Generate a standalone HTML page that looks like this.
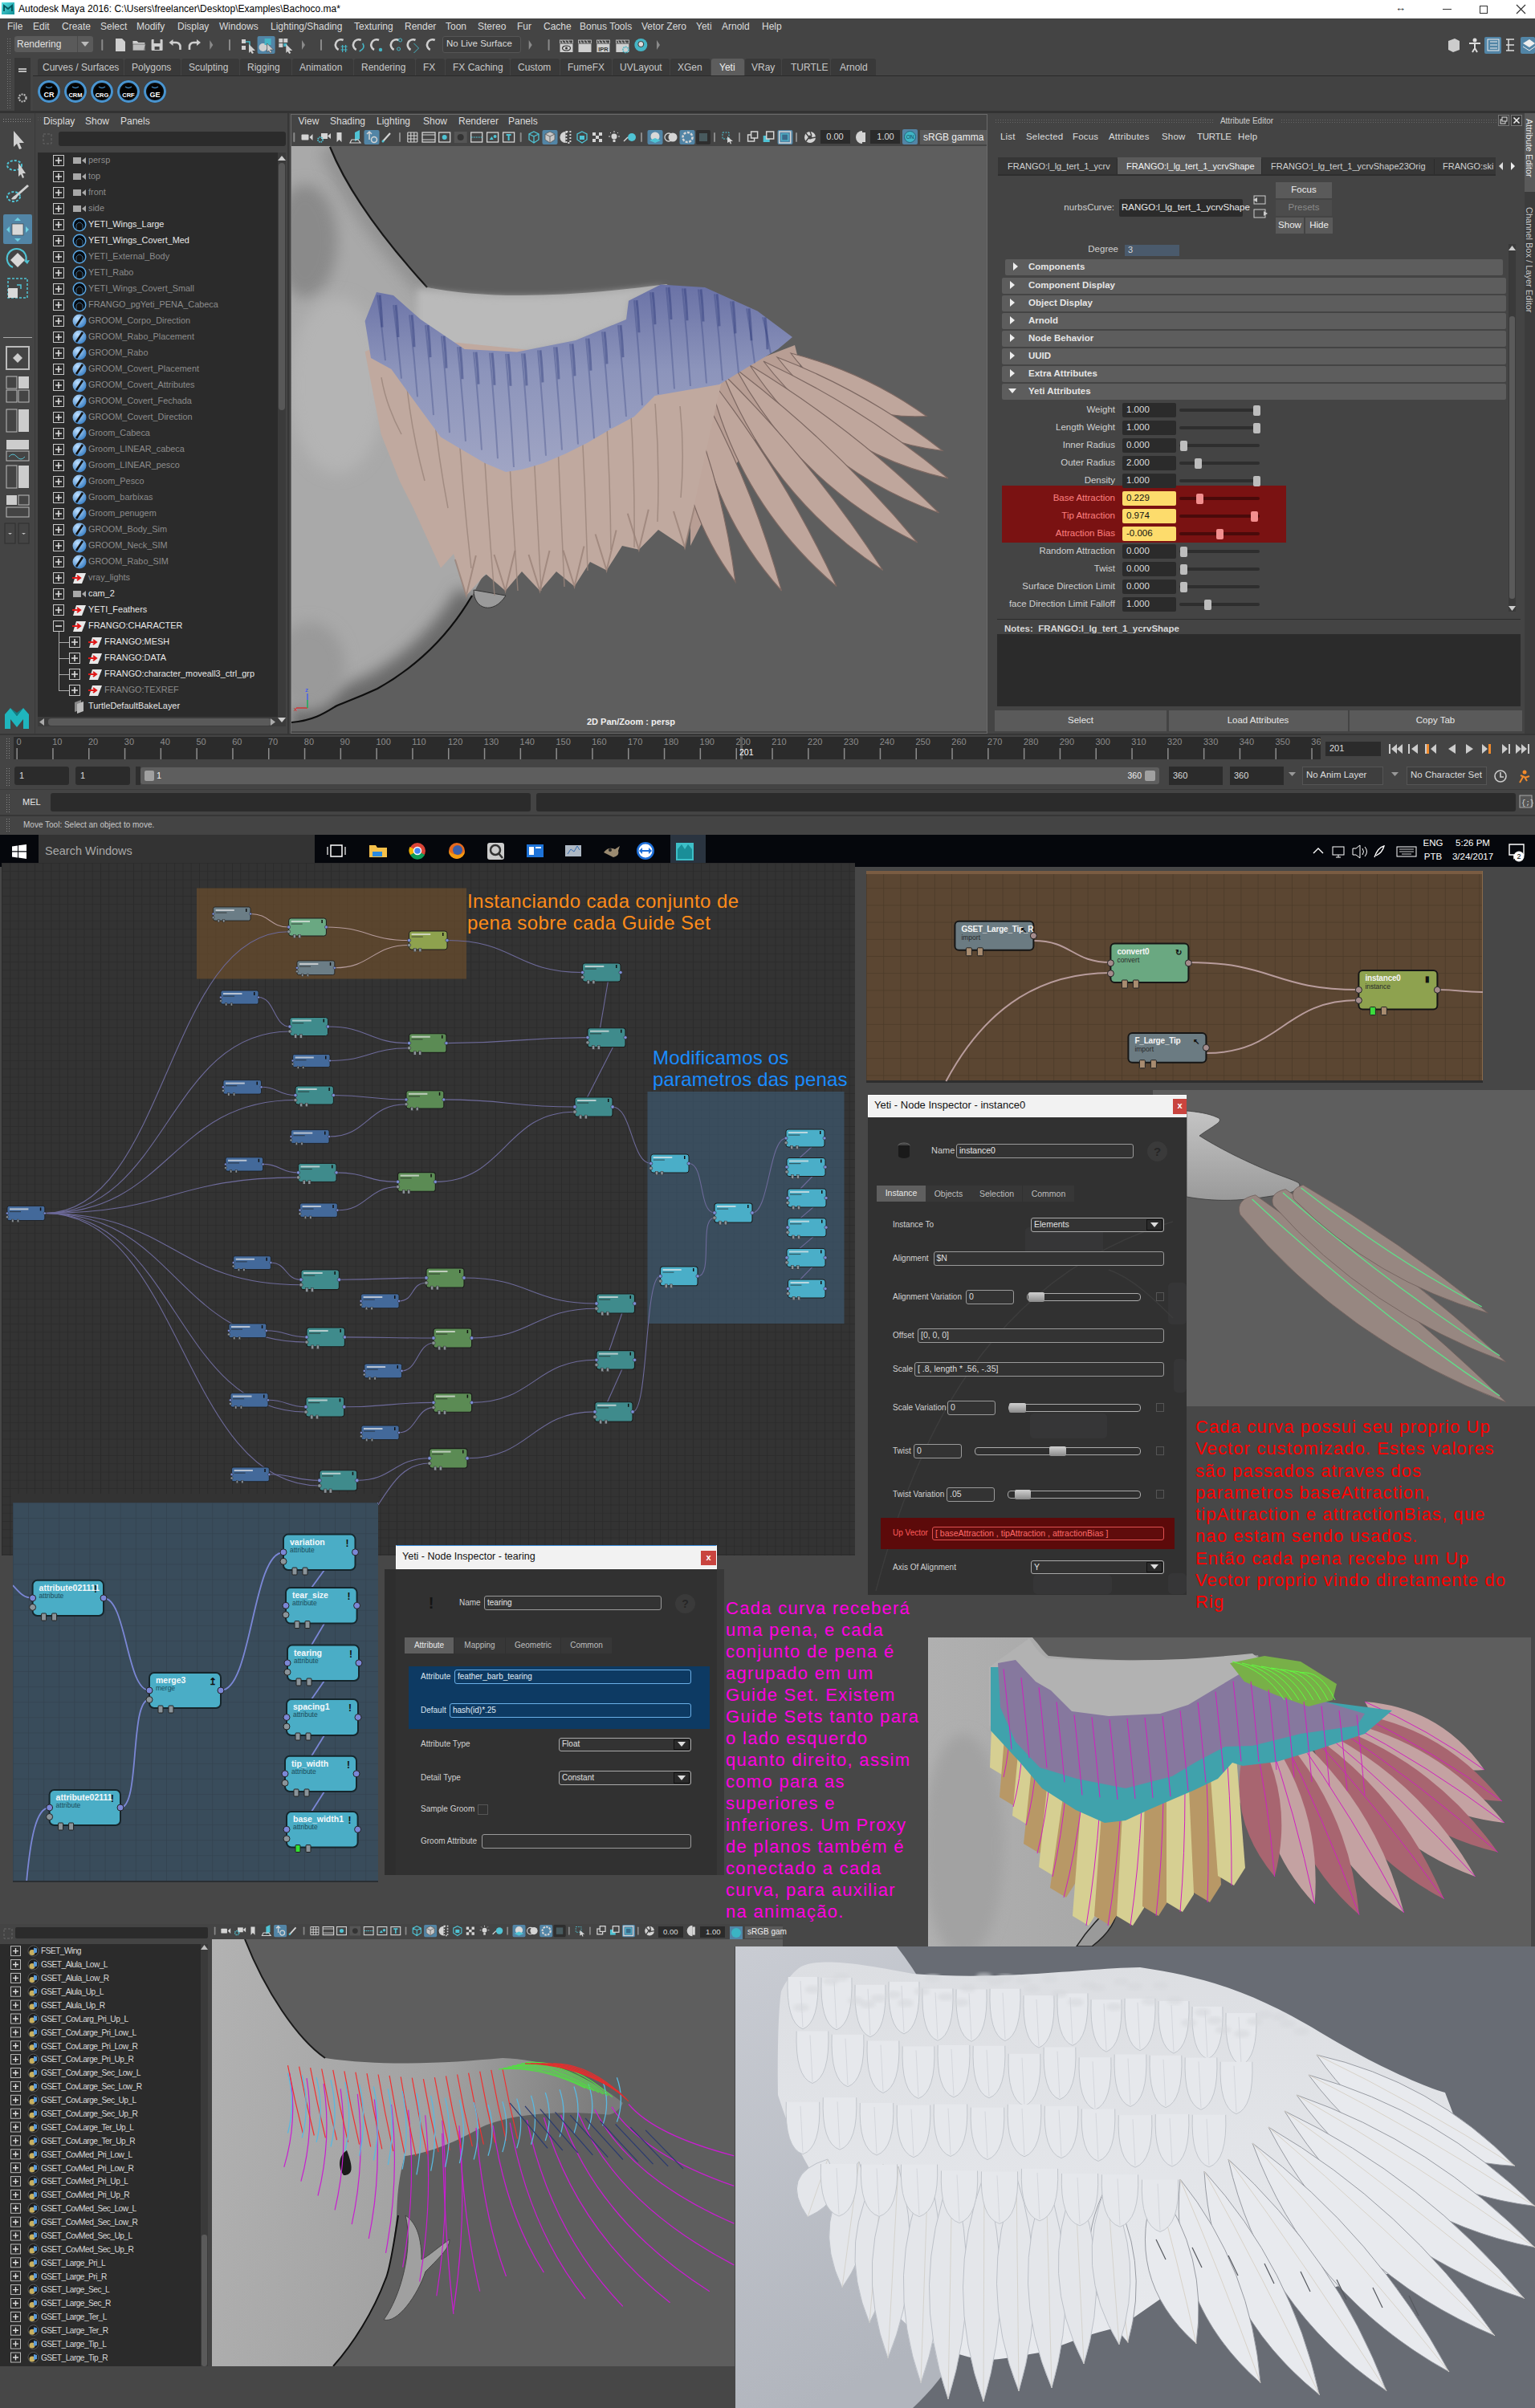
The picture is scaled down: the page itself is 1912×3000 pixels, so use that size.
<!DOCTYPE html>
<html><head><meta charset="utf-8"><title>Maya Yeti</title>
<style>
html,body{margin:0;padding:0;}
body{width:1912px;height:3000px;overflow:hidden;background:#474747;font-family:"Liberation Sans",sans-serif;}
#root{position:relative;width:1912px;height:3000px;overflow:hidden;}
.a{position:absolute;}
.t{position:absolute;white-space:pre;line-height:1;font-family:"Liberation Sans",sans-serif;}
svg{overflow:hidden;}
</style></head><body><div id="root">
<div class="a" style="left:0px;top:0px;width:1912px;height:23px;background:#ffffff;"></div>
<svg class="a" style="left:2px;top:2px;" width="18" height="18" viewBox="0 0 18 18"><defs><linearGradient id="mg" x1="0" y1="0" x2="1" y2="1"><stop offset="0" stop-color="#5fe3e6"/><stop offset="1" stop-color="#0b8c93"/></linearGradient></defs><rect x="0" y="1" width="16" height="15" fill="url(#mg)"/><path d="M3 12 L3 5 L8 9 L13 5 L13 12" stroke="#06585e" stroke-width="2" fill="none"/></svg>
<div class="t" style="left:23px;top:5.1px;font-size:12px;color:#000;">Autodesk Maya 2016: C:\Users\freelancer\Desktop\Examples\Bachoco.ma*</div>
<div class="t" style="left:1738px;top:3.1px;font-size:13px;color:#222;">&#8596;</div>
<div class="a" style="left:1797px;top:11px;width:11px;height:1px;background:#333;"></div>
<div class="a" style="left:1843px;top:7px;width:8px;height:8px;background:transparent;border:1px solid #333;"></div>
<svg class="a" style="left:1888px;top:5px;" width="13" height="13" viewBox="0 0 13 13"><path d="M1 1 L12 12 M12 1 L1 12" stroke="#333" stroke-width="1.2"/></svg>
<div class="a" style="left:0px;top:23px;width:1912px;height:1017px;background:#444444;"></div>
<div class="t" style="left:9px;top:26.6px;font-size:12px;color:#dcdcdc;">File</div>
<div class="t" style="left:41px;top:26.6px;font-size:12px;color:#dcdcdc;">Edit</div>
<div class="t" style="left:77px;top:26.6px;font-size:12px;color:#dcdcdc;">Create</div>
<div class="t" style="left:125px;top:26.6px;font-size:12px;color:#dcdcdc;">Select</div>
<div class="t" style="left:170px;top:26.6px;font-size:12px;color:#dcdcdc;">Modify</div>
<div class="t" style="left:221px;top:26.6px;font-size:12px;color:#dcdcdc;">Display</div>
<div class="t" style="left:273px;top:26.6px;font-size:12px;color:#dcdcdc;">Windows</div>
<div class="t" style="left:337px;top:26.6px;font-size:12px;color:#dcdcdc;">Lighting/Shading</div>
<div class="t" style="left:441px;top:26.6px;font-size:12px;color:#dcdcdc;">Texturing</div>
<div class="t" style="left:504px;top:26.6px;font-size:12px;color:#dcdcdc;">Render</div>
<div class="t" style="left:555px;top:26.6px;font-size:12px;color:#dcdcdc;">Toon</div>
<div class="t" style="left:595px;top:26.6px;font-size:12px;color:#dcdcdc;">Stereo</div>
<div class="t" style="left:644px;top:26.6px;font-size:12px;color:#dcdcdc;">Fur</div>
<div class="t" style="left:677px;top:26.6px;font-size:12px;color:#dcdcdc;">Cache</div>
<div class="t" style="left:722px;top:26.6px;font-size:12px;color:#dcdcdc;">Bonus Tools</div>
<div class="t" style="left:799px;top:26.6px;font-size:12px;color:#dcdcdc;">Vetor Zero</div>
<div class="t" style="left:867px;top:26.6px;font-size:12px;color:#dcdcdc;">Yeti</div>
<div class="t" style="left:899px;top:26.6px;font-size:12px;color:#dcdcdc;">Arnold</div>
<div class="t" style="left:949px;top:26.6px;font-size:12px;color:#dcdcdc;">Help</div>
<svg class="a" style="left:8px;top:48px;" width="6" height="20" viewBox="0 0 6 20"><rect x="1" y="0" width="1" height="1" fill="#777"/><rect x="1" y="3" width="1" height="1" fill="#777"/><rect x="1" y="6" width="1" height="1" fill="#777"/><rect x="1" y="9" width="1" height="1" fill="#777"/><rect x="1" y="12" width="1" height="1" fill="#777"/><rect x="1" y="15" width="1" height="1" fill="#777"/><rect x="1" y="18" width="1" height="1" fill="#777"/><rect x="4" y="0" width="1" height="1" fill="#777"/><rect x="4" y="3" width="1" height="1" fill="#777"/><rect x="4" y="6" width="1" height="1" fill="#777"/><rect x="4" y="9" width="1" height="1" fill="#777"/><rect x="4" y="12" width="1" height="1" fill="#777"/><rect x="4" y="15" width="1" height="1" fill="#777"/><rect x="4" y="18" width="1" height="1" fill="#777"/></svg>
<div class="a" style="left:18px;top:45px;width:98px;height:20px;background:#5a5a5a;border-radius:3px;"></div>
<div class="a" style="left:96px;top:45px;width:1px;height:20px;background:#4a4a4a;"></div>
<div class="t" style="left:21px;top:48.6px;font-size:12px;color:#e0e0e0;">Rendering</div>
<svg class="a" style="left:101px;top:52px;" width="12" height="7" viewBox="0 0 12 7"><path d="M0 0 L10 0 L5 6Z" fill="#bbb"/></svg>
<div class="a" style="left:551px;top:45px;width:98px;height:21px;background:#3e3e3e;border:1px solid #555;border-radius:3px;box-sizing:border-box;"></div>
<div class="t" style="left:556px;top:49.4px;font-size:11.5px;color:#dcdcdc;">No Live Surface</div>
<svg class="a" style="left:120px;top:45px;" width="720" height="22" viewBox="0 0 720 22"><g transform="translate(7.3,11)"><rect x="-1" y="-7" width="2" height="14" rx="1" fill="#8a8a8a"/></g><g transform="translate(166.0,11)"><rect x="-1" y="-7" width="2" height="14" rx="1" fill="#8a8a8a"/></g><g transform="translate(280.0,11)"><rect x="-1" y="-7" width="2" height="14" rx="1" fill="#8a8a8a"/></g><g transform="translate(563.6,11)"><rect x="-1" y="-7" width="2" height="14" rx="1" fill="#8a8a8a"/></g><g transform="translate(143.3,11)"><path d="M-2 -6 L2 0 L-2 6" fill="#8a8a8a"/></g><g transform="translate(258.0,11)"><path d="M-2 -6 L2 0 L-2 6" fill="#8a8a8a"/></g><g transform="translate(540.7,11)"><path d="M-2 -6 L2 0 L-2 6" fill="#8a8a8a"/></g><g transform="translate(700.0,11)"><path d="M-2 -6 L2 0 L-2 6" fill="#8a8a8a"/></g><g transform="translate(211.6,11)"><rect x="-11" y="-11" width="22" height="22" rx="2" fill="#5285a6"/></g><g transform="translate(30.0,11)"><path d="M-6 -8 H2 L6 -4 V8 H-6Z" fill="#cfcfcf"/></g><g transform="translate(53.4,11)"><path d="M-8 -5 H-3 L-1 -3 H7 V7 H-8Z" fill="#cfcfcf"/><path d="M-8 -1 H8 L6 7 H-8Z" fill="#bdbdbd" stroke="#444" stroke-width="0.6"/></g><g transform="translate(75.6,11)"><rect x="-7" y="-7" width="14" height="14" rx="1" fill="#cfcfcf"/><rect x="-4" y="-7" width="8" height="5" fill="#444"/><rect x="-3" y="2" width="6" height="4" fill="#444"/></g><g transform="translate(98.5,11)"><path d="M6 6 V2 A5 5 0 0 0 1 -3 H-5" stroke="#cfcfcf" stroke-width="2.6" fill="none"/><path d="M-8 -3 L-3 -7 V1Z" fill="#cfcfcf"/></g><g transform="translate(122.0,11)"><path d="M-6 6 V2 A5 5 0 0 1 -1 -3 H5" stroke="#cfcfcf" stroke-width="2.6" fill="none"/><path d="M8 -3 L3 -7 V1Z" fill="#cfcfcf"/></g><g transform="translate(189.0,11)"><rect x="-8" y="-7" width="5" height="5" fill="#cfcfcf"/><rect x="-8" y="1" width="5" height="5" fill="#cfcfcf"/><path d="M-3 -4 H2 V2" stroke="#45b5c5" fill="none" stroke-width="1.5"/><path d="M1 -1 L9 7 L5 7 L7 10 L5 11 L3 8 L1 10Z" fill="#cfcfcf"/></g><g transform="translate(211.6,11)"><circle cx="-4" cy="3" r="5" fill="#cfcfcf"/><rect x="-2" y="-8" width="8" height="8" fill="#45b5c5"/><path d="M1 -2 L9 6 L5 6 L7 9 L5 10 L3 7 L1 9Z" fill="#cfcfcf" stroke="#333" stroke-width="0.5"/></g><g transform="translate(235.3,11)"><rect x="-8" y="-8" width="5" height="5" fill="#cfcfcf"/><rect x="-2" y="-8" width="5" height="5" fill="#cfcfcf"/><rect x="-8" y="-2" width="5" height="5" fill="#cfcfcf"/><rect x="-2" y="-2" width="4" height="4" fill="#45b5c5"/><path d="M1 -1 L9 7 L5 7 L7 10 L5 11 L3 8 L1 10Z" fill="#cfcfcf"/></g><g transform="translate(303.6,11)"><path d="M4 -6 A6 6 0 1 0 -2 6" stroke="#cfcfcf" stroke-width="2.6" fill="none"/><path d="M1 2 H9 M1 6 H9 M3 0 V9 M7 0 V9" stroke="#45b5c5" stroke-width="1.2"/></g><g transform="translate(325.7,11)"><path d="M4 -6 A6 6 0 1 0 -2 6" stroke="#cfcfcf" stroke-width="2.6" fill="none"/><path d="M6 -2 Q10 4 2 8" stroke="#45b5c5" stroke-width="1.6" fill="none"/></g><g transform="translate(348.0,11)"><path d="M4 -6 A6 6 0 1 0 -2 6" stroke="#cfcfcf" stroke-width="2.6" fill="none"/><circle cx="6" cy="6" r="2.2" fill="#45b5c5"/></g><g transform="translate(372.6,11)"><path d="M4 -6 A6 6 0 1 0 -2 6" stroke="#cfcfcf" stroke-width="2.6" fill="none"/><circle cx="6" cy="-6" r="2" fill="none" stroke="#45b5c5"/><circle cx="4" cy="5" r="2" fill="none" stroke="#45b5c5"/></g><g transform="translate(393.5,11)"><path d="M4 -6 A6 6 0 1 0 -2 6" stroke="#cfcfcf" stroke-width="2.6" fill="none"/><path d="M2 -2 L8 4 L2 10" stroke="#45b5c5" fill="none"/></g><g transform="translate(417.7,11)"><path d="M4 -6 A6 6 0 1 0 -2 6" stroke="#cfcfcf" stroke-width="2.6" fill="none"/></g><g transform="translate(585.5,11)"><rect x="-8" y="-6" width="16" height="4" fill="#444" stroke="#cfcfcf" stroke-width="0.8"/><path d="M-6 -6 l2 4 M-2 -6 l2 4 M2 -6 l2 4" stroke="#cfcfcf"/><rect x="-8" y="-1" width="16" height="10" fill="#cfcfcf"/><ellipse cx="0" cy="4" rx="5" ry="3" fill="none" stroke="#333" stroke-width="1.2"/><circle cx="0" cy="4" r="1.5" fill="#333"/></g><g transform="translate(608.5,11)"><rect x="-8" y="-6" width="16" height="4" fill="#444" stroke="#cfcfcf" stroke-width="0.8"/><path d="M-6 -6 l2 4 M-2 -6 l2 4 M2 -6 l2 4" stroke="#cfcfcf"/><rect x="-8" y="-1" width="16" height="10" fill="#cfcfcf"/></g><g transform="translate(631.4,11)"><rect x="-8" y="-6" width="16" height="4" fill="#444" stroke="#cfcfcf" stroke-width="0.8"/><path d="M-6 -6 l2 4 M-2 -6 l2 4 M2 -6 l2 4" stroke="#cfcfcf"/><rect x="-8" y="-1" width="16" height="10" fill="#cfcfcf"/><text x="0" y="7.5" font-size="7.5" font-weight="bold" text-anchor="middle" fill="#333" font-family="Liberation Sans">IPR</text></g><g transform="translate(655.4,11)"><rect x="-8" y="-6" width="16" height="4" fill="#444" stroke="#cfcfcf" stroke-width="0.8"/><path d="M-6 -6 l2 4 M-2 -6 l2 4 M2 -6 l2 4" stroke="#cfcfcf"/><rect x="-8" y="-1" width="16" height="10" fill="#cfcfcf"/><circle cx="4" cy="6" r="3.5" fill="none" stroke="#45b5c5" stroke-width="1.8" stroke-dasharray="1.6 1"/></g><g transform="translate(678.3,11)"><circle cx="0" cy="0" r="8" fill="#45b5c5"/><circle cx="0" cy="-1" r="3.5" fill="#ddd" stroke="#333"/></g></svg>
<div class="a" style="left:1849px;top:46px;width:21px;height:21px;background:#5285a6;border-radius:2px;"></div>
<div class="a" style="left:1894px;top:46px;width:18px;height:21px;background:#5285a6;border-radius:2px;"></div>
<svg class="a" style="left:1800px;top:46px;" width="112" height="20" viewBox="0 0 112 20"><path d="M4 5 l8 -3 6 3 v11 l-8 3 -6 -3z" fill="#ccc"/><circle cx="37" cy="4" r="2.5" fill="#ddd"/><path d="M30 8 h14 M37 8 v6 l-3 5 M37 14 l3 5" stroke="#ddd" stroke-width="2"/><rect x="53" y="3" width="14" height="14" fill="none" stroke="#eee"/><path d="M56 6h9M56 10h9M56 14h9" stroke="#eee"/><path d="M76 3h10M76 10h10M76 17h10M79 3v14" stroke="#ddd" stroke-width="1.5"/><path d="M97 8 l8 -5 7 5 -7 5z" fill="#eee"/><path d="M97 12 l8 5 7 -5" stroke="#eee" fill="none"/></svg>
<svg class="a" style="left:8px;top:74px;" width="6" height="62" viewBox="0 0 6 62"><rect x="1" y="0" width="1" height="1" fill="#777"/><rect x="1" y="3" width="1" height="1" fill="#777"/><rect x="1" y="6" width="1" height="1" fill="#777"/><rect x="1" y="9" width="1" height="1" fill="#777"/><rect x="1" y="12" width="1" height="1" fill="#777"/><rect x="1" y="15" width="1" height="1" fill="#777"/><rect x="1" y="18" width="1" height="1" fill="#777"/><rect x="1" y="21" width="1" height="1" fill="#777"/><rect x="1" y="24" width="1" height="1" fill="#777"/><rect x="1" y="27" width="1" height="1" fill="#777"/><rect x="1" y="30" width="1" height="1" fill="#777"/><rect x="1" y="33" width="1" height="1" fill="#777"/><rect x="1" y="36" width="1" height="1" fill="#777"/><rect x="1" y="39" width="1" height="1" fill="#777"/><rect x="1" y="42" width="1" height="1" fill="#777"/><rect x="1" y="45" width="1" height="1" fill="#777"/><rect x="1" y="48" width="1" height="1" fill="#777"/><rect x="1" y="51" width="1" height="1" fill="#777"/><rect x="1" y="54" width="1" height="1" fill="#777"/><rect x="1" y="57" width="1" height="1" fill="#777"/><rect x="1" y="60" width="1" height="1" fill="#777"/><rect x="4" y="0" width="1" height="1" fill="#777"/><rect x="4" y="3" width="1" height="1" fill="#777"/><rect x="4" y="6" width="1" height="1" fill="#777"/><rect x="4" y="9" width="1" height="1" fill="#777"/><rect x="4" y="12" width="1" height="1" fill="#777"/><rect x="4" y="15" width="1" height="1" fill="#777"/><rect x="4" y="18" width="1" height="1" fill="#777"/><rect x="4" y="21" width="1" height="1" fill="#777"/><rect x="4" y="24" width="1" height="1" fill="#777"/><rect x="4" y="27" width="1" height="1" fill="#777"/><rect x="4" y="30" width="1" height="1" fill="#777"/><rect x="4" y="33" width="1" height="1" fill="#777"/><rect x="4" y="36" width="1" height="1" fill="#777"/><rect x="4" y="39" width="1" height="1" fill="#777"/><rect x="4" y="42" width="1" height="1" fill="#777"/><rect x="4" y="45" width="1" height="1" fill="#777"/><rect x="4" y="48" width="1" height="1" fill="#777"/><rect x="4" y="51" width="1" height="1" fill="#777"/><rect x="4" y="54" width="1" height="1" fill="#777"/><rect x="4" y="57" width="1" height="1" fill="#777"/><rect x="4" y="60" width="1" height="1" fill="#777"/></svg>
<div class="a" style="left:18px;top:72px;width:20px;height:66px;background:#373737;"></div>
<div class="a" style="left:23px;top:85px;width:10px;height:2px;background:#bbb;"></div>
<div class="a" style="left:23px;top:88px;width:10px;height:2px;background:#bbb;"></div>
<svg class="a" style="left:21px;top:115px;" width="14" height="14" viewBox="0 0 14 14"><circle cx="7" cy="7" r="4.5" stroke="#bbb" stroke-width="2.2" fill="none" stroke-dasharray="2 1.2"/></svg>
<div class="a" style="left:41px;top:94px;width:1871px;height:1px;background:#2a2a2a;"></div>
<div class="a" style="left:41px;top:95px;width:1871px;height:43px;background:#424242;"></div>
<div class="a" style="left:47px;top:73px;width:107px;height:21px;background:#393939;border-radius:3px 3px 0 0;"></div>
<div class="t" style="left:53px;top:77.6px;font-size:12px;color:#c8c8c8;">Curves / Surfaces</div>
<div class="a" style="left:155px;top:73px;width:70px;height:21px;background:#393939;border-radius:3px 3px 0 0;"></div>
<div class="t" style="left:164px;top:77.6px;font-size:12px;color:#c8c8c8;">Polygons</div>
<div class="a" style="left:226px;top:73px;width:72px;height:21px;background:#393939;border-radius:3px 3px 0 0;"></div>
<div class="t" style="left:235px;top:77.6px;font-size:12px;color:#c8c8c8;">Sculpting</div>
<div class="a" style="left:299px;top:73px;width:64px;height:21px;background:#393939;border-radius:3px 3px 0 0;"></div>
<div class="t" style="left:308px;top:77.6px;font-size:12px;color:#c8c8c8;">Rigging</div>
<div class="a" style="left:364px;top:73px;width:76px;height:21px;background:#393939;border-radius:3px 3px 0 0;"></div>
<div class="t" style="left:373px;top:77.6px;font-size:12px;color:#c8c8c8;">Animation</div>
<div class="a" style="left:441px;top:73px;width:76px;height:21px;background:#393939;border-radius:3px 3px 0 0;"></div>
<div class="t" style="left:450px;top:77.6px;font-size:12px;color:#c8c8c8;">Rendering</div>
<div class="a" style="left:518px;top:73px;width:36px;height:21px;background:#393939;border-radius:3px 3px 0 0;"></div>
<div class="t" style="left:527px;top:77.6px;font-size:12px;color:#c8c8c8;">FX</div>
<div class="a" style="left:555px;top:73px;width:80px;height:21px;background:#393939;border-radius:3px 3px 0 0;"></div>
<div class="t" style="left:564px;top:77.6px;font-size:12px;color:#c8c8c8;">FX Caching</div>
<div class="a" style="left:636px;top:73px;width:61px;height:21px;background:#393939;border-radius:3px 3px 0 0;"></div>
<div class="t" style="left:645px;top:77.6px;font-size:12px;color:#c8c8c8;">Custom</div>
<div class="a" style="left:698px;top:73px;width:64px;height:21px;background:#393939;border-radius:3px 3px 0 0;"></div>
<div class="t" style="left:707px;top:77.6px;font-size:12px;color:#c8c8c8;">FumeFX</div>
<div class="a" style="left:763px;top:73px;width:71px;height:21px;background:#393939;border-radius:3px 3px 0 0;"></div>
<div class="t" style="left:772px;top:77.6px;font-size:12px;color:#c8c8c8;">UVLayout</div>
<div class="a" style="left:835px;top:73px;width:50px;height:21px;background:#393939;border-radius:3px 3px 0 0;"></div>
<div class="t" style="left:844px;top:77.6px;font-size:12px;color:#c8c8c8;">XGen</div>
<div class="a" style="left:886px;top:73px;width:41px;height:21px;background:#5d5d5d;border-radius:3px 3px 0 0;"></div>
<div class="t" style="left:896px;top:77.6px;font-size:12px;color:#f0f0f0;">Yeti</div>
<div class="a" style="left:928px;top:73px;width:45px;height:21px;background:#393939;border-radius:3px 3px 0 0;"></div>
<div class="t" style="left:936px;top:77.6px;font-size:12px;color:#c8c8c8;">VRay</div>
<div class="a" style="left:974px;top:73px;width:60px;height:21px;background:#393939;border-radius:3px 3px 0 0;"></div>
<div class="t" style="left:985px;top:77.6px;font-size:12px;color:#c8c8c8;">TURTLE</div>
<div class="a" style="left:1035px;top:73px;width:56px;height:21px;background:#393939;border-radius:3px 3px 0 0;"></div>
<div class="t" style="left:1046px;top:77.6px;font-size:12px;color:#c8c8c8;">Arnold</div>
<svg class="a" style="left:46px;top:99px;" width="30" height="30" viewBox="0 0 30 30"><circle cx="15" cy="15" r="14" fill="#0a0a0a"/><circle cx="15" cy="15" r="12.5" fill="none" stroke="#4a94cf" stroke-width="3"/><circle cx="15" cy="15" r="9" fill="#020202"/><path d="M11 9 q4 3 8 0" stroke="#3d7fb5" stroke-width="1.5" fill="none"/><text x="15" y="22" text-anchor="middle" font-size="9" font-weight="bold" fill="#fff" font-family="Liberation Sans">CR</text></svg>
<svg class="a" style="left:79px;top:99px;" width="30" height="30" viewBox="0 0 30 30"><circle cx="15" cy="15" r="14" fill="#0a0a0a"/><circle cx="15" cy="15" r="12.5" fill="none" stroke="#4a94cf" stroke-width="3"/><circle cx="15" cy="15" r="9" fill="#020202"/><path d="M11 9 q4 3 8 0" stroke="#3d7fb5" stroke-width="1.5" fill="none"/><text x="15" y="22" text-anchor="middle" font-size="7.5" font-weight="bold" fill="#fff" font-family="Liberation Sans">CRM</text></svg>
<svg class="a" style="left:112px;top:99px;" width="30" height="30" viewBox="0 0 30 30"><circle cx="15" cy="15" r="14" fill="#0a0a0a"/><circle cx="15" cy="15" r="12.5" fill="none" stroke="#4a94cf" stroke-width="3"/><circle cx="15" cy="15" r="9" fill="#020202"/><path d="M11 9 q4 3 8 0" stroke="#3d7fb5" stroke-width="1.5" fill="none"/><text x="15" y="22" text-anchor="middle" font-size="7.5" font-weight="bold" fill="#fff" font-family="Liberation Sans">CRG</text></svg>
<svg class="a" style="left:145px;top:99px;" width="30" height="30" viewBox="0 0 30 30"><circle cx="15" cy="15" r="14" fill="#0a0a0a"/><circle cx="15" cy="15" r="12.5" fill="none" stroke="#4a94cf" stroke-width="3"/><circle cx="15" cy="15" r="9" fill="#020202"/><path d="M11 9 q4 3 8 0" stroke="#3d7fb5" stroke-width="1.5" fill="none"/><text x="15" y="22" text-anchor="middle" font-size="7.5" font-weight="bold" fill="#fff" font-family="Liberation Sans">CRF</text></svg>
<svg class="a" style="left:178px;top:99px;" width="30" height="30" viewBox="0 0 30 30"><circle cx="15" cy="15" r="14" fill="#0a0a0a"/><circle cx="15" cy="15" r="12.5" fill="none" stroke="#4a94cf" stroke-width="3"/><circle cx="15" cy="15" r="9" fill="#020202"/><path d="M11 9 q4 3 8 0" stroke="#3d7fb5" stroke-width="1.5" fill="none"/><text x="15" y="22" text-anchor="middle" font-size="9" font-weight="bold" fill="#fff" font-family="Liberation Sans">GE</text></svg>
<div class="a" style="left:0px;top:138px;width:1912px;height:3px;background:#333333;"></div>
<div class="a" style="left:0px;top:141px;width:43px;height:773px;background:#444444;"></div>
<div class="a" style="left:43px;top:141px;width:1px;height:773px;background:#3a3a3a;"></div>
<svg class="a" style="left:4px;top:147px;" width="34" height="6" viewBox="0 0 34 6"><rect x="0" y="1" width="1" height="1" fill="#888"/><rect x="0" y="4" width="1" height="1" fill="#888"/><rect x="3" y="1" width="1" height="1" fill="#888"/><rect x="3" y="4" width="1" height="1" fill="#888"/><rect x="6" y="1" width="1" height="1" fill="#888"/><rect x="6" y="4" width="1" height="1" fill="#888"/><rect x="9" y="1" width="1" height="1" fill="#888"/><rect x="9" y="4" width="1" height="1" fill="#888"/><rect x="12" y="1" width="1" height="1" fill="#888"/><rect x="12" y="4" width="1" height="1" fill="#888"/><rect x="15" y="1" width="1" height="1" fill="#888"/><rect x="15" y="4" width="1" height="1" fill="#888"/><rect x="18" y="1" width="1" height="1" fill="#888"/><rect x="18" y="4" width="1" height="1" fill="#888"/><rect x="21" y="1" width="1" height="1" fill="#888"/><rect x="21" y="4" width="1" height="1" fill="#888"/><rect x="24" y="1" width="1" height="1" fill="#888"/><rect x="24" y="4" width="1" height="1" fill="#888"/><rect x="27" y="1" width="1" height="1" fill="#888"/><rect x="27" y="4" width="1" height="1" fill="#888"/><rect x="30" y="1" width="1" height="1" fill="#888"/><rect x="30" y="4" width="1" height="1" fill="#888"/><rect x="33" y="1" width="1" height="1" fill="#888"/><rect x="33" y="4" width="1" height="1" fill="#888"/></svg>
<svg class="a" style="left:4px;top:158px;" width="36" height="230" viewBox="0 0 36 230"><path d="M13 5 L13 25 L17 21 L20 28 L23 27 L20 20 L26 20Z" fill="#d0d0d0"/><ellipse cx="14" cy="48" rx="9" ry="6" stroke="#4fc3d4" stroke-width="2" fill="none" stroke-dasharray="3 2"/><path d="M19 45 L19 62 L22 59 L24 64 L26 63 L24 58 L28 58Z" fill="#d0d0d0"/><ellipse cx="13" cy="87" rx="8" ry="6" stroke="#4fc3d4" stroke-width="2" fill="none" stroke-dasharray="3 2"/><path d="M14 88 L31 73" stroke="#d0d0d0" stroke-width="3"/><path d="M10 90 q4 -6 8 -4 q-2 6 -8 4z" fill="#d0d0d0"/><rect x="0" y="109" width="36" height="37" rx="2" fill="#5285a6"/><rect x="11" y="121" width="14" height="14" fill="#d8d8d8" stroke="#333" stroke-width="0.6"/><path d="M18 113 l4 4 h-8z M18 143 l4 -4 h-8z M4 128 l4 -4 v8z M32 128 l-4 -4 v8z" fill="#6fd0e0"/><path d="M28 168 A12 12 0 1 0 12 175" stroke="#4fc3d4" stroke-width="2" fill="none"/><path d="M26 167 l4 4 l3 -5z" fill="#4fc3d4"/><path d="M18 157 l9 9 -9 9 -9 -9z" fill="#d8d8d8"/><rect x="6" y="189" width="24" height="24" fill="none" stroke="#4fc3d4" stroke-width="1.5" stroke-dasharray="3 2"/><rect x="6" y="201" width="12" height="12" fill="#d8d8d8"/><path d="M17 197 h5 v5" stroke="#4fc3d4" stroke-width="1.5" fill="none"/></svg>
<div class="a" style="left:4px;top:420px;width:36px;height:1px;background:#aaa;"></div>
<svg class="a" style="left:4px;top:430px;" width="36" height="250" viewBox="0 0 36 250"><rect x="4" y="2" width="28" height="28" fill="none" stroke="#bbb" stroke-width="2"/><path d="M18 10 l6 6 -6 6 -6 -6z" fill="#ccc"/><rect x="4" y="39" width="13" height="15" fill="none" stroke="#bbb"/><rect x="19" y="39" width="13" height="15" fill="#ccc"/><rect x="4" y="56" width="13" height="15" fill="none" stroke="#bbb"/><rect x="19" y="56" width="13" height="15" fill="none" stroke="#bbb"/><rect x="4" y="80" width="13" height="28" fill="none" stroke="#bbb"/><rect x="19" y="80" width="13" height="28" fill="#ccc"/><rect x="4" y="118" width="28" height="12" fill="#ccc"/><rect x="4" y="132" width="28" height="12" fill="none" stroke="#bbb"/><path d="M7 139 q5 -6 10 0 t10 0" stroke="#5ac0d0" fill="none"/><rect x="4" y="150" width="13" height="28" fill="none" stroke="#bbb"/><rect x="19" y="150" width="13" height="28" fill="#ccc"/><rect x="4" y="187" width="13" height="12" fill="#ccc"/><rect x="19" y="187" width="13" height="12" fill="none" stroke="#bbb"/><rect x="4" y="202" width="28" height="12" fill="none" stroke="#bbb"/><rect x="2" y="222" width="13" height="25" fill="none" stroke="#2f2f2f"/><rect x="19" y="222" width="13" height="25" fill="none" stroke="#2f2f2f"/><path d="M6 234 h5 l-2.5 2z M23 234 h5 l-2.5 2z" fill="#bbb"/></svg>
<svg class="a" style="left:4px;top:880px;" width="34" height="30" viewBox="0 0 34 30"><path d="M2 28 L2 10 L9 2 L17 12 L25 2 L32 10 L32 28 L25 28 L25 16 L17 26 L9 16 L9 28Z" fill="#1fb5bd"/><path d="M9 2 L17 12 L25 2 L17 8Z" fill="#0f7f86"/></svg>
<div class="a" style="left:44px;top:141px;width:314px;height:773px;background:#444444;"></div>
<div class="a" style="left:358px;top:141px;width:2px;height:773px;background:#363636;"></div>
<svg class="a" style="left:47px;top:145px;" width="22" height="6" viewBox="0 0 22 6"><rect x="0" y="1" width="1" height="1" fill="#555"/><rect x="0" y="4" width="1" height="1" fill="#555"/><rect x="3" y="1" width="1" height="1" fill="#555"/><rect x="3" y="4" width="1" height="1" fill="#555"/><rect x="6" y="1" width="1" height="1" fill="#555"/><rect x="6" y="4" width="1" height="1" fill="#555"/><rect x="9" y="1" width="1" height="1" fill="#555"/><rect x="9" y="4" width="1" height="1" fill="#555"/><rect x="12" y="1" width="1" height="1" fill="#555"/><rect x="12" y="4" width="1" height="1" fill="#555"/><rect x="15" y="1" width="1" height="1" fill="#555"/><rect x="15" y="4" width="1" height="1" fill="#555"/><rect x="18" y="1" width="1" height="1" fill="#555"/><rect x="18" y="4" width="1" height="1" fill="#555"/></svg>
<div class="t" style="left:54px;top:145.1px;font-size:12px;color:#dcdcdc;">Display</div>
<div class="t" style="left:106px;top:145.1px;font-size:12px;color:#dcdcdc;">Show</div>
<div class="t" style="left:150px;top:145.1px;font-size:12px;color:#dcdcdc;">Panels</div>
<svg class="a" style="left:51px;top:166px;" width="16" height="14" viewBox="0 0 16 14"><path d="M3 1 h10 v12 h-10z" stroke="#666" fill="none" stroke-dasharray="3 2"/></svg>
<div class="a" style="left:73px;top:164px;width:283px;height:18px;background:#2b2b2b;border-radius:3px;"></div>
<div class="a" style="left:47px;top:190px;width:299px;height:715px;background:#2b2b2b;"></div>
<div class="a" style="left:346px;top:190px;width:10px;height:715px;background:#3b3b3b;"></div>
<svg class="a" style="left:346px;top:193px;" width="10" height="8" viewBox="0 0 10 8"><path d="M0 7 L5 1 L10 7Z" fill="#ccc"/></svg>
<div class="a" style="left:347px;top:203px;width:8px;height:308px;background:#585858;border-radius:4px;"></div>
<svg class="a" style="left:346px;top:893px;" width="10" height="8" viewBox="0 0 10 8"><path d="M0 1 L5 7 L10 1Z" fill="#ccc"/></svg>
<div class="a" style="left:47px;top:893px;width:299px;height:12px;background:#3b3b3b;"></div>
<svg class="a" style="left:48px;top:895px;" width="8" height="9" viewBox="0 0 8 9"><path d="M7 0 L1 4.5 L7 9Z" fill="#aaa"/></svg>
<div class="a" style="left:60px;top:895px;width:278px;height:9px;background:#5a5a5a;border-radius:4px;"></div>
<svg class="a" style="left:336px;top:895px;" width="8" height="9" viewBox="0 0 8 9"><path d="M1 0 L7 4.5 L1 9Z" fill="#aaa"/></svg>
<svg class="a" style="left:66px;top:193px;" width="15" height="15" viewBox="0 0 15 15"><rect x="0.5" y="0.5" width="13" height="13" fill="none" stroke="#c8c8c8"/><path d="M3 7h8M7 3v8" stroke="#ddd" stroke-width="1.6"/></svg>
<svg class="a" style="left:90px;top:195px;" width="18" height="10" viewBox="0 0 18 10"><rect x="1" y="1" width="10" height="8" fill="#a8a8a8"/><path d="M12 5 L17 1 V9Z" fill="#a8a8a8"/></svg>
<div class="t" style="left:110px;top:194.2px;font-size:10.9px;color:#8c8c8c;">persp</div>
<svg class="a" style="left:66px;top:213px;" width="15" height="15" viewBox="0 0 15 15"><rect x="0.5" y="0.5" width="13" height="13" fill="none" stroke="#c8c8c8"/><path d="M3 7h8M7 3v8" stroke="#ddd" stroke-width="1.6"/></svg>
<svg class="a" style="left:90px;top:215px;" width="18" height="10" viewBox="0 0 18 10"><rect x="1" y="1" width="10" height="8" fill="#a8a8a8"/><path d="M12 5 L17 1 V9Z" fill="#a8a8a8"/></svg>
<div class="t" style="left:110px;top:214.2px;font-size:10.9px;color:#8c8c8c;">top</div>
<svg class="a" style="left:66px;top:233px;" width="15" height="15" viewBox="0 0 15 15"><rect x="0.5" y="0.5" width="13" height="13" fill="none" stroke="#c8c8c8"/><path d="M3 7h8M7 3v8" stroke="#ddd" stroke-width="1.6"/></svg>
<svg class="a" style="left:90px;top:235px;" width="18" height="10" viewBox="0 0 18 10"><rect x="1" y="1" width="10" height="8" fill="#a8a8a8"/><path d="M12 5 L17 1 V9Z" fill="#a8a8a8"/></svg>
<div class="t" style="left:110px;top:234.2px;font-size:10.9px;color:#8c8c8c;">front</div>
<svg class="a" style="left:66px;top:253px;" width="15" height="15" viewBox="0 0 15 15"><rect x="0.5" y="0.5" width="13" height="13" fill="none" stroke="#c8c8c8"/><path d="M3 7h8M7 3v8" stroke="#ddd" stroke-width="1.6"/></svg>
<svg class="a" style="left:90px;top:255px;" width="18" height="10" viewBox="0 0 18 10"><rect x="1" y="1" width="10" height="8" fill="#a8a8a8"/><path d="M12 5 L17 1 V9Z" fill="#a8a8a8"/></svg>
<div class="t" style="left:110px;top:254.2px;font-size:10.9px;color:#8c8c8c;">side</div>
<svg class="a" style="left:66px;top:273px;" width="15" height="15" viewBox="0 0 15 15"><rect x="0.5" y="0.5" width="13" height="13" fill="none" stroke="#c8c8c8"/><path d="M3 7h8M7 3v8" stroke="#ddd" stroke-width="1.6"/></svg>
<svg class="a" style="left:90px;top:271px;" width="18" height="18" viewBox="0 0 18 18"><circle cx="9" cy="9" r="8.5" fill="#5aa8e6"/><circle cx="9" cy="9" r="7" fill="#050a10"/><path d="M5 15 v-6 q4 -6 8 0 v6" fill="#111" stroke="#5aa8e6" stroke-width="0.6"/></svg>
<div class="t" style="left:110px;top:274.2px;font-size:10.9px;color:#e8e8e8;">YETI_Wings_Large</div>
<svg class="a" style="left:66px;top:293px;" width="15" height="15" viewBox="0 0 15 15"><rect x="0.5" y="0.5" width="13" height="13" fill="none" stroke="#c8c8c8"/><path d="M3 7h8M7 3v8" stroke="#ddd" stroke-width="1.6"/></svg>
<svg class="a" style="left:90px;top:291px;" width="18" height="18" viewBox="0 0 18 18"><circle cx="9" cy="9" r="8.5" fill="#5aa8e6"/><circle cx="9" cy="9" r="7" fill="#050a10"/><path d="M5 15 v-6 q4 -6 8 0 v6" fill="#111" stroke="#5aa8e6" stroke-width="0.6"/></svg>
<div class="t" style="left:110px;top:294.2px;font-size:10.9px;color:#e8e8e8;">YETI_Wings_Covert_Med</div>
<svg class="a" style="left:66px;top:313px;" width="15" height="15" viewBox="0 0 15 15"><rect x="0.5" y="0.5" width="13" height="13" fill="none" stroke="#c8c8c8"/><path d="M3 7h8M7 3v8" stroke="#ddd" stroke-width="1.6"/></svg>
<svg class="a" style="left:90px;top:311px;" width="18" height="18" viewBox="0 0 18 18"><circle cx="9" cy="9" r="8.5" fill="#5aa8e6"/><circle cx="9" cy="9" r="7" fill="#050a10"/><path d="M5 15 v-6 q4 -6 8 0 v6" fill="#111" stroke="#5aa8e6" stroke-width="0.6"/></svg>
<div class="t" style="left:110px;top:314.2px;font-size:10.9px;color:#8c8c8c;">YETI_External_Body</div>
<svg class="a" style="left:66px;top:333px;" width="15" height="15" viewBox="0 0 15 15"><rect x="0.5" y="0.5" width="13" height="13" fill="none" stroke="#c8c8c8"/><path d="M3 7h8M7 3v8" stroke="#ddd" stroke-width="1.6"/></svg>
<svg class="a" style="left:90px;top:331px;" width="18" height="18" viewBox="0 0 18 18"><circle cx="9" cy="9" r="8.5" fill="#5aa8e6"/><circle cx="9" cy="9" r="7" fill="#050a10"/><path d="M5 15 v-6 q4 -6 8 0 v6" fill="#111" stroke="#5aa8e6" stroke-width="0.6"/></svg>
<div class="t" style="left:110px;top:334.2px;font-size:10.9px;color:#8c8c8c;">YETI_Rabo</div>
<svg class="a" style="left:66px;top:353px;" width="15" height="15" viewBox="0 0 15 15"><rect x="0.5" y="0.5" width="13" height="13" fill="none" stroke="#c8c8c8"/><path d="M3 7h8M7 3v8" stroke="#ddd" stroke-width="1.6"/></svg>
<svg class="a" style="left:90px;top:351px;" width="18" height="18" viewBox="0 0 18 18"><circle cx="9" cy="9" r="8.5" fill="#5aa8e6"/><circle cx="9" cy="9" r="7" fill="#050a10"/><path d="M5 15 v-6 q4 -6 8 0 v6" fill="#111" stroke="#5aa8e6" stroke-width="0.6"/></svg>
<div class="t" style="left:110px;top:354.2px;font-size:10.9px;color:#8c8c8c;">YETI_Wings_Covert_Small</div>
<svg class="a" style="left:66px;top:373px;" width="15" height="15" viewBox="0 0 15 15"><rect x="0.5" y="0.5" width="13" height="13" fill="none" stroke="#c8c8c8"/><path d="M3 7h8M7 3v8" stroke="#ddd" stroke-width="1.6"/></svg>
<svg class="a" style="left:90px;top:371px;" width="18" height="18" viewBox="0 0 18 18"><circle cx="9" cy="9" r="8.5" fill="#5aa8e6"/><circle cx="9" cy="9" r="7" fill="#050a10"/><path d="M5 15 v-6 q4 -6 8 0 v6" fill="#111" stroke="#5aa8e6" stroke-width="0.6"/></svg>
<div class="t" style="left:110px;top:374.2px;font-size:10.9px;color:#8c8c8c;">FRANGO_pgYeti_PENA_Cabeca</div>
<svg class="a" style="left:66px;top:393px;" width="15" height="15" viewBox="0 0 15 15"><rect x="0.5" y="0.5" width="13" height="13" fill="none" stroke="#c8c8c8"/><path d="M3 7h8M7 3v8" stroke="#ddd" stroke-width="1.6"/></svg>
<svg class="a" style="left:90px;top:391px;" width="18" height="18" viewBox="0 0 18 18"><defs><radialGradient id="gg" cx="0.35" cy="0.3" r="0.8"><stop offset="0" stop-color="#bfe0ff"/><stop offset="1" stop-color="#2f78c0"/></radialGradient></defs><circle cx="9" cy="9" r="8.5" fill="url(#gg)"/><path d="M5 15 L13 3" stroke="#111" stroke-width="2.6"/></svg>
<div class="t" style="left:110px;top:394.2px;font-size:10.9px;color:#8c8c8c;">GROOM_Corpo_Direction</div>
<svg class="a" style="left:66px;top:413px;" width="15" height="15" viewBox="0 0 15 15"><rect x="0.5" y="0.5" width="13" height="13" fill="none" stroke="#c8c8c8"/><path d="M3 7h8M7 3v8" stroke="#ddd" stroke-width="1.6"/></svg>
<svg class="a" style="left:90px;top:411px;" width="18" height="18" viewBox="0 0 18 18"><defs><radialGradient id="gg" cx="0.35" cy="0.3" r="0.8"><stop offset="0" stop-color="#bfe0ff"/><stop offset="1" stop-color="#2f78c0"/></radialGradient></defs><circle cx="9" cy="9" r="8.5" fill="url(#gg)"/><path d="M5 15 L13 3" stroke="#111" stroke-width="2.6"/></svg>
<div class="t" style="left:110px;top:414.2px;font-size:10.9px;color:#8c8c8c;">GROOM_Rabo_Placement</div>
<svg class="a" style="left:66px;top:433px;" width="15" height="15" viewBox="0 0 15 15"><rect x="0.5" y="0.5" width="13" height="13" fill="none" stroke="#c8c8c8"/><path d="M3 7h8M7 3v8" stroke="#ddd" stroke-width="1.6"/></svg>
<svg class="a" style="left:90px;top:431px;" width="18" height="18" viewBox="0 0 18 18"><defs><radialGradient id="gg" cx="0.35" cy="0.3" r="0.8"><stop offset="0" stop-color="#bfe0ff"/><stop offset="1" stop-color="#2f78c0"/></radialGradient></defs><circle cx="9" cy="9" r="8.5" fill="url(#gg)"/><path d="M5 15 L13 3" stroke="#111" stroke-width="2.6"/></svg>
<div class="t" style="left:110px;top:434.2px;font-size:10.9px;color:#8c8c8c;">GROOM_Rabo</div>
<svg class="a" style="left:66px;top:453px;" width="15" height="15" viewBox="0 0 15 15"><rect x="0.5" y="0.5" width="13" height="13" fill="none" stroke="#c8c8c8"/><path d="M3 7h8M7 3v8" stroke="#ddd" stroke-width="1.6"/></svg>
<svg class="a" style="left:90px;top:451px;" width="18" height="18" viewBox="0 0 18 18"><defs><radialGradient id="gg" cx="0.35" cy="0.3" r="0.8"><stop offset="0" stop-color="#bfe0ff"/><stop offset="1" stop-color="#2f78c0"/></radialGradient></defs><circle cx="9" cy="9" r="8.5" fill="url(#gg)"/><path d="M5 15 L13 3" stroke="#111" stroke-width="2.6"/></svg>
<div class="t" style="left:110px;top:454.2px;font-size:10.9px;color:#8c8c8c;">GROOM_Covert_Placement</div>
<svg class="a" style="left:66px;top:473px;" width="15" height="15" viewBox="0 0 15 15"><rect x="0.5" y="0.5" width="13" height="13" fill="none" stroke="#c8c8c8"/><path d="M3 7h8M7 3v8" stroke="#ddd" stroke-width="1.6"/></svg>
<svg class="a" style="left:90px;top:471px;" width="18" height="18" viewBox="0 0 18 18"><defs><radialGradient id="gg" cx="0.35" cy="0.3" r="0.8"><stop offset="0" stop-color="#bfe0ff"/><stop offset="1" stop-color="#2f78c0"/></radialGradient></defs><circle cx="9" cy="9" r="8.5" fill="url(#gg)"/><path d="M5 15 L13 3" stroke="#111" stroke-width="2.6"/></svg>
<div class="t" style="left:110px;top:474.2px;font-size:10.9px;color:#8c8c8c;">GROOM_Covert_Attributes</div>
<svg class="a" style="left:66px;top:493px;" width="15" height="15" viewBox="0 0 15 15"><rect x="0.5" y="0.5" width="13" height="13" fill="none" stroke="#c8c8c8"/><path d="M3 7h8M7 3v8" stroke="#ddd" stroke-width="1.6"/></svg>
<svg class="a" style="left:90px;top:491px;" width="18" height="18" viewBox="0 0 18 18"><defs><radialGradient id="gg" cx="0.35" cy="0.3" r="0.8"><stop offset="0" stop-color="#bfe0ff"/><stop offset="1" stop-color="#2f78c0"/></radialGradient></defs><circle cx="9" cy="9" r="8.5" fill="url(#gg)"/><path d="M5 15 L13 3" stroke="#111" stroke-width="2.6"/></svg>
<div class="t" style="left:110px;top:494.2px;font-size:10.9px;color:#8c8c8c;">GROOM_Covert_Fechada</div>
<svg class="a" style="left:66px;top:513px;" width="15" height="15" viewBox="0 0 15 15"><rect x="0.5" y="0.5" width="13" height="13" fill="none" stroke="#c8c8c8"/><path d="M3 7h8M7 3v8" stroke="#ddd" stroke-width="1.6"/></svg>
<svg class="a" style="left:90px;top:511px;" width="18" height="18" viewBox="0 0 18 18"><defs><radialGradient id="gg" cx="0.35" cy="0.3" r="0.8"><stop offset="0" stop-color="#bfe0ff"/><stop offset="1" stop-color="#2f78c0"/></radialGradient></defs><circle cx="9" cy="9" r="8.5" fill="url(#gg)"/><path d="M5 15 L13 3" stroke="#111" stroke-width="2.6"/></svg>
<div class="t" style="left:110px;top:514.2px;font-size:10.9px;color:#8c8c8c;">GROOM_Covert_Direction</div>
<svg class="a" style="left:66px;top:533px;" width="15" height="15" viewBox="0 0 15 15"><rect x="0.5" y="0.5" width="13" height="13" fill="none" stroke="#c8c8c8"/><path d="M3 7h8M7 3v8" stroke="#ddd" stroke-width="1.6"/></svg>
<svg class="a" style="left:90px;top:531px;" width="18" height="18" viewBox="0 0 18 18"><defs><radialGradient id="gg" cx="0.35" cy="0.3" r="0.8"><stop offset="0" stop-color="#bfe0ff"/><stop offset="1" stop-color="#2f78c0"/></radialGradient></defs><circle cx="9" cy="9" r="8.5" fill="url(#gg)"/><path d="M5 15 L13 3" stroke="#111" stroke-width="2.6"/></svg>
<div class="t" style="left:110px;top:534.2px;font-size:10.9px;color:#8c8c8c;">Groom_Cabeca</div>
<svg class="a" style="left:66px;top:553px;" width="15" height="15" viewBox="0 0 15 15"><rect x="0.5" y="0.5" width="13" height="13" fill="none" stroke="#c8c8c8"/><path d="M3 7h8M7 3v8" stroke="#ddd" stroke-width="1.6"/></svg>
<svg class="a" style="left:90px;top:551px;" width="18" height="18" viewBox="0 0 18 18"><defs><radialGradient id="gg" cx="0.35" cy="0.3" r="0.8"><stop offset="0" stop-color="#bfe0ff"/><stop offset="1" stop-color="#2f78c0"/></radialGradient></defs><circle cx="9" cy="9" r="8.5" fill="url(#gg)"/><path d="M5 15 L13 3" stroke="#111" stroke-width="2.6"/></svg>
<div class="t" style="left:110px;top:554.2px;font-size:10.9px;color:#8c8c8c;">Groom_LINEAR_cabeca</div>
<svg class="a" style="left:66px;top:573px;" width="15" height="15" viewBox="0 0 15 15"><rect x="0.5" y="0.5" width="13" height="13" fill="none" stroke="#c8c8c8"/><path d="M3 7h8M7 3v8" stroke="#ddd" stroke-width="1.6"/></svg>
<svg class="a" style="left:90px;top:571px;" width="18" height="18" viewBox="0 0 18 18"><defs><radialGradient id="gg" cx="0.35" cy="0.3" r="0.8"><stop offset="0" stop-color="#bfe0ff"/><stop offset="1" stop-color="#2f78c0"/></radialGradient></defs><circle cx="9" cy="9" r="8.5" fill="url(#gg)"/><path d="M5 15 L13 3" stroke="#111" stroke-width="2.6"/></svg>
<div class="t" style="left:110px;top:574.2px;font-size:10.9px;color:#8c8c8c;">Groom_LINEAR_pesco</div>
<svg class="a" style="left:66px;top:593px;" width="15" height="15" viewBox="0 0 15 15"><rect x="0.5" y="0.5" width="13" height="13" fill="none" stroke="#c8c8c8"/><path d="M3 7h8M7 3v8" stroke="#ddd" stroke-width="1.6"/></svg>
<svg class="a" style="left:90px;top:591px;" width="18" height="18" viewBox="0 0 18 18"><defs><radialGradient id="gg" cx="0.35" cy="0.3" r="0.8"><stop offset="0" stop-color="#bfe0ff"/><stop offset="1" stop-color="#2f78c0"/></radialGradient></defs><circle cx="9" cy="9" r="8.5" fill="url(#gg)"/><path d="M5 15 L13 3" stroke="#111" stroke-width="2.6"/></svg>
<div class="t" style="left:110px;top:594.2px;font-size:10.9px;color:#8c8c8c;">Groom_Pesco</div>
<svg class="a" style="left:66px;top:613px;" width="15" height="15" viewBox="0 0 15 15"><rect x="0.5" y="0.5" width="13" height="13" fill="none" stroke="#c8c8c8"/><path d="M3 7h8M7 3v8" stroke="#ddd" stroke-width="1.6"/></svg>
<svg class="a" style="left:90px;top:611px;" width="18" height="18" viewBox="0 0 18 18"><defs><radialGradient id="gg" cx="0.35" cy="0.3" r="0.8"><stop offset="0" stop-color="#bfe0ff"/><stop offset="1" stop-color="#2f78c0"/></radialGradient></defs><circle cx="9" cy="9" r="8.5" fill="url(#gg)"/><path d="M5 15 L13 3" stroke="#111" stroke-width="2.6"/></svg>
<div class="t" style="left:110px;top:614.2px;font-size:10.9px;color:#8c8c8c;">Groom_barbixas</div>
<svg class="a" style="left:66px;top:633px;" width="15" height="15" viewBox="0 0 15 15"><rect x="0.5" y="0.5" width="13" height="13" fill="none" stroke="#c8c8c8"/><path d="M3 7h8M7 3v8" stroke="#ddd" stroke-width="1.6"/></svg>
<svg class="a" style="left:90px;top:631px;" width="18" height="18" viewBox="0 0 18 18"><defs><radialGradient id="gg" cx="0.35" cy="0.3" r="0.8"><stop offset="0" stop-color="#bfe0ff"/><stop offset="1" stop-color="#2f78c0"/></radialGradient></defs><circle cx="9" cy="9" r="8.5" fill="url(#gg)"/><path d="M5 15 L13 3" stroke="#111" stroke-width="2.6"/></svg>
<div class="t" style="left:110px;top:634.2px;font-size:10.9px;color:#8c8c8c;">Groom_penugem</div>
<svg class="a" style="left:66px;top:653px;" width="15" height="15" viewBox="0 0 15 15"><rect x="0.5" y="0.5" width="13" height="13" fill="none" stroke="#c8c8c8"/><path d="M3 7h8M7 3v8" stroke="#ddd" stroke-width="1.6"/></svg>
<svg class="a" style="left:90px;top:651px;" width="18" height="18" viewBox="0 0 18 18"><defs><radialGradient id="gg" cx="0.35" cy="0.3" r="0.8"><stop offset="0" stop-color="#bfe0ff"/><stop offset="1" stop-color="#2f78c0"/></radialGradient></defs><circle cx="9" cy="9" r="8.5" fill="url(#gg)"/><path d="M5 15 L13 3" stroke="#111" stroke-width="2.6"/></svg>
<div class="t" style="left:110px;top:654.2px;font-size:10.9px;color:#8c8c8c;">GROOM_Body_Sim</div>
<svg class="a" style="left:66px;top:673px;" width="15" height="15" viewBox="0 0 15 15"><rect x="0.5" y="0.5" width="13" height="13" fill="none" stroke="#c8c8c8"/><path d="M3 7h8M7 3v8" stroke="#ddd" stroke-width="1.6"/></svg>
<svg class="a" style="left:90px;top:671px;" width="18" height="18" viewBox="0 0 18 18"><defs><radialGradient id="gg" cx="0.35" cy="0.3" r="0.8"><stop offset="0" stop-color="#bfe0ff"/><stop offset="1" stop-color="#2f78c0"/></radialGradient></defs><circle cx="9" cy="9" r="8.5" fill="url(#gg)"/><path d="M5 15 L13 3" stroke="#111" stroke-width="2.6"/></svg>
<div class="t" style="left:110px;top:674.2px;font-size:10.9px;color:#8c8c8c;">GROOM_Neck_SIM</div>
<svg class="a" style="left:66px;top:693px;" width="15" height="15" viewBox="0 0 15 15"><rect x="0.5" y="0.5" width="13" height="13" fill="none" stroke="#c8c8c8"/><path d="M3 7h8M7 3v8" stroke="#ddd" stroke-width="1.6"/></svg>
<svg class="a" style="left:90px;top:691px;" width="18" height="18" viewBox="0 0 18 18"><defs><radialGradient id="gg" cx="0.35" cy="0.3" r="0.8"><stop offset="0" stop-color="#bfe0ff"/><stop offset="1" stop-color="#2f78c0"/></radialGradient></defs><circle cx="9" cy="9" r="8.5" fill="url(#gg)"/><path d="M5 15 L13 3" stroke="#111" stroke-width="2.6"/></svg>
<div class="t" style="left:110px;top:694.2px;font-size:10.9px;color:#8c8c8c;">GROOM_Rabo_SIM</div>
<svg class="a" style="left:66px;top:713px;" width="15" height="15" viewBox="0 0 15 15"><rect x="0.5" y="0.5" width="13" height="13" fill="none" stroke="#c8c8c8"/><path d="M3 7h8M7 3v8" stroke="#ddd" stroke-width="1.6"/></svg>
<svg class="a" style="left:90px;top:712px;" width="18" height="16" viewBox="0 0 18 16"><path d="M5 2 h12 l-5 13 h-11z" fill="#e8e8e8"/><path d="M0 8 h9 M6 5 l4 3 -4 3" stroke="#e01818" stroke-width="2" fill="none"/></svg>
<div class="t" style="left:110px;top:714.2px;font-size:10.9px;color:#8c8c8c;">vray_lights</div>
<svg class="a" style="left:66px;top:733px;" width="15" height="15" viewBox="0 0 15 15"><rect x="0.5" y="0.5" width="13" height="13" fill="none" stroke="#c8c8c8"/><path d="M3 7h8M7 3v8" stroke="#ddd" stroke-width="1.6"/></svg>
<svg class="a" style="left:90px;top:735px;" width="18" height="10" viewBox="0 0 18 10"><rect x="1" y="1" width="10" height="8" fill="#a8a8a8"/><path d="M12 5 L17 1 V9Z" fill="#a8a8a8"/></svg>
<div class="t" style="left:110px;top:734.2px;font-size:10.9px;color:#e8e8e8;">cam_2</div>
<svg class="a" style="left:66px;top:753px;" width="15" height="15" viewBox="0 0 15 15"><rect x="0.5" y="0.5" width="13" height="13" fill="none" stroke="#c8c8c8"/><path d="M3 7h8M7 3v8" stroke="#ddd" stroke-width="1.6"/></svg>
<svg class="a" style="left:90px;top:752px;" width="18" height="16" viewBox="0 0 18 16"><path d="M5 2 h12 l-5 13 h-11z" fill="#e8e8e8"/><path d="M0 8 h9 M6 5 l4 3 -4 3" stroke="#e01818" stroke-width="2" fill="none"/></svg>
<div class="t" style="left:110px;top:754.2px;font-size:10.9px;color:#e8e8e8;">YETI_Feathers</div>
<svg class="a" style="left:66px;top:773px;" width="15" height="15" viewBox="0 0 15 15"><rect x="0.5" y="0.5" width="13" height="13" fill="none" stroke="#c8c8c8"/><path d="M3 7h8" stroke="#ddd" stroke-width="1.6"/></svg>
<svg class="a" style="left:90px;top:772px;" width="18" height="16" viewBox="0 0 18 16"><path d="M5 2 h12 l-5 13 h-11z" fill="#e8e8e8"/><path d="M0 8 h9 M6 5 l4 3 -4 3" stroke="#e01818" stroke-width="2" fill="none"/></svg>
<div class="t" style="left:110px;top:774.2px;font-size:10.9px;color:#e8e8e8;">FRANGO:CHARACTER</div>
<svg class="a" style="left:86px;top:793px;" width="15" height="15" viewBox="0 0 15 15"><rect x="0.5" y="0.5" width="13" height="13" fill="none" stroke="#c8c8c8"/><path d="M3 7h8M7 3v8" stroke="#ddd" stroke-width="1.6"/></svg>
<svg class="a" style="left:110px;top:792px;" width="18" height="16" viewBox="0 0 18 16"><path d="M5 2 h12 l-5 13 h-11z" fill="#e8e8e8"/><path d="M0 8 h9 M6 5 l4 3 -4 3" stroke="#e01818" stroke-width="2" fill="none"/></svg>
<div class="t" style="left:130px;top:794.2px;font-size:10.9px;color:#e8e8e8;">FRANGO:MESH</div>
<svg class="a" style="left:86px;top:813px;" width="15" height="15" viewBox="0 0 15 15"><rect x="0.5" y="0.5" width="13" height="13" fill="none" stroke="#c8c8c8"/><path d="M3 7h8M7 3v8" stroke="#ddd" stroke-width="1.6"/></svg>
<svg class="a" style="left:110px;top:812px;" width="18" height="16" viewBox="0 0 18 16"><path d="M5 2 h12 l-5 13 h-11z" fill="#e8e8e8"/><path d="M0 8 h9 M6 5 l4 3 -4 3" stroke="#e01818" stroke-width="2" fill="none"/></svg>
<div class="t" style="left:130px;top:814.2px;font-size:10.9px;color:#e8e8e8;">FRANGO:DATA</div>
<svg class="a" style="left:86px;top:833px;" width="15" height="15" viewBox="0 0 15 15"><rect x="0.5" y="0.5" width="13" height="13" fill="none" stroke="#c8c8c8"/><path d="M3 7h8M7 3v8" stroke="#ddd" stroke-width="1.6"/></svg>
<svg class="a" style="left:110px;top:832px;" width="18" height="16" viewBox="0 0 18 16"><path d="M5 2 h12 l-5 13 h-11z" fill="#e8e8e8"/><path d="M0 8 h9 M6 5 l4 3 -4 3" stroke="#e01818" stroke-width="2" fill="none"/></svg>
<div class="t" style="left:130px;top:834.2px;font-size:10.9px;color:#e8e8e8;">FRANGO:character_moveall3_ctrl_grp</div>
<svg class="a" style="left:86px;top:853px;" width="15" height="15" viewBox="0 0 15 15"><rect x="0.5" y="0.5" width="13" height="13" fill="none" stroke="#c8c8c8"/><path d="M3 7h8M7 3v8" stroke="#ddd" stroke-width="1.6"/></svg>
<svg class="a" style="left:110px;top:852px;" width="18" height="16" viewBox="0 0 18 16"><path d="M5 2 h12 l-5 13 h-11z" fill="#e8e8e8"/><path d="M0 8 h9 M6 5 l4 3 -4 3" stroke="#e01818" stroke-width="2" fill="none"/></svg>
<div class="t" style="left:130px;top:854.2px;font-size:10.9px;color:#8c8c8c;">FRANGO:TEXREF</div>
<svg class="a" style="left:90px;top:871px;" width="18" height="18" viewBox="0 0 18 18"><path d="M3 4 l8 -3 v12 l-8 3z" fill="#888"/><path d="M6 6 l8 -3 v12 l-8 3z" fill="#bbb"/></svg>
<div class="t" style="left:110px;top:874.2px;font-size:10.9px;color:#e8e8e8;">TurtleDefaultBakeLayer</div>
<div class="a" style="left:73px;top:787px;width:1px;height:73px;background:#aaa;"></div>
<div class="a" style="left:73px;top:800px;width:13px;height:1px;background:#aaa;"></div>
<div class="a" style="left:73px;top:820px;width:13px;height:1px;background:#aaa;"></div>
<div class="a" style="left:73px;top:840px;width:13px;height:1px;background:#aaa;"></div>
<div class="a" style="left:73px;top:860px;width:13px;height:1px;background:#aaa;"></div>
<div class="a" style="left:362px;top:142px;width:868px;height:772px;background:#444444;border:1px solid #6a6a6a;box-sizing:border-box;"></div>
<div class="t" style="left:371.5px;top:145.1px;font-size:12px;color:#dcdcdc;">View</div>
<div class="t" style="left:411px;top:145.1px;font-size:12px;color:#dcdcdc;">Shading</div>
<div class="t" style="left:469px;top:145.1px;font-size:12px;color:#dcdcdc;">Lighting</div>
<div class="t" style="left:527px;top:145.1px;font-size:12px;color:#dcdcdc;">Show</div>
<div class="t" style="left:571px;top:145.1px;font-size:12px;color:#dcdcdc;">Renderer</div>
<div class="t" style="left:633px;top:145.1px;font-size:12px;color:#dcdcdc;">Panels</div>
<svg class="a" style="left:362px;top:162px;" width="720" height="18" viewBox="0 0 720 18"><g transform="translate(4.30,9.00) scale(1.0)"><rect x="-1" y="-6" width="2" height="12" rx="1" fill="#8a8a8a"/></g><g transform="translate(136.00,9.00) scale(1.0)"><rect x="-1" y="-6" width="2" height="12" rx="1" fill="#8a8a8a"/></g><g transform="translate(286.70,9.00) scale(1.0)"><rect x="-1" y="-6" width="2" height="12" rx="1" fill="#8a8a8a"/></g><g transform="translate(437.00,9.00) scale(1.0)"><rect x="-1" y="-6" width="2" height="12" rx="1" fill="#8a8a8a"/></g><g transform="translate(528.00,9.00) scale(1.0)"><rect x="-1" y="-6" width="2" height="12" rx="1" fill="#8a8a8a"/></g><g transform="translate(559.00,9.00) scale(1.0)"><rect x="-1" y="-6" width="2" height="12" rx="1" fill="#8a8a8a"/></g><g transform="translate(630.00,9.00) scale(1.0)"><rect x="-1" y="-6" width="2" height="12" rx="1" fill="#8a8a8a"/></g><g transform="translate(101.00,9.00) scale(1.0)"><rect x="-9.5" y="-9" width="19" height="18" rx="2" fill="#5285a6"/></g><g transform="translate(323.00,9.00) scale(1.0)"><rect x="-9.5" y="-9" width="19" height="18" rx="2" fill="#5285a6"/></g><g transform="translate(454.00,9.00) scale(1.0)"><rect x="-9.5" y="-9" width="19" height="18" rx="2" fill="#5285a6"/></g><g transform="translate(494.00,9.00) scale(1.0)"><rect x="-9.5" y="-9" width="19" height="18" rx="2" fill="#5285a6"/></g><g transform="translate(616.00,9.00) scale(1.0)"><rect x="-9.5" y="-9" width="19" height="18" rx="2" fill="#5285a6"/></g><g transform="translate(514.00,9.00) scale(1.0)"><rect x="-9" y="-9" width="18" height="18" rx="2" fill="#2e2e2e"/></g><g transform="translate(20.50,9.00) scale(1.0)"><rect x="-7" y="-3.5" width="9" height="7" rx="1" fill="#d4d4d4"/><path d="M3 0 L7 -4 V4Z" fill="#d4d4d4"/></g><g transform="translate(41.00,9.00) scale(1.0)"><rect x="-3" y="-5" width="8" height="7" fill="#d4d4d4"/><path d="M5 -1.5 L9 -5 V2Z" fill="#d4d4d4"/><circle cx="-4" cy="3" r="3" fill="none" stroke="#4fc3d4" stroke-width="1.8" stroke-dasharray="1.5 1"/></g><g transform="translate(60.50,9.00) scale(1.0)"><path d="M-3 -6 H3 V6 L0 3 L-3 6Z" fill="#d4d4d4"/></g><g transform="translate(81.00,9.00) scale(1.0)"><path d="M-1 -6 L5 -9 V2 L-1 5Z" fill="#4fc3d4"/><path d="M-7 7 H6 L3 3 H-5Z" fill="none" stroke="#d4d4d4" stroke-width="1.2"/></g><g transform="translate(101.00,9.00) scale(1.0)"><path d="M-3 -7 V3 M-6 -4 L-3 -7 L0 -4" stroke="#d4d4d4" stroke-width="1.5" fill="none"/><circle cx="3" cy="3" r="3.5" fill="none" stroke="#d4d4d4" stroke-width="1.5"/></g><g transform="translate(120.00,9.00) scale(1.0)"><path d="M-5 5 L4 -5" stroke="#d4d4d4" stroke-width="2.2"/><circle cx="-5" cy="5" r="1.5" fill="#4fc3d4"/></g><g transform="translate(151.80,9.00) scale(1.0)"><path d="M-6 -6 H6 M-6 -2 H6 M-6 2 H6 M-6 6 H6 M-6 -6 V6 M-2 -6 V6 M2 -6 V6 M6 -6 V6" stroke="#d4d4d4" stroke-width="1.1"/></g><g transform="translate(172.00,9.00) scale(1.0)"><rect x="-8" y="-6" width="16" height="12" fill="none" stroke="#d4d4d4" stroke-width="1.3"/><path d="M-8 -3 H8 M-8 3 H8" stroke="#d4d4d4" stroke-width="1"/></g><g transform="translate(191.70,9.00) scale(1.0)"><rect x="-7" y="-6" width="14" height="12" fill="none" stroke="#d4d4d4" stroke-width="1.3"/><circle cx="0" cy="0" r="3" fill="#4fc3d4"/></g><g transform="translate(211.70,9.00) scale(1.0)"><rect x="-8" y="-7" width="16" height="14" fill="#555"/><circle cx="0" cy="0" r="4" fill="#333"/></g><g transform="translate(231.70,9.00) scale(1.0)"><rect x="-7" y="-6" width="14" height="12" fill="none" stroke="#d4d4d4" stroke-width="1.3"/><path d="M-7 0 H7" stroke="#4fc3d4" stroke-width="1.2" stroke-dasharray="2 1"/></g><g transform="translate(251.60,9.00) scale(1.0)"><rect x="-7" y="-6" width="14" height="12" fill="none" stroke="#d4d4d4" stroke-width="1.3"/><path d="M-4 3 L-1 -1 L1 3Z" fill="#4fc3d4"/><circle cx="3" cy="-1" r="2" fill="#4fc3d4"/></g><g transform="translate(271.60,9.00) scale(1.0)"><rect x="-7" y="-6" width="14" height="12" fill="none" stroke="#d4d4d4" stroke-width="1.3"/><path d="M-3 -3 H3 M0 -3 V4" stroke="#4fc3d4" stroke-width="2"/></g><g transform="translate(303.00,9.00) scale(1.0)"><path d="M0 -7 L6 -4 V3 L0 7 L-6 3 V-4Z M-6 -4 L0 -1 L6 -4 M0 -1 V7" fill="none" stroke="#4fc3d4" stroke-width="1.3"/></g><g transform="translate(323.00,9.00) scale(1.0)"><path d="M0 -7 L6 -4 V3 L0 7 L-6 3 V-4Z" fill="#c8c8c8" stroke="#555" stroke-width="0.8"/><path d="M-6 -4 L0 -1 L6 -4 M0 -1 V7" stroke="#666" fill="none"/></g><g transform="translate(342.40,9.00) scale(1.0)"><path d="M0 -7 A7 7 0 0 0 0 7Z" fill="#d4d4d4"/><path d="M1 -7 H6 V7 H1Z" fill="none" stroke="#d4d4d4" stroke-dasharray="2 2" stroke-width="2"/></g><g transform="translate(363.00,9.00) scale(1.0)"><path d="M0 -7 L6 -4 V3 L0 7 L-6 3 V-4Z" fill="none" stroke="#4fc3d4" stroke-width="1.3"/><rect x="-3" y="-2" width="6" height="5" fill="#4fc3d4"/></g><g transform="translate(382.00,9.00) scale(1.0)"><path d="M-6 -6 h4 v4 h-4z M2 -6 h4 v4 h-4z M-2 -2 h4 v4 h-4z M-6 2 h4 v4 h-4z M2 2 h4 v4 h-4z" fill="#d4d4d4"/></g><g transform="translate(403.00,9.00) scale(1.0)"><circle cx="0" cy="-1" r="3.5" fill="#d4d4d4"/><rect x="-1.5" y="3" width="3" height="3" fill="#d4d4d4"/><path d="M-7 -1 H-5 M5 -1 H7 M0 -8 V-6 M-5 -6 L-4 -5 M5 -6 L4 -5" stroke="#d4d4d4"/></g><g transform="translate(422.00,9.00) scale(1.0)"><circle cx="3" cy="0" r="5" fill="#4fc3d4"/><path d="M-7 5 L-2 0" stroke="#d4d4d4" stroke-width="1.5"/></g><g transform="translate(454.00,9.00) scale(1.0)"><circle cx="0" cy="-1" r="5.5" fill="#d8d8d8"/><path d="M-7 4 L0 7 L7 4 L0 1Z" fill="#4fc3d4"/></g><g transform="translate(474.00,9.00) scale(1.0)"><circle cx="-3" cy="0" r="5" fill="none" stroke="#d4d4d4" stroke-width="1.3"/><circle cx="2" cy="0" r="5.5" fill="#d4d4d4"/></g><g transform="translate(494.50,9.00) scale(1.0)"><circle cx="0" cy="0" r="6" fill="none" stroke="#d4d4d4" stroke-width="2.5" stroke-dasharray="3 1.5"/></g><g transform="translate(514.00,9.00) scale(1.0)"><rect x="-5" y="-5" width="10" height="10" fill="#485a5e"/></g><g transform="translate(544.00,9.00) scale(1.0)"><rect x="-6" y="-6" width="8" height="8" fill="none" stroke="#4fc3d4" stroke-dasharray="2 1.5"/><path d="M0 -1 L7 5 L4 5 L5 8 L4 8.5 L2.5 5.5 L0 7Z" fill="#d4d4d4"/></g><g transform="translate(575.60,9.00) scale(1.0)"><rect x="-6" y="-3" width="8" height="8" fill="#444" stroke="#d4d4d4" stroke-width="1.5"/><rect x="-2" y="-7" width="8" height="8" fill="#444" stroke="#d4d4d4" stroke-width="1.5"/></g><g transform="translate(595.70,9.00) scale(1.0)"><rect x="-7" y="-2" width="8" height="8" fill="#4fc3d4"/><rect x="-3" y="-7" width="9" height="9" fill="#444" stroke="#d4d4d4" stroke-width="1.5"/></g><g transform="translate(615.70,9.00) scale(1.0)"><rect x="-7" y="-7" width="14" height="14" fill="none" stroke="#d4d4d4" stroke-width="1.5"/><rect x="-4" y="-4" width="8" height="8" fill="#3a6a8a" stroke="#4fc3d4"/></g><g transform="translate(647.00,9.00) scale(1.0)"><circle cx="0" cy="0" r="7" fill="#d4d4d4"/><circle cx="0" cy="0" r="2.5" fill="#444"/><path d="M0 -7 L2 -2 M7 0 L2 1 M-5 5 L-2 1 M-5 -5 L-2 -1" stroke="#444" stroke-width="1.5"/></g><g transform="translate(710.00,9.00) scale(1.0)"><path d="M2 -8 V8 A8 8 0 0 1 2 -8Z" fill="#d4d4d4"/><rect x="2" y="-6" width="4" height="12" fill="#d4d4d4"/></g></svg>
<div class="a" style="left:1022px;top:162px;width:37px;height:17px;background:#2b2b2b;"></div>
<div class="t" style="left:1040px;transform:translateX(-50%);top:165.2px;font-size:11px;color:#ddd;">0.00</div>
<div class="a" style="left:1084px;top:162px;width:37px;height:17px;background:#2b2b2b;"></div>
<div class="t" style="left:1103px;transform:translateX(-50%);top:165.2px;font-size:11px;color:#ddd;">1.00</div>
<svg class="a" style="left:1124px;top:161px;" width="20" height="20" viewBox="0 0 20 20"><rect width="19" height="19" fill="#5285a6" rx="2"/><circle cx="9.5" cy="9.5" r="7" fill="#3fb6c6" stroke="#25657a"/><text x="9.5" y="12" font-size="6.5" text-anchor="middle" fill="#17495a" font-family="Liberation Sans">ON</text></svg>
<div class="a" style="left:1146px;top:162px;width:83px;height:18px;background:#5a5a5a;"></div>
<div class="t" style="left:1150px;top:164.6px;font-size:12px;color:#eee;">sRGB gamma</div>
<svg class="a" style="left:363px;top:182px;" width="866" height="729" viewBox="0 0 866 729"><defs>
<linearGradient id="bodyg" x1="0" y1="0" x2="1" y2="0.25"><stop offset="0" stop-color="#b0b0b0"/><stop offset="0.5" stop-color="#a4a4a4"/><stop offset="1" stop-color="#808080"/></linearGradient>
<linearGradient id="blueg" x1="0" y1="0" x2="0" y2="1"><stop offset="0" stop-color="#6a72a6"/><stop offset="0.45" stop-color="#8c94bb"/><stop offset="1" stop-color="#a0a5c4"/></linearGradient>
</defs><rect width="868" height="730" fill="#5e5e5e"/><defs><filter id="bl6" x="-20%" y="-20%" width="140%" height="140%"><feGaussianBlur stdDeviation="9"/></filter><filter id="bl3"><feGaussianBlur stdDeviation="4"/></filter></defs><clipPath id="bodyclip"><path d="M0.0,0.0 L48.0,0.0 C67.0,48.0 107.0,108.0 169.0,176.0 C237.0,190.0 337.0,190.0 467.0,172.0 L517.0,198.0 L537.0,318.0 L237.0,538.0 L225.0,560.0 C197.0,608.0 157.0,648.0 107.0,676.0 C77.0,690.0 62.0,694.0 55.0,698.0 C42.0,706.0 27.0,716.0 0.0,718.0 Z"/></clipPath><path d="M0.0,0.0 L48.0,0.0 C67.0,48.0 107.0,108.0 169.0,176.0 C237.0,190.0 337.0,190.0 467.0,172.0 L517.0,198.0 L537.0,318.0 L237.0,538.0 L225.0,560.0 C197.0,608.0 157.0,648.0 107.0,676.0 C77.0,690.0 62.0,694.0 55.0,698.0 C42.0,706.0 27.0,716.0 0.0,718.0 Z" fill="#a9a9a9"/><g clip-path="url(#bodyclip)"><path d="M225.0,560.0 C197.0,608.0 157.0,648.0 107.0,676.0 C77.0,690.0 62.0,694.0 55.0,698.0 C42.0,706.0 27.0,716.0 0.0,718.0" stroke="#6a6a6a" stroke-width="40" fill="none" filter="url(#bl6)"/><path d="M48.0,1.0 C67.0,48.0 107.0,108.0 169.0,176.0" stroke="#8a8a8a" stroke-width="26" fill="none" filter="url(#bl6)" opacity="0.8"/><ellipse cx="17" cy="118" rx="40" ry="70" fill="#8a8a8a" filter="url(#bl6)"/><ellipse cx="57" cy="298" rx="60" ry="110" fill="#b4b4b4" filter="url(#bl6)"/><ellipse cx="22" cy="648" rx="45" ry="55" fill="#9a9a9a" filter="url(#bl6)"/></g><path d="M48.0,1.0 C67.0,48.0 107.0,108.0 169.0,176.0" stroke="#161616" stroke-width="2.2" fill="none"/><path d="M225.0,560.0 C197.0,608.0 157.0,648.0 107.0,676.0 C77.0,690.0 62.0,694.0 55.0,698.0 C42.0,706.0 27.0,716.0 0.0,718.0" stroke="#0e0e0e" stroke-width="2.2" fill="none"/><path d="M227.0,553.0 C227.0,578.0 252.0,584.0 267.0,560.0Z" fill="#9a9a9a" stroke="#333" stroke-width="1"/><path d="M157.0,178.0 C237.0,192.0 337.0,192.0 467.0,174.0 L420.0,193.0 L417.0,218.0 L354.0,244.0 L281.0,258.0 L215.0,255.0 L157.0,250.0Z" fill="#bababa" filter="url(#bl3)"/><polygon points="497.0,298.0 627.0,248.0 637.0,288.0 537.0,418.0 497.0,498.0" fill="#b89e94"/><path d="M622.0,258.0 Q685.4,342.6 791.0,336.5 Q713.9,281.4 622.0,258.0Z" fill="#bfa69c" stroke="#7d6862" stroke-width="1.2"/><path d="M605.0,263.0 Q683.4,364.8 811.0,379.5 Q716.6,306.0 605.0,263.0Z" fill="#bfa69c" stroke="#7d6862" stroke-width="1.2"/><path d="M588.0,268.0 Q676.2,383.2 818.0,414.0 Q712.4,326.2 588.0,268.0Z" fill="#bfa69c" stroke="#7d6862" stroke-width="1.2"/><path d="M571.0,273.0 Q658.0,404.4 806.6,457.0 Q699.6,351.2 571.0,273.0Z" fill="#bfa69c" stroke="#7d6862" stroke-width="1.2"/><path d="M554.0,278.0 Q632.3,422.1 779.7,494.0 Q678.9,373.4 554.0,278.0Z" fill="#bfa69c" stroke="#7d6862" stroke-width="1.2"/><path d="M537.0,283.0 Q598.1,437.3 736.7,528.5 Q650.4,394.7 537.0,283.0Z" fill="#bfa69c" stroke="#7d6862" stroke-width="1.2"/><path d="M520.0,288.0 Q556.8,444.3 679.0,548.6 Q614.4,409.2 520.0,288.0Z" fill="#bfa69c" stroke="#7d6862" stroke-width="1.2"/><path d="M503.0,293.0 Q510.5,442.5 610.5,554.0 Q572.9,416.8 503.0,293.0Z" fill="#bfa69c" stroke="#7d6862" stroke-width="1.2"/><path d="M486.0,298.0 Q471.3,433.7 553.0,543.0 Q536.4,415.9 486.0,298.0Z" fill="#bfa69c" stroke="#7d6862" stroke-width="1.2"/><path d="M469.0,303.0 Q429.8,406.8 490.0,500.0 Q496.9,399.6 469.0,303.0Z" fill="#bfa69c" stroke="#7d6862" stroke-width="1.2"/><polygon points="91.6,256.0 111.7,359.0 134.6,416.7 151.8,451.0 186.0,525.7 202.0,508.0 217.8,560.0 242.0,533.0 266.5,554.0 287.0,530.0 309.5,554.0 330.0,530.0 352.5,548.6 372.0,518.0 392.6,528.5 412.0,498.0 432.8,502.7 457.0,478.0 490.0,500.0 517.0,378.0 537.0,288.0 337.0,258.0 137.0,238.0" fill="#c0a99f"/><path d="M112,288 Q118,323.5 137,359" stroke="#9a847a" stroke-width="1.5" fill="none" opacity="0.8"/><path d="M143,291 Q149,354.0 166,417" stroke="#9a847a" stroke-width="1.5" fill="none" opacity="0.8"/><path d="M174,294 Q180,372.5 195,451" stroke="#9a847a" stroke-width="1.5" fill="none" opacity="0.8"/><path d="M205,297 Q211,411.5 224,526" stroke="#9a847a" stroke-width="1.5" fill="none" opacity="0.8"/><path d="M236,300 Q242,430.0 253,560" stroke="#9a847a" stroke-width="1.5" fill="none" opacity="0.8"/><path d="M267,303 Q273,428.5 282,554" stroke="#9a847a" stroke-width="1.5" fill="none" opacity="0.8"/><path d="M298,306 Q304,430.0 311,554" stroke="#9a847a" stroke-width="1.5" fill="none" opacity="0.8"/><path d="M329,309 Q335,429.0 340,549" stroke="#9a847a" stroke-width="1.5" fill="none" opacity="0.8"/><path d="M360,312 Q366,420.5 369,529" stroke="#9a847a" stroke-width="1.5" fill="none" opacity="0.8"/><path d="M391,315 Q397,409.0 398,503" stroke="#9a847a" stroke-width="1.5" fill="none" opacity="0.8"/><path d="M422,318 Q428,409.0 427,500" stroke="#9a847a" stroke-width="1.5" fill="none" opacity="0.8"/><path d="M453,321 Q459,394.5 456,468" stroke="#9a847a" stroke-width="1.5" fill="none" opacity="0.8"/><path d="M484,324 Q490,381.0 485,438" stroke="#9a847a" stroke-width="1.5" fill="none" opacity="0.8"/><polygon points="106.0,182.0 127.0,186.0 161.0,216.0 215.6,253.0 281.0,256.6 354.0,242.0 417.0,216.0 420.0,192.7 460.0,172.6 515.0,176.0 580.5,205.4 624.0,238.0 606.0,253.0 569.0,275.0 533.0,297.0 452.7,311.0 427.0,337.0 397.0,353.0 369.0,369.6 342.0,383.0 314.0,395.0 287.0,403.0 267.0,406.0 241.0,395.0 212.0,378.0 186.0,362.6 157.0,323.0 124.5,278.0 99.0,264.0 91.6,218.0" fill="url(#blueg)"/><path d="M107.0,185.6 Q113.0,226.3 117.0,267.1" stroke="#2c3878" stroke-width="2" fill="none" opacity="0.3"/><path d="M110.0,185.6 q2 18 3 40" stroke="#1e2a6e" stroke-width="3" fill="none" opacity="0.38"/><path d="M127.0,198.0 Q133.0,243.9 137.0,289.7" stroke="#2c3878" stroke-width="2" fill="none" opacity="0.3"/><path d="M130.0,198.0 q2 18 3 40" stroke="#1e2a6e" stroke-width="3" fill="none" opacity="0.38"/><path d="M147.0,210.3 Q153.0,261.4 157.0,312.4" stroke="#2c3878" stroke-width="2" fill="none" opacity="0.3"/><path d="M150.0,210.3 q2 18 3 40" stroke="#1e2a6e" stroke-width="3" fill="none" opacity="0.38"/><path d="M167.0,223.1 Q173.0,279.1 177.0,335.1" stroke="#2c3878" stroke-width="2" fill="none" opacity="0.3"/><path d="M170.0,223.1 q2 18 3 40" stroke="#1e2a6e" stroke-width="3" fill="none" opacity="0.38"/><path d="M187.0,236.6 Q193.0,296.9 197.0,357.1" stroke="#2c3878" stroke-width="2" fill="none" opacity="0.3"/><path d="M190.0,236.6 q2 18 3 40" stroke="#1e2a6e" stroke-width="3" fill="none" opacity="0.38"/><path d="M207.0,250.2 Q213.0,309.0 217.0,367.9" stroke="#2c3878" stroke-width="2" fill="none" opacity="0.3"/><path d="M210.0,250.2 q2 18 3 40" stroke="#1e2a6e" stroke-width="3" fill="none" opacity="0.38"/><path d="M227.0,256.6 Q233.0,317.6 237.0,378.6" stroke="#2c3878" stroke-width="2" fill="none" opacity="0.3"/><path d="M230.0,256.6 q2 18 3 40" stroke="#1e2a6e" stroke-width="3" fill="none" opacity="0.38"/><path d="M247.0,257.7 Q253.0,323.5 257.0,389.3" stroke="#2c3878" stroke-width="2" fill="none" opacity="0.3"/><path d="M250.0,257.7 q2 18 3 40" stroke="#1e2a6e" stroke-width="3" fill="none" opacity="0.38"/><path d="M267.0,258.8 Q273.0,329.4 277.0,400.0" stroke="#2c3878" stroke-width="2" fill="none" opacity="0.3"/><path d="M270.0,258.8 q2 18 3 40" stroke="#1e2a6e" stroke-width="3" fill="none" opacity="0.38"/><path d="M287.0,258.4 Q293.0,325.6 297.0,392.9" stroke="#2c3878" stroke-width="2" fill="none" opacity="0.3"/><path d="M290.0,258.4 q2 18 3 40" stroke="#1e2a6e" stroke-width="3" fill="none" opacity="0.38"/><path d="M307.0,254.4 Q313.0,320.1 317.0,385.7" stroke="#2c3878" stroke-width="2" fill="none" opacity="0.3"/><path d="M310.0,254.4 q2 18 3 40" stroke="#1e2a6e" stroke-width="3" fill="none" opacity="0.38"/><path d="M327.0,250.4 Q333.0,314.5 337.0,378.6" stroke="#2c3878" stroke-width="2" fill="none" opacity="0.3"/><path d="M330.0,250.4 q2 18 3 40" stroke="#1e2a6e" stroke-width="3" fill="none" opacity="0.38"/><path d="M347.0,246.4 Q353.0,308.9 357.0,371.5" stroke="#2c3878" stroke-width="2" fill="none" opacity="0.3"/><path d="M350.0,246.4 q2 18 3 40" stroke="#1e2a6e" stroke-width="3" fill="none" opacity="0.38"/><path d="M367.0,239.6 Q373.0,302.0 377.0,364.3" stroke="#2c3878" stroke-width="2" fill="none" opacity="0.3"/><path d="M370.0,239.6 q2 18 3 40" stroke="#1e2a6e" stroke-width="3" fill="none" opacity="0.38"/><path d="M387.0,231.4 Q393.0,291.2 397.0,351.0" stroke="#2c3878" stroke-width="2" fill="none" opacity="0.3"/><path d="M390.0,231.4 q2 18 3 40" stroke="#1e2a6e" stroke-width="3" fill="none" opacity="0.38"/><path d="M407.0,223.1 Q413.0,280.1 417.0,337.0" stroke="#2c3878" stroke-width="2" fill="none" opacity="0.3"/><path d="M410.0,223.1 q2 18 3 40" stroke="#1e2a6e" stroke-width="3" fill="none" opacity="0.38"/><path d="M427.0,192.2 Q433.0,257.6 437.0,323.0" stroke="#2c3878" stroke-width="2" fill="none" opacity="0.3"/><path d="M430.0,192.2 q2 18 3 40" stroke="#1e2a6e" stroke-width="3" fill="none" opacity="0.38"/><path d="M447.0,182.1 Q453.0,245.6 457.0,309.0" stroke="#2c3878" stroke-width="2" fill="none" opacity="0.3"/><path d="M450.0,182.1 q2 18 3 40" stroke="#1e2a6e" stroke-width="3" fill="none" opacity="0.38"/><path d="M467.0,176.0 Q473.0,239.3 477.0,302.5" stroke="#2c3878" stroke-width="2" fill="none" opacity="0.3"/><path d="M470.0,176.0 q2 18 3 40" stroke="#1e2a6e" stroke-width="3" fill="none" opacity="0.38"/><path d="M487.0,177.3 Q493.0,238.1 497.0,299.0" stroke="#2c3878" stroke-width="2" fill="none" opacity="0.3"/><path d="M490.0,177.3 q2 18 3 40" stroke="#1e2a6e" stroke-width="3" fill="none" opacity="0.38"/><path d="M507.0,178.5 Q513.0,237.0 517.0,295.5" stroke="#2c3878" stroke-width="2" fill="none" opacity="0.3"/><path d="M510.0,178.5 q2 18 3 40" stroke="#1e2a6e" stroke-width="3" fill="none" opacity="0.38"/><path d="M527.0,184.4 Q533.0,238.2 537.0,292.0" stroke="#2c3878" stroke-width="2" fill="none" opacity="0.3"/><path d="M530.0,184.4 q2 18 3 40" stroke="#1e2a6e" stroke-width="3" fill="none" opacity="0.38"/><path d="M547.0,193.4 Q553.0,238.0 557.0,282.6" stroke="#2c3878" stroke-width="2" fill="none" opacity="0.3"/><path d="M550.0,193.4 q2 18 3 40" stroke="#1e2a6e" stroke-width="3" fill="none" opacity="0.38"/><path d="M567.0,202.3 Q573.0,236.4 577.0,270.5" stroke="#2c3878" stroke-width="2" fill="none" opacity="0.3"/><path d="M570.0,202.3 q2 18 3 40" stroke="#1e2a6e" stroke-width="3" fill="none" opacity="0.38"/><path d="M587.0,213.3 Q593.0,235.9 597.0,258.5" stroke="#2c3878" stroke-width="2" fill="none" opacity="0.3"/><path d="M590.0,213.3 q2 18 3 40" stroke="#1e2a6e" stroke-width="3" fill="none" opacity="0.38"/><path d="M203.8,515.0 L217.8,560.0 L229.8,510.0" stroke="#9a8278" stroke-width="2" fill="none" opacity="0.8"/><path d="M252.5,509.0 L266.5,554.0 L278.5,504.0" stroke="#9a8278" stroke-width="2" fill="none" opacity="0.8"/><path d="M295.5,509.0 L309.5,554.0 L321.5,504.0" stroke="#9a8278" stroke-width="2" fill="none" opacity="0.8"/><path d="M338.5,503.6 L352.5,548.6 L364.5,498.6" stroke="#9a8278" stroke-width="2" fill="none" opacity="0.8"/><path d="M378.6,483.5 L392.6,528.5 L404.6,478.5" stroke="#9a8278" stroke-width="2" fill="none" opacity="0.8"/><path d="M418.8,457.7 L432.8,502.7 L444.8,452.7" stroke="#9a8278" stroke-width="2" fill="none" opacity="0.8"/><path d="M476.0,455.0 L490.0,500.0 L502.0,450.0" stroke="#9a8278" stroke-width="2" fill="none" opacity="0.8"/><path d="M20 700 v-18" stroke="#3050ff" stroke-width="1.2"/><path d="M20 700 h-14" stroke="#e02020" stroke-width="1.2"/><path d="M20 700 l0 -10" stroke="#20d020" stroke-width="1.2"/><text x="17" y="680" font-size="8" fill="#3050ff" font-family="Liberation Sans">z</text><text x="3" y="704" font-size="8" fill="#e02020" font-family="Liberation Sans">x</text></svg>
<div class="t" style="left:786px;transform:translateX(-50%);top:893.9px;font-size:11px;color:#f0f0f0;font-weight:bold;">2D Pan/Zoom : persp</div>
<div class="a" style="left:1232px;top:141px;width:680px;height:773px;background:#444444;"></div>
<svg class="a" style="left:1240px;top:149px;" width="272" height="5" viewBox="0 0 272 5"><rect x="0" y="0" width="1" height="1" fill="#666"/><rect x="0" y="3" width="1" height="1" fill="#666"/><rect x="3" y="0" width="1" height="1" fill="#666"/><rect x="3" y="3" width="1" height="1" fill="#666"/><rect x="6" y="0" width="1" height="1" fill="#666"/><rect x="6" y="3" width="1" height="1" fill="#666"/><rect x="9" y="0" width="1" height="1" fill="#666"/><rect x="9" y="3" width="1" height="1" fill="#666"/><rect x="12" y="0" width="1" height="1" fill="#666"/><rect x="12" y="3" width="1" height="1" fill="#666"/><rect x="15" y="0" width="1" height="1" fill="#666"/><rect x="15" y="3" width="1" height="1" fill="#666"/><rect x="18" y="0" width="1" height="1" fill="#666"/><rect x="18" y="3" width="1" height="1" fill="#666"/><rect x="21" y="0" width="1" height="1" fill="#666"/><rect x="21" y="3" width="1" height="1" fill="#666"/><rect x="24" y="0" width="1" height="1" fill="#666"/><rect x="24" y="3" width="1" height="1" fill="#666"/><rect x="27" y="0" width="1" height="1" fill="#666"/><rect x="27" y="3" width="1" height="1" fill="#666"/><rect x="30" y="0" width="1" height="1" fill="#666"/><rect x="30" y="3" width="1" height="1" fill="#666"/><rect x="33" y="0" width="1" height="1" fill="#666"/><rect x="33" y="3" width="1" height="1" fill="#666"/><rect x="36" y="0" width="1" height="1" fill="#666"/><rect x="36" y="3" width="1" height="1" fill="#666"/><rect x="39" y="0" width="1" height="1" fill="#666"/><rect x="39" y="3" width="1" height="1" fill="#666"/><rect x="42" y="0" width="1" height="1" fill="#666"/><rect x="42" y="3" width="1" height="1" fill="#666"/><rect x="45" y="0" width="1" height="1" fill="#666"/><rect x="45" y="3" width="1" height="1" fill="#666"/><rect x="48" y="0" width="1" height="1" fill="#666"/><rect x="48" y="3" width="1" height="1" fill="#666"/><rect x="51" y="0" width="1" height="1" fill="#666"/><rect x="51" y="3" width="1" height="1" fill="#666"/><rect x="54" y="0" width="1" height="1" fill="#666"/><rect x="54" y="3" width="1" height="1" fill="#666"/><rect x="57" y="0" width="1" height="1" fill="#666"/><rect x="57" y="3" width="1" height="1" fill="#666"/><rect x="60" y="0" width="1" height="1" fill="#666"/><rect x="60" y="3" width="1" height="1" fill="#666"/><rect x="63" y="0" width="1" height="1" fill="#666"/><rect x="63" y="3" width="1" height="1" fill="#666"/><rect x="66" y="0" width="1" height="1" fill="#666"/><rect x="66" y="3" width="1" height="1" fill="#666"/><rect x="69" y="0" width="1" height="1" fill="#666"/><rect x="69" y="3" width="1" height="1" fill="#666"/><rect x="72" y="0" width="1" height="1" fill="#666"/><rect x="72" y="3" width="1" height="1" fill="#666"/><rect x="75" y="0" width="1" height="1" fill="#666"/><rect x="75" y="3" width="1" height="1" fill="#666"/><rect x="78" y="0" width="1" height="1" fill="#666"/><rect x="78" y="3" width="1" height="1" fill="#666"/><rect x="81" y="0" width="1" height="1" fill="#666"/><rect x="81" y="3" width="1" height="1" fill="#666"/><rect x="84" y="0" width="1" height="1" fill="#666"/><rect x="84" y="3" width="1" height="1" fill="#666"/><rect x="87" y="0" width="1" height="1" fill="#666"/><rect x="87" y="3" width="1" height="1" fill="#666"/><rect x="90" y="0" width="1" height="1" fill="#666"/><rect x="90" y="3" width="1" height="1" fill="#666"/><rect x="93" y="0" width="1" height="1" fill="#666"/><rect x="93" y="3" width="1" height="1" fill="#666"/><rect x="96" y="0" width="1" height="1" fill="#666"/><rect x="96" y="3" width="1" height="1" fill="#666"/><rect x="99" y="0" width="1" height="1" fill="#666"/><rect x="99" y="3" width="1" height="1" fill="#666"/><rect x="102" y="0" width="1" height="1" fill="#666"/><rect x="102" y="3" width="1" height="1" fill="#666"/><rect x="105" y="0" width="1" height="1" fill="#666"/><rect x="105" y="3" width="1" height="1" fill="#666"/><rect x="108" y="0" width="1" height="1" fill="#666"/><rect x="108" y="3" width="1" height="1" fill="#666"/><rect x="111" y="0" width="1" height="1" fill="#666"/><rect x="111" y="3" width="1" height="1" fill="#666"/><rect x="114" y="0" width="1" height="1" fill="#666"/><rect x="114" y="3" width="1" height="1" fill="#666"/><rect x="117" y="0" width="1" height="1" fill="#666"/><rect x="117" y="3" width="1" height="1" fill="#666"/><rect x="120" y="0" width="1" height="1" fill="#666"/><rect x="120" y="3" width="1" height="1" fill="#666"/><rect x="123" y="0" width="1" height="1" fill="#666"/><rect x="123" y="3" width="1" height="1" fill="#666"/><rect x="126" y="0" width="1" height="1" fill="#666"/><rect x="126" y="3" width="1" height="1" fill="#666"/><rect x="129" y="0" width="1" height="1" fill="#666"/><rect x="129" y="3" width="1" height="1" fill="#666"/><rect x="132" y="0" width="1" height="1" fill="#666"/><rect x="132" y="3" width="1" height="1" fill="#666"/><rect x="135" y="0" width="1" height="1" fill="#666"/><rect x="135" y="3" width="1" height="1" fill="#666"/><rect x="138" y="0" width="1" height="1" fill="#666"/><rect x="138" y="3" width="1" height="1" fill="#666"/><rect x="141" y="0" width="1" height="1" fill="#666"/><rect x="141" y="3" width="1" height="1" fill="#666"/><rect x="144" y="0" width="1" height="1" fill="#666"/><rect x="144" y="3" width="1" height="1" fill="#666"/><rect x="147" y="0" width="1" height="1" fill="#666"/><rect x="147" y="3" width="1" height="1" fill="#666"/><rect x="150" y="0" width="1" height="1" fill="#666"/><rect x="150" y="3" width="1" height="1" fill="#666"/><rect x="153" y="0" width="1" height="1" fill="#666"/><rect x="153" y="3" width="1" height="1" fill="#666"/><rect x="156" y="0" width="1" height="1" fill="#666"/><rect x="156" y="3" width="1" height="1" fill="#666"/><rect x="159" y="0" width="1" height="1" fill="#666"/><rect x="159" y="3" width="1" height="1" fill="#666"/><rect x="162" y="0" width="1" height="1" fill="#666"/><rect x="162" y="3" width="1" height="1" fill="#666"/><rect x="165" y="0" width="1" height="1" fill="#666"/><rect x="165" y="3" width="1" height="1" fill="#666"/><rect x="168" y="0" width="1" height="1" fill="#666"/><rect x="168" y="3" width="1" height="1" fill="#666"/><rect x="171" y="0" width="1" height="1" fill="#666"/><rect x="171" y="3" width="1" height="1" fill="#666"/><rect x="174" y="0" width="1" height="1" fill="#666"/><rect x="174" y="3" width="1" height="1" fill="#666"/><rect x="177" y="0" width="1" height="1" fill="#666"/><rect x="177" y="3" width="1" height="1" fill="#666"/><rect x="180" y="0" width="1" height="1" fill="#666"/><rect x="180" y="3" width="1" height="1" fill="#666"/><rect x="183" y="0" width="1" height="1" fill="#666"/><rect x="183" y="3" width="1" height="1" fill="#666"/><rect x="186" y="0" width="1" height="1" fill="#666"/><rect x="186" y="3" width="1" height="1" fill="#666"/><rect x="189" y="0" width="1" height="1" fill="#666"/><rect x="189" y="3" width="1" height="1" fill="#666"/><rect x="192" y="0" width="1" height="1" fill="#666"/><rect x="192" y="3" width="1" height="1" fill="#666"/><rect x="195" y="0" width="1" height="1" fill="#666"/><rect x="195" y="3" width="1" height="1" fill="#666"/><rect x="198" y="0" width="1" height="1" fill="#666"/><rect x="198" y="3" width="1" height="1" fill="#666"/><rect x="201" y="0" width="1" height="1" fill="#666"/><rect x="201" y="3" width="1" height="1" fill="#666"/><rect x="204" y="0" width="1" height="1" fill="#666"/><rect x="204" y="3" width="1" height="1" fill="#666"/><rect x="207" y="0" width="1" height="1" fill="#666"/><rect x="207" y="3" width="1" height="1" fill="#666"/><rect x="210" y="0" width="1" height="1" fill="#666"/><rect x="210" y="3" width="1" height="1" fill="#666"/><rect x="213" y="0" width="1" height="1" fill="#666"/><rect x="213" y="3" width="1" height="1" fill="#666"/><rect x="216" y="0" width="1" height="1" fill="#666"/><rect x="216" y="3" width="1" height="1" fill="#666"/><rect x="219" y="0" width="1" height="1" fill="#666"/><rect x="219" y="3" width="1" height="1" fill="#666"/><rect x="222" y="0" width="1" height="1" fill="#666"/><rect x="222" y="3" width="1" height="1" fill="#666"/><rect x="225" y="0" width="1" height="1" fill="#666"/><rect x="225" y="3" width="1" height="1" fill="#666"/><rect x="228" y="0" width="1" height="1" fill="#666"/><rect x="228" y="3" width="1" height="1" fill="#666"/><rect x="231" y="0" width="1" height="1" fill="#666"/><rect x="231" y="3" width="1" height="1" fill="#666"/><rect x="234" y="0" width="1" height="1" fill="#666"/><rect x="234" y="3" width="1" height="1" fill="#666"/><rect x="237" y="0" width="1" height="1" fill="#666"/><rect x="237" y="3" width="1" height="1" fill="#666"/><rect x="240" y="0" width="1" height="1" fill="#666"/><rect x="240" y="3" width="1" height="1" fill="#666"/><rect x="243" y="0" width="1" height="1" fill="#666"/><rect x="243" y="3" width="1" height="1" fill="#666"/><rect x="246" y="0" width="1" height="1" fill="#666"/><rect x="246" y="3" width="1" height="1" fill="#666"/><rect x="249" y="0" width="1" height="1" fill="#666"/><rect x="249" y="3" width="1" height="1" fill="#666"/><rect x="252" y="0" width="1" height="1" fill="#666"/><rect x="252" y="3" width="1" height="1" fill="#666"/><rect x="255" y="0" width="1" height="1" fill="#666"/><rect x="255" y="3" width="1" height="1" fill="#666"/><rect x="258" y="0" width="1" height="1" fill="#666"/><rect x="258" y="3" width="1" height="1" fill="#666"/><rect x="261" y="0" width="1" height="1" fill="#666"/><rect x="261" y="3" width="1" height="1" fill="#666"/><rect x="264" y="0" width="1" height="1" fill="#666"/><rect x="264" y="3" width="1" height="1" fill="#666"/><rect x="267" y="0" width="1" height="1" fill="#666"/><rect x="267" y="3" width="1" height="1" fill="#666"/><rect x="270" y="0" width="1" height="1" fill="#666"/><rect x="270" y="3" width="1" height="1" fill="#666"/></svg>
<svg class="a" style="left:1596px;top:149px;" width="270" height="5" viewBox="0 0 270 5"><rect x="0" y="0" width="1" height="1" fill="#666"/><rect x="0" y="3" width="1" height="1" fill="#666"/><rect x="3" y="0" width="1" height="1" fill="#666"/><rect x="3" y="3" width="1" height="1" fill="#666"/><rect x="6" y="0" width="1" height="1" fill="#666"/><rect x="6" y="3" width="1" height="1" fill="#666"/><rect x="9" y="0" width="1" height="1" fill="#666"/><rect x="9" y="3" width="1" height="1" fill="#666"/><rect x="12" y="0" width="1" height="1" fill="#666"/><rect x="12" y="3" width="1" height="1" fill="#666"/><rect x="15" y="0" width="1" height="1" fill="#666"/><rect x="15" y="3" width="1" height="1" fill="#666"/><rect x="18" y="0" width="1" height="1" fill="#666"/><rect x="18" y="3" width="1" height="1" fill="#666"/><rect x="21" y="0" width="1" height="1" fill="#666"/><rect x="21" y="3" width="1" height="1" fill="#666"/><rect x="24" y="0" width="1" height="1" fill="#666"/><rect x="24" y="3" width="1" height="1" fill="#666"/><rect x="27" y="0" width="1" height="1" fill="#666"/><rect x="27" y="3" width="1" height="1" fill="#666"/><rect x="30" y="0" width="1" height="1" fill="#666"/><rect x="30" y="3" width="1" height="1" fill="#666"/><rect x="33" y="0" width="1" height="1" fill="#666"/><rect x="33" y="3" width="1" height="1" fill="#666"/><rect x="36" y="0" width="1" height="1" fill="#666"/><rect x="36" y="3" width="1" height="1" fill="#666"/><rect x="39" y="0" width="1" height="1" fill="#666"/><rect x="39" y="3" width="1" height="1" fill="#666"/><rect x="42" y="0" width="1" height="1" fill="#666"/><rect x="42" y="3" width="1" height="1" fill="#666"/><rect x="45" y="0" width="1" height="1" fill="#666"/><rect x="45" y="3" width="1" height="1" fill="#666"/><rect x="48" y="0" width="1" height="1" fill="#666"/><rect x="48" y="3" width="1" height="1" fill="#666"/><rect x="51" y="0" width="1" height="1" fill="#666"/><rect x="51" y="3" width="1" height="1" fill="#666"/><rect x="54" y="0" width="1" height="1" fill="#666"/><rect x="54" y="3" width="1" height="1" fill="#666"/><rect x="57" y="0" width="1" height="1" fill="#666"/><rect x="57" y="3" width="1" height="1" fill="#666"/><rect x="60" y="0" width="1" height="1" fill="#666"/><rect x="60" y="3" width="1" height="1" fill="#666"/><rect x="63" y="0" width="1" height="1" fill="#666"/><rect x="63" y="3" width="1" height="1" fill="#666"/><rect x="66" y="0" width="1" height="1" fill="#666"/><rect x="66" y="3" width="1" height="1" fill="#666"/><rect x="69" y="0" width="1" height="1" fill="#666"/><rect x="69" y="3" width="1" height="1" fill="#666"/><rect x="72" y="0" width="1" height="1" fill="#666"/><rect x="72" y="3" width="1" height="1" fill="#666"/><rect x="75" y="0" width="1" height="1" fill="#666"/><rect x="75" y="3" width="1" height="1" fill="#666"/><rect x="78" y="0" width="1" height="1" fill="#666"/><rect x="78" y="3" width="1" height="1" fill="#666"/><rect x="81" y="0" width="1" height="1" fill="#666"/><rect x="81" y="3" width="1" height="1" fill="#666"/><rect x="84" y="0" width="1" height="1" fill="#666"/><rect x="84" y="3" width="1" height="1" fill="#666"/><rect x="87" y="0" width="1" height="1" fill="#666"/><rect x="87" y="3" width="1" height="1" fill="#666"/><rect x="90" y="0" width="1" height="1" fill="#666"/><rect x="90" y="3" width="1" height="1" fill="#666"/><rect x="93" y="0" width="1" height="1" fill="#666"/><rect x="93" y="3" width="1" height="1" fill="#666"/><rect x="96" y="0" width="1" height="1" fill="#666"/><rect x="96" y="3" width="1" height="1" fill="#666"/><rect x="99" y="0" width="1" height="1" fill="#666"/><rect x="99" y="3" width="1" height="1" fill="#666"/><rect x="102" y="0" width="1" height="1" fill="#666"/><rect x="102" y="3" width="1" height="1" fill="#666"/><rect x="105" y="0" width="1" height="1" fill="#666"/><rect x="105" y="3" width="1" height="1" fill="#666"/><rect x="108" y="0" width="1" height="1" fill="#666"/><rect x="108" y="3" width="1" height="1" fill="#666"/><rect x="111" y="0" width="1" height="1" fill="#666"/><rect x="111" y="3" width="1" height="1" fill="#666"/><rect x="114" y="0" width="1" height="1" fill="#666"/><rect x="114" y="3" width="1" height="1" fill="#666"/><rect x="117" y="0" width="1" height="1" fill="#666"/><rect x="117" y="3" width="1" height="1" fill="#666"/><rect x="120" y="0" width="1" height="1" fill="#666"/><rect x="120" y="3" width="1" height="1" fill="#666"/><rect x="123" y="0" width="1" height="1" fill="#666"/><rect x="123" y="3" width="1" height="1" fill="#666"/><rect x="126" y="0" width="1" height="1" fill="#666"/><rect x="126" y="3" width="1" height="1" fill="#666"/><rect x="129" y="0" width="1" height="1" fill="#666"/><rect x="129" y="3" width="1" height="1" fill="#666"/><rect x="132" y="0" width="1" height="1" fill="#666"/><rect x="132" y="3" width="1" height="1" fill="#666"/><rect x="135" y="0" width="1" height="1" fill="#666"/><rect x="135" y="3" width="1" height="1" fill="#666"/><rect x="138" y="0" width="1" height="1" fill="#666"/><rect x="138" y="3" width="1" height="1" fill="#666"/><rect x="141" y="0" width="1" height="1" fill="#666"/><rect x="141" y="3" width="1" height="1" fill="#666"/><rect x="144" y="0" width="1" height="1" fill="#666"/><rect x="144" y="3" width="1" height="1" fill="#666"/><rect x="147" y="0" width="1" height="1" fill="#666"/><rect x="147" y="3" width="1" height="1" fill="#666"/><rect x="150" y="0" width="1" height="1" fill="#666"/><rect x="150" y="3" width="1" height="1" fill="#666"/><rect x="153" y="0" width="1" height="1" fill="#666"/><rect x="153" y="3" width="1" height="1" fill="#666"/><rect x="156" y="0" width="1" height="1" fill="#666"/><rect x="156" y="3" width="1" height="1" fill="#666"/><rect x="159" y="0" width="1" height="1" fill="#666"/><rect x="159" y="3" width="1" height="1" fill="#666"/><rect x="162" y="0" width="1" height="1" fill="#666"/><rect x="162" y="3" width="1" height="1" fill="#666"/><rect x="165" y="0" width="1" height="1" fill="#666"/><rect x="165" y="3" width="1" height="1" fill="#666"/><rect x="168" y="0" width="1" height="1" fill="#666"/><rect x="168" y="3" width="1" height="1" fill="#666"/><rect x="171" y="0" width="1" height="1" fill="#666"/><rect x="171" y="3" width="1" height="1" fill="#666"/><rect x="174" y="0" width="1" height="1" fill="#666"/><rect x="174" y="3" width="1" height="1" fill="#666"/><rect x="177" y="0" width="1" height="1" fill="#666"/><rect x="177" y="3" width="1" height="1" fill="#666"/><rect x="180" y="0" width="1" height="1" fill="#666"/><rect x="180" y="3" width="1" height="1" fill="#666"/><rect x="183" y="0" width="1" height="1" fill="#666"/><rect x="183" y="3" width="1" height="1" fill="#666"/><rect x="186" y="0" width="1" height="1" fill="#666"/><rect x="186" y="3" width="1" height="1" fill="#666"/><rect x="189" y="0" width="1" height="1" fill="#666"/><rect x="189" y="3" width="1" height="1" fill="#666"/><rect x="192" y="0" width="1" height="1" fill="#666"/><rect x="192" y="3" width="1" height="1" fill="#666"/><rect x="195" y="0" width="1" height="1" fill="#666"/><rect x="195" y="3" width="1" height="1" fill="#666"/><rect x="198" y="0" width="1" height="1" fill="#666"/><rect x="198" y="3" width="1" height="1" fill="#666"/><rect x="201" y="0" width="1" height="1" fill="#666"/><rect x="201" y="3" width="1" height="1" fill="#666"/><rect x="204" y="0" width="1" height="1" fill="#666"/><rect x="204" y="3" width="1" height="1" fill="#666"/><rect x="207" y="0" width="1" height="1" fill="#666"/><rect x="207" y="3" width="1" height="1" fill="#666"/><rect x="210" y="0" width="1" height="1" fill="#666"/><rect x="210" y="3" width="1" height="1" fill="#666"/><rect x="213" y="0" width="1" height="1" fill="#666"/><rect x="213" y="3" width="1" height="1" fill="#666"/><rect x="216" y="0" width="1" height="1" fill="#666"/><rect x="216" y="3" width="1" height="1" fill="#666"/><rect x="219" y="0" width="1" height="1" fill="#666"/><rect x="219" y="3" width="1" height="1" fill="#666"/><rect x="222" y="0" width="1" height="1" fill="#666"/><rect x="222" y="3" width="1" height="1" fill="#666"/><rect x="225" y="0" width="1" height="1" fill="#666"/><rect x="225" y="3" width="1" height="1" fill="#666"/><rect x="228" y="0" width="1" height="1" fill="#666"/><rect x="228" y="3" width="1" height="1" fill="#666"/><rect x="231" y="0" width="1" height="1" fill="#666"/><rect x="231" y="3" width="1" height="1" fill="#666"/><rect x="234" y="0" width="1" height="1" fill="#666"/><rect x="234" y="3" width="1" height="1" fill="#666"/><rect x="237" y="0" width="1" height="1" fill="#666"/><rect x="237" y="3" width="1" height="1" fill="#666"/><rect x="240" y="0" width="1" height="1" fill="#666"/><rect x="240" y="3" width="1" height="1" fill="#666"/><rect x="243" y="0" width="1" height="1" fill="#666"/><rect x="243" y="3" width="1" height="1" fill="#666"/><rect x="246" y="0" width="1" height="1" fill="#666"/><rect x="246" y="3" width="1" height="1" fill="#666"/><rect x="249" y="0" width="1" height="1" fill="#666"/><rect x="249" y="3" width="1" height="1" fill="#666"/><rect x="252" y="0" width="1" height="1" fill="#666"/><rect x="252" y="3" width="1" height="1" fill="#666"/><rect x="255" y="0" width="1" height="1" fill="#666"/><rect x="255" y="3" width="1" height="1" fill="#666"/><rect x="258" y="0" width="1" height="1" fill="#666"/><rect x="258" y="3" width="1" height="1" fill="#666"/><rect x="261" y="0" width="1" height="1" fill="#666"/><rect x="261" y="3" width="1" height="1" fill="#666"/><rect x="264" y="0" width="1" height="1" fill="#666"/><rect x="264" y="3" width="1" height="1" fill="#666"/><rect x="267" y="0" width="1" height="1" fill="#666"/><rect x="267" y="3" width="1" height="1" fill="#666"/></svg>
<div class="t" style="left:1553px;transform:translateX(-50%);top:146.2px;font-size:10px;color:#d0d0d0;">Attribute Editor</div>
<svg class="a" style="left:1866px;top:143px;" width="32" height="16" viewBox="0 0 32 16"><rect x="0.5" y="0.5" width="13" height="13" fill="#3a3a3a" stroke="#777"/><rect x="3" y="6" width="6" height="5" fill="none" stroke="#ddd"/><rect x="5" y="3" width="6" height="5" fill="#3a3a3a" stroke="#ddd"/><rect x="16.5" y="0.5" width="13" height="13" fill="#3a3a3a" stroke="#777"/><path d="M19.5 3.5 l7 7 M26.5 3.5 l-7 7" stroke="#eee" stroke-width="1.6"/></svg>
<div class="t" style="left:1246px;top:164.9px;font-size:11.5px;color:#dcdcdc;letter-spacing:0.2px;">List</div>
<div class="t" style="left:1278px;top:164.9px;font-size:11.5px;color:#dcdcdc;letter-spacing:0.2px;">Selected</div>
<div class="t" style="left:1336px;top:164.9px;font-size:11.5px;color:#dcdcdc;letter-spacing:0.2px;">Focus</div>
<div class="t" style="left:1381px;top:164.9px;font-size:11.5px;color:#dcdcdc;letter-spacing:0.2px;">Attributes</div>
<div class="t" style="left:1447px;top:164.9px;font-size:11.5px;color:#dcdcdc;letter-spacing:0.2px;">Show</div>
<div class="t" style="left:1491px;top:164.9px;font-size:11.5px;color:#dcdcdc;letter-spacing:-0.3px;">TURTLE</div>
<div class="t" style="left:1542px;top:164.9px;font-size:11.5px;color:#dcdcdc;letter-spacing:0.2px;">Help</div>
<div class="a" style="left:1243px;top:196px;width:620px;height:21px;background:#363636;"></div>
<div class="a" style="left:1392px;top:196px;width:179px;height:21px;background:#5a5a5a;"></div>
<div class="a" style="left:1391px;top:198px;width:1px;height:19px;background:#2c2c2c;"></div>
<div class="a" style="left:1571px;top:198px;width:1px;height:19px;background:#2c2c2c;"></div>
<div class="a" style="left:1786px;top:198px;width:1px;height:19px;background:#2c2c2c;"></div>
<div class="t" style="left:1255px;top:201.7px;font-size:11px;color:#d0d0d0;">FRANGO:l_lg_tert_1_ycrv</div>
<div class="t" style="left:1403px;top:201.7px;font-size:11px;color:#f2f2f2;">FRANGO:l_lg_tert_1_ycrvShape</div>
<div class="t" style="left:1583px;top:201.7px;font-size:11px;color:#d0d0d0;">FRANGO:l_lg_tert_1_ycrvShape23Orig</div>
<div class="t" style="left:1797px;top:201.7px;font-size:11px;color:#d0d0d0;">FRANGO:ski</div>
<svg class="a" style="left:1864px;top:199px;" width="28" height="16" viewBox="0 0 28 16"><path d="M8 3 L3 8 L8 13Z" fill="#ddd"/><path d="M18 3 L23 8 L18 13Z" fill="#eee"/></svg>
<div class="a" style="left:1243px;top:217px;width:620px;height:2px;background:#2e2e2e;"></div>
<div class="t" style="right:524px;top:252.9px;font-size:11.5px;color:#d0d0d0;">nurbsCurve:</div>
<div class="a" style="left:1394px;top:248px;width:154px;height:22px;background:#2b2b2b;border-radius:2px;"></div>
<div class="t" style="left:1397px;top:252.9px;font-size:11.5px;color:#e8e8e8;">RANGO:l_lg_tert_1_ycrvShape</div>
<svg class="a" style="left:1560px;top:240px;" width="20" height="32" viewBox="0 0 20 32"><rect x="2" y="4" width="14" height="10" fill="none" stroke="#ccc"/><path d="M1 9 l5 -3 v6z" fill="#ccc"/><rect x="2" y="21" width="14" height="10" fill="none" stroke="#ccc"/><path d="M19 26 l-5 -3 v6z" fill="#ccc"/></svg>
<div class="a" style="left:1589px;top:227px;width:70px;height:20px;background:#5a5a5a;"></div>
<div class="t" style="left:1624px;transform:translateX(-50%);top:230.9px;font-size:11.5px;color:#eee;">Focus</div>
<div class="a" style="left:1589px;top:249px;width:70px;height:20px;background:#4c4c4c;"></div>
<div class="t" style="left:1624px;transform:translateX(-50%);top:252.9px;font-size:11.5px;color:#8a8a8a;">Presets</div>
<div class="a" style="left:1589px;top:271px;width:35px;height:20px;background:#5a5a5a;"></div>
<div class="t" style="left:1606.5px;transform:translateX(-50%);top:274.9px;font-size:11.5px;color:#eee;">Show</div>
<div class="a" style="left:1626px;top:271px;width:34px;height:20px;background:#5a5a5a;"></div>
<div class="t" style="left:1643px;transform:translateX(-50%);top:274.9px;font-size:11.5px;color:#eee;">Hide</div>
<div class="a" style="left:1248px;top:304px;width:628px;height:458px;background:#444444;"></div>
<div class="t" style="right:519px;top:304.9px;font-size:11.5px;color:#d0d0d0;">Degree</div>
<div class="a" style="left:1401px;top:305px;width:68px;height:14px;background:#4a5a6c;"></div>
<div class="t" style="left:1405px;top:306.2px;font-size:11px;color:#d8d8d8;">3</div>
<div class="a" style="left:1252px;top:323px;width:620px;height:20px;background:#5d5d5d;border-radius:2px;"></div>
<svg class="a" style="left:1262px;top:327px;" width="8" height="12" viewBox="0 0 8 12"><path d="M0 0 L6 5 L0 10Z" fill="#eee"/></svg>
<div class="t" style="left:1281px;top:326.9px;font-size:11.5px;color:#e6e6e6;font-weight:bold;">Components</div>
<div class="a" style="left:1248px;top:346px;width:628px;height:20px;background:#5d5d5d;border-radius:2px;"></div>
<svg class="a" style="left:1258px;top:350px;" width="8" height="12" viewBox="0 0 8 12"><path d="M0 0 L6 5 L0 10Z" fill="#eee"/></svg>
<div class="t" style="left:1281px;top:349.9px;font-size:11.5px;color:#e6e6e6;font-weight:bold;">Component Display</div>
<div class="a" style="left:1248px;top:368px;width:628px;height:20px;background:#5d5d5d;border-radius:2px;"></div>
<svg class="a" style="left:1258px;top:372px;" width="8" height="12" viewBox="0 0 8 12"><path d="M0 0 L6 5 L0 10Z" fill="#eee"/></svg>
<div class="t" style="left:1281px;top:371.9px;font-size:11.5px;color:#e6e6e6;font-weight:bold;">Object Display</div>
<div class="a" style="left:1248px;top:390px;width:628px;height:20px;background:#5d5d5d;border-radius:2px;"></div>
<svg class="a" style="left:1258px;top:394px;" width="8" height="12" viewBox="0 0 8 12"><path d="M0 0 L6 5 L0 10Z" fill="#eee"/></svg>
<div class="t" style="left:1281px;top:393.9px;font-size:11.5px;color:#e6e6e6;font-weight:bold;">Arnold</div>
<div class="a" style="left:1248px;top:412px;width:628px;height:20px;background:#5d5d5d;border-radius:2px;"></div>
<svg class="a" style="left:1258px;top:416px;" width="8" height="12" viewBox="0 0 8 12"><path d="M0 0 L6 5 L0 10Z" fill="#eee"/></svg>
<div class="t" style="left:1281px;top:415.9px;font-size:11.5px;color:#e6e6e6;font-weight:bold;">Node Behavior</div>
<div class="a" style="left:1248px;top:434px;width:628px;height:20px;background:#5d5d5d;border-radius:2px;"></div>
<svg class="a" style="left:1258px;top:438px;" width="8" height="12" viewBox="0 0 8 12"><path d="M0 0 L6 5 L0 10Z" fill="#eee"/></svg>
<div class="t" style="left:1281px;top:437.9px;font-size:11.5px;color:#e6e6e6;font-weight:bold;">UUID</div>
<div class="a" style="left:1248px;top:456px;width:628px;height:20px;background:#5d5d5d;border-radius:2px;"></div>
<svg class="a" style="left:1258px;top:460px;" width="8" height="12" viewBox="0 0 8 12"><path d="M0 0 L6 5 L0 10Z" fill="#eee"/></svg>
<div class="t" style="left:1281px;top:459.9px;font-size:11.5px;color:#e6e6e6;font-weight:bold;">Extra Attributes</div>
<div class="a" style="left:1248px;top:478px;width:628px;height:20px;background:#5d5d5d;border-radius:2px;"></div>
<svg class="a" style="left:1256px;top:484px;" width="12" height="8" viewBox="0 0 12 8"><path d="M0 0 L10 0 L5 6Z" fill="#eee"/></svg>
<div class="t" style="left:1281px;top:481.9px;font-size:11.5px;color:#e6e6e6;font-weight:bold;">Yeti Attributes</div>
<div class="a" style="left:1248px;top:605px;width:354px;height:71px;background:#7a1212;"></div>
<div class="t" style="right:523px;top:504.9px;font-size:11.5px;color:#d0d0d0;">Weight</div>
<div class="a" style="left:1398px;top:502px;width:67px;height:18px;background:#2b2b2b;border-radius:2px;"></div>
<div class="t" style="left:1403px;top:505.4px;font-size:11.5px;color:#dedede;">1.000</div>
<div class="a" style="left:1469px;top:509px;width:100px;height:4px;background:#2e2e2e;border-radius:2px;"></div>
<div class="a" style="left:1561px;top:505px;width:9px;height:13px;background:#bdbdbd;border-radius:2px;"></div>
<div class="t" style="right:523px;top:526.9px;font-size:11.5px;color:#d0d0d0;">Length Weight</div>
<div class="a" style="left:1398px;top:524px;width:67px;height:18px;background:#2b2b2b;border-radius:2px;"></div>
<div class="t" style="left:1403px;top:527.4px;font-size:11.5px;color:#dedede;">1.000</div>
<div class="a" style="left:1469px;top:531px;width:100px;height:4px;background:#2e2e2e;border-radius:2px;"></div>
<div class="a" style="left:1561px;top:527px;width:9px;height:13px;background:#bdbdbd;border-radius:2px;"></div>
<div class="t" style="right:523px;top:548.6px;font-size:11.5px;color:#d0d0d0;">Inner Radius</div>
<div class="a" style="left:1398px;top:546px;width:67px;height:18px;background:#2b2b2b;border-radius:2px;"></div>
<div class="t" style="left:1403px;top:549.1px;font-size:11.5px;color:#dedede;">0.000</div>
<div class="a" style="left:1469px;top:553px;width:100px;height:4px;background:#2e2e2e;border-radius:2px;"></div>
<div class="a" style="left:1470px;top:549px;width:9px;height:13px;background:#bdbdbd;border-radius:2px;"></div>
<div class="t" style="right:523px;top:570.9px;font-size:11.5px;color:#d0d0d0;">Outer Radius</div>
<div class="a" style="left:1398px;top:568px;width:67px;height:18px;background:#2b2b2b;border-radius:2px;"></div>
<div class="t" style="left:1403px;top:571.4px;font-size:11.5px;color:#dedede;">2.000</div>
<div class="a" style="left:1469px;top:575px;width:100px;height:4px;background:#2e2e2e;border-radius:2px;"></div>
<div class="a" style="left:1488px;top:571px;width:9px;height:13px;background:#bdbdbd;border-radius:2px;"></div>
<div class="t" style="right:523px;top:592.9px;font-size:11.5px;color:#d0d0d0;">Density</div>
<div class="a" style="left:1398px;top:590px;width:67px;height:18px;background:#2b2b2b;border-radius:2px;"></div>
<div class="t" style="left:1403px;top:593.4px;font-size:11.5px;color:#dedede;">1.000</div>
<div class="a" style="left:1469px;top:597px;width:100px;height:4px;background:#2e2e2e;border-radius:2px;"></div>
<div class="a" style="left:1561px;top:593px;width:9px;height:13px;background:#bdbdbd;border-radius:2px;"></div>
<div class="t" style="right:523px;top:614.9px;font-size:11.5px;color:#ff8080;">Base Attraction</div>
<div class="a" style="left:1398px;top:612px;width:67px;height:18px;background:#fddc6c;border-radius:2px;"></div>
<div class="t" style="left:1403px;top:615.4px;font-size:11.5px;color:#111;">0.229</div>
<div class="a" style="left:1469px;top:619px;width:100px;height:4px;background:#4a0a0a;border-radius:2px;"></div>
<div class="a" style="left:1490px;top:615px;width:9px;height:13px;background:#f28e8e;border-radius:2px;"></div>
<div class="t" style="right:523px;top:636.9px;font-size:11.5px;color:#ff8080;">Tip Attraction</div>
<div class="a" style="left:1398px;top:634px;width:67px;height:18px;background:#fddc6c;border-radius:2px;"></div>
<div class="t" style="left:1403px;top:637.4px;font-size:11.5px;color:#111;">0.974</div>
<div class="a" style="left:1469px;top:641px;width:100px;height:4px;background:#4a0a0a;border-radius:2px;"></div>
<div class="a" style="left:1558px;top:637px;width:9px;height:13px;background:#f28e8e;border-radius:2px;"></div>
<div class="t" style="right:523px;top:658.9px;font-size:11.5px;color:#ff8080;">Attraction Bias</div>
<div class="a" style="left:1398px;top:656px;width:67px;height:18px;background:#fddc6c;border-radius:2px;"></div>
<div class="t" style="left:1403px;top:659.4px;font-size:11.5px;color:#111;">-0.006</div>
<div class="a" style="left:1469px;top:663px;width:100px;height:4px;background:#4a0a0a;border-radius:2px;"></div>
<div class="a" style="left:1515px;top:659px;width:9px;height:13px;background:#f28e8e;border-radius:2px;"></div>
<div class="t" style="right:523px;top:680.9px;font-size:11.5px;color:#d0d0d0;">Random Attraction</div>
<div class="a" style="left:1398px;top:678px;width:67px;height:18px;background:#2b2b2b;border-radius:2px;"></div>
<div class="t" style="left:1403px;top:681.4px;font-size:11.5px;color:#dedede;">0.000</div>
<div class="a" style="left:1469px;top:685px;width:100px;height:4px;background:#2e2e2e;border-radius:2px;"></div>
<div class="a" style="left:1470px;top:681px;width:9px;height:13px;background:#bdbdbd;border-radius:2px;"></div>
<div class="t" style="right:523px;top:702.9px;font-size:11.5px;color:#d0d0d0;">Twist</div>
<div class="a" style="left:1398px;top:700px;width:67px;height:18px;background:#2b2b2b;border-radius:2px;"></div>
<div class="t" style="left:1403px;top:703.4px;font-size:11.5px;color:#dedede;">0.000</div>
<div class="a" style="left:1469px;top:707px;width:100px;height:4px;background:#2e2e2e;border-radius:2px;"></div>
<div class="a" style="left:1470px;top:703px;width:9px;height:13px;background:#bdbdbd;border-radius:2px;"></div>
<div class="t" style="right:523px;top:724.9px;font-size:11.5px;color:#d0d0d0;">Surface Direction Limit</div>
<div class="a" style="left:1398px;top:722px;width:67px;height:18px;background:#2b2b2b;border-radius:2px;"></div>
<div class="t" style="left:1403px;top:725.4px;font-size:11.5px;color:#dedede;">0.000</div>
<div class="a" style="left:1469px;top:729px;width:100px;height:4px;background:#2e2e2e;border-radius:2px;"></div>
<div class="a" style="left:1470px;top:725px;width:9px;height:13px;background:#bdbdbd;border-radius:2px;"></div>
<div class="t" style="right:523px;top:746.9px;font-size:11.5px;color:#d0d0d0;">face Direction Limit Falloff</div>
<div class="a" style="left:1398px;top:744px;width:67px;height:18px;background:#2b2b2b;border-radius:2px;"></div>
<div class="t" style="left:1403px;top:747.4px;font-size:11.5px;color:#dedede;">1.000</div>
<div class="a" style="left:1469px;top:751px;width:100px;height:4px;background:#2e2e2e;border-radius:2px;"></div>
<div class="a" style="left:1500px;top:747px;width:9px;height:13px;background:#bdbdbd;border-radius:2px;"></div>
<div class="a" style="left:1879px;top:304px;width:9px;height:458px;background:#3a3a3a;"></div>
<svg class="a" style="left:1879px;top:306px;" width="9" height="7" viewBox="0 0 9 7"><path d="M0 6 L4.5 0 L9 6Z" fill="#ccc"/></svg>
<div class="a" style="left:1880px;top:394px;width:7px;height:352px;background:#5a5a5a;border-radius:3px;"></div>
<svg class="a" style="left:1879px;top:755px;" width="9" height="7" viewBox="0 0 9 7"><path d="M0 0 L4.5 6 L9 0Z" fill="#ccc"/></svg>
<div class="a" style="left:1242px;top:771px;width:652px;height:1px;background:#2c2c2c;"></div>
<div class="t" style="left:1251px;top:777.9px;font-size:11.5px;color:#d8d8d8;font-weight:bold;">Notes:  FRANGO:l_lg_tert_1_ycrvShape</div>
<div class="a" style="left:1242px;top:790px;width:652px;height:90px;background:#2b2b2b;"></div>
<div class="a" style="left:1239px;top:885px;width:214px;height:26px;background:#5a5a5a;"></div>
<div class="t" style="left:1346px;transform:translateX(-50%);top:891.9px;font-size:11.5px;color:#e8e8e8;">Select</div>
<div class="a" style="left:1456px;top:885px;width:223px;height:26px;background:#5a5a5a;"></div>
<div class="t" style="left:1567px;transform:translateX(-50%);top:891.9px;font-size:11.5px;color:#e8e8e8;">Load Attributes</div>
<div class="a" style="left:1681px;top:885px;width:215px;height:26px;background:#5a5a5a;"></div>
<div class="t" style="left:1788px;transform:translateX(-50%);top:891.9px;font-size:11.5px;color:#e8e8e8;">Copy Tab</div>
<div class="a" style="left:1899px;top:141px;width:13px;height:773px;background:#3c3c3c;"></div>
<div class="a" style="left:1899px;top:141px;width:13px;height:98px;background:#5a5a5a;"></div>
<div class="t" style="left:1899px;top:148px;font-size:11px;color:#e6e6e6;writing-mode:vertical-rl;">Attribute Editor</div>
<div class="t" style="left:1899px;top:258px;font-size:11px;color:#c8c8c8;writing-mode:vertical-rl;">Channel Box / Layer Editor</div>
<div class="a" style="left:0px;top:914px;width:1912px;height:126px;background:#444444;"></div>
<div class="a" style="left:0px;top:914px;width:1912px;height:2px;background:#363636;"></div>
<svg class="a" style="left:8px;top:920px;" width="6" height="26" viewBox="0 0 6 26"><rect x="0" y="0" width="1" height="1" fill="#888"/><rect x="0" y="3" width="1" height="1" fill="#888"/><rect x="0" y="6" width="1" height="1" fill="#888"/><rect x="0" y="9" width="1" height="1" fill="#888"/><rect x="0" y="12" width="1" height="1" fill="#888"/><rect x="0" y="15" width="1" height="1" fill="#888"/><rect x="0" y="18" width="1" height="1" fill="#888"/><rect x="0" y="21" width="1" height="1" fill="#888"/><rect x="0" y="24" width="1" height="1" fill="#888"/><rect x="3" y="0" width="1" height="1" fill="#888"/><rect x="3" y="3" width="1" height="1" fill="#888"/><rect x="3" y="6" width="1" height="1" fill="#888"/><rect x="3" y="9" width="1" height="1" fill="#888"/><rect x="3" y="12" width="1" height="1" fill="#888"/><rect x="3" y="15" width="1" height="1" fill="#888"/><rect x="3" y="18" width="1" height="1" fill="#888"/><rect x="3" y="21" width="1" height="1" fill="#888"/><rect x="3" y="24" width="1" height="1" fill="#888"/></svg>
<div class="a" style="left:17px;top:918px;width:1628px;height:28px;background:#2b2b2b;"></div>
<svg class="a" style="left:17px;top:918px;" width="1628" height="28" viewBox="0 0 1628 28"><rect x="3.4" y="14" width="1.5" height="14" fill="#8c8c8c"/><text x="3.4" y="10" font-size="11" fill="#8c8c8c" font-family="Liberation Sans">0</text><rect x="48.2" y="14" width="1.5" height="14" fill="#8c8c8c"/><text x="48.2" y="10" font-size="11" fill="#8c8c8c" font-family="Liberation Sans">10</text><rect x="93.0" y="14" width="1.5" height="14" fill="#8c8c8c"/><text x="93.0" y="10" font-size="11" fill="#8c8c8c" font-family="Liberation Sans">20</text><rect x="137.8" y="14" width="1.5" height="14" fill="#8c8c8c"/><text x="137.8" y="10" font-size="11" fill="#8c8c8c" font-family="Liberation Sans">30</text><rect x="182.6" y="14" width="1.5" height="14" fill="#8c8c8c"/><text x="182.6" y="10" font-size="11" fill="#8c8c8c" font-family="Liberation Sans">40</text><rect x="227.4" y="14" width="1.5" height="14" fill="#8c8c8c"/><text x="227.4" y="10" font-size="11" fill="#8c8c8c" font-family="Liberation Sans">50</text><rect x="272.2" y="14" width="1.5" height="14" fill="#8c8c8c"/><text x="272.2" y="10" font-size="11" fill="#8c8c8c" font-family="Liberation Sans">60</text><rect x="317.0" y="14" width="1.5" height="14" fill="#8c8c8c"/><text x="317.0" y="10" font-size="11" fill="#8c8c8c" font-family="Liberation Sans">70</text><rect x="361.8" y="14" width="1.5" height="14" fill="#8c8c8c"/><text x="361.8" y="10" font-size="11" fill="#8c8c8c" font-family="Liberation Sans">80</text><rect x="406.6" y="14" width="1.5" height="14" fill="#8c8c8c"/><text x="406.6" y="10" font-size="11" fill="#8c8c8c" font-family="Liberation Sans">90</text><rect x="451.4" y="14" width="1.5" height="14" fill="#8c8c8c"/><text x="451.4" y="10" font-size="11" fill="#8c8c8c" font-family="Liberation Sans">100</text><rect x="496.2" y="14" width="1.5" height="14" fill="#8c8c8c"/><text x="496.2" y="10" font-size="11" fill="#8c8c8c" font-family="Liberation Sans">110</text><rect x="541.0" y="14" width="1.5" height="14" fill="#8c8c8c"/><text x="541.0" y="10" font-size="11" fill="#8c8c8c" font-family="Liberation Sans">120</text><rect x="585.8" y="14" width="1.5" height="14" fill="#8c8c8c"/><text x="585.8" y="10" font-size="11" fill="#8c8c8c" font-family="Liberation Sans">130</text><rect x="630.6" y="14" width="1.5" height="14" fill="#8c8c8c"/><text x="630.6" y="10" font-size="11" fill="#8c8c8c" font-family="Liberation Sans">140</text><rect x="675.4" y="14" width="1.5" height="14" fill="#8c8c8c"/><text x="675.4" y="10" font-size="11" fill="#8c8c8c" font-family="Liberation Sans">150</text><rect x="720.2" y="14" width="1.5" height="14" fill="#8c8c8c"/><text x="720.2" y="10" font-size="11" fill="#8c8c8c" font-family="Liberation Sans">160</text><rect x="765.0" y="14" width="1.5" height="14" fill="#8c8c8c"/><text x="765.0" y="10" font-size="11" fill="#8c8c8c" font-family="Liberation Sans">170</text><rect x="809.8" y="14" width="1.5" height="14" fill="#8c8c8c"/><text x="809.8" y="10" font-size="11" fill="#8c8c8c" font-family="Liberation Sans">180</text><rect x="854.6" y="14" width="1.5" height="14" fill="#8c8c8c"/><text x="854.6" y="10" font-size="11" fill="#8c8c8c" font-family="Liberation Sans">190</text><rect x="899.5" y="14" width="1.5" height="14" fill="#8c8c8c"/><text x="899.5" y="10" font-size="11" fill="#8c8c8c" font-family="Liberation Sans">200</text><rect x="944.3" y="14" width="1.5" height="14" fill="#8c8c8c"/><text x="944.3" y="10" font-size="11" fill="#8c8c8c" font-family="Liberation Sans">210</text><rect x="989.1" y="14" width="1.5" height="14" fill="#8c8c8c"/><text x="989.1" y="10" font-size="11" fill="#8c8c8c" font-family="Liberation Sans">220</text><rect x="1033.9" y="14" width="1.5" height="14" fill="#8c8c8c"/><text x="1033.9" y="10" font-size="11" fill="#8c8c8c" font-family="Liberation Sans">230</text><rect x="1078.7" y="14" width="1.5" height="14" fill="#8c8c8c"/><text x="1078.7" y="10" font-size="11" fill="#8c8c8c" font-family="Liberation Sans">240</text><rect x="1123.5" y="14" width="1.5" height="14" fill="#8c8c8c"/><text x="1123.5" y="10" font-size="11" fill="#8c8c8c" font-family="Liberation Sans">250</text><rect x="1168.3" y="14" width="1.5" height="14" fill="#8c8c8c"/><text x="1168.3" y="10" font-size="11" fill="#8c8c8c" font-family="Liberation Sans">260</text><rect x="1213.1" y="14" width="1.5" height="14" fill="#8c8c8c"/><text x="1213.1" y="10" font-size="11" fill="#8c8c8c" font-family="Liberation Sans">270</text><rect x="1257.9" y="14" width="1.5" height="14" fill="#8c8c8c"/><text x="1257.9" y="10" font-size="11" fill="#8c8c8c" font-family="Liberation Sans">280</text><rect x="1302.7" y="14" width="1.5" height="14" fill="#8c8c8c"/><text x="1302.7" y="10" font-size="11" fill="#8c8c8c" font-family="Liberation Sans">290</text><rect x="1347.5" y="14" width="1.5" height="14" fill="#8c8c8c"/><text x="1347.5" y="10" font-size="11" fill="#8c8c8c" font-family="Liberation Sans">300</text><rect x="1392.3" y="14" width="1.5" height="14" fill="#8c8c8c"/><text x="1392.3" y="10" font-size="11" fill="#8c8c8c" font-family="Liberation Sans">310</text><rect x="1437.1" y="14" width="1.5" height="14" fill="#8c8c8c"/><text x="1437.1" y="10" font-size="11" fill="#8c8c8c" font-family="Liberation Sans">320</text><rect x="1481.9" y="14" width="1.5" height="14" fill="#8c8c8c"/><text x="1481.9" y="10" font-size="11" fill="#8c8c8c" font-family="Liberation Sans">330</text><rect x="1526.7" y="14" width="1.5" height="14" fill="#8c8c8c"/><text x="1526.7" y="10" font-size="11" fill="#8c8c8c" font-family="Liberation Sans">340</text><rect x="1571.5" y="14" width="1.5" height="14" fill="#8c8c8c"/><text x="1571.5" y="10" font-size="11" fill="#8c8c8c" font-family="Liberation Sans">350</text><rect x="1616.3" y="14" width="1.5" height="14" fill="#8c8c8c"/><text x="1616.3" y="10" font-size="11" fill="#8c8c8c" font-family="Liberation Sans">36</text></svg>
<div class="a" style="left:922px;top:918px;width:3px;height:28px;background:#5a5a5a;"></div>
<div class="t" style="left:921px;top:932.4px;font-size:10.5px;color:#fff;">201</div>
<div class="a" style="left:1651px;top:924px;width:69px;height:18px;background:#2b2b2b;"></div>
<div class="t" style="left:1656px;top:927.2px;font-size:11px;color:#ddd;">201</div>
<svg class="a" style="left:1728px;top:924px;" width="184" height="18" viewBox="0 0 184 18"><rect x="2" y="3" width="2" height="12" fill="#ccc"/><path d="M12 3 L5 9 L12 15Z M19 3 L12 9 L19 15Z" fill="#ccc"/><rect x="26" y="3" width="2" height="12" fill="#ccc"/><path d="M38 3 L30 9 L38 15Z" fill="#ccc"/><rect x="49" y="3" width="3" height="12" fill="#f08a2c"/><path d="M61 3 L54 9 L61 15Z" fill="#ccc"/><rect x="47" y="3" width="2" height="12" fill="#ccc"/><path d="M85 3 L76 9 L85 15Z" fill="#ccc"/><path d="M98 3 L107 9 L98 15Z" fill="#ccc"/><path d="M118 3 L125 9 L118 15Z" fill="#ccc"/><rect x="126" y="3" width="3" height="12" fill="#f08a2c"/><path d="M143 3 L150 9 L143 15Z" fill="#ccc"/><rect x="151" y="3" width="2" height="12" fill="#ccc"/><path d="M160 3 L167 9 L160 15Z M167 3 L174 9 L167 15Z" fill="#ccc"/><rect x="175" y="3" width="2" height="12" fill="#ccc"/></svg>
<svg class="a" style="left:8px;top:957px;" width="6" height="22" viewBox="0 0 6 22"><rect x="0" y="0" width="1" height="1" fill="#888"/><rect x="0" y="3" width="1" height="1" fill="#888"/><rect x="0" y="6" width="1" height="1" fill="#888"/><rect x="0" y="9" width="1" height="1" fill="#888"/><rect x="0" y="12" width="1" height="1" fill="#888"/><rect x="0" y="15" width="1" height="1" fill="#888"/><rect x="0" y="18" width="1" height="1" fill="#888"/><rect x="0" y="21" width="1" height="1" fill="#888"/><rect x="3" y="0" width="1" height="1" fill="#888"/><rect x="3" y="3" width="1" height="1" fill="#888"/><rect x="3" y="6" width="1" height="1" fill="#888"/><rect x="3" y="9" width="1" height="1" fill="#888"/><rect x="3" y="12" width="1" height="1" fill="#888"/><rect x="3" y="15" width="1" height="1" fill="#888"/><rect x="3" y="18" width="1" height="1" fill="#888"/><rect x="3" y="21" width="1" height="1" fill="#888"/></svg>
<div class="a" style="left:18px;top:955px;width:68px;height:23px;background:#2b2b2b;border-radius:3px;"></div>
<div class="t" style="left:24px;top:960.7px;font-size:11px;color:#ddd;">1</div>
<div class="a" style="left:94px;top:955px;width:68px;height:23px;background:#2b2b2b;border-radius:3px;"></div>
<div class="t" style="left:100px;top:960.7px;font-size:11px;color:#ddd;">1</div>
<div class="a" style="left:169px;top:955px;width:6px;height:23px;background:#2e2e2e;"></div>
<div class="a" style="left:175px;top:956px;width:1269px;height:21px;background:#5e5e5e;border-radius:3px;"></div>
<div class="a" style="left:180px;top:960px;width:12px;height:13px;background:#a0a0a0;border-radius:2px;"></div>
<div class="t" style="left:195px;top:960.7px;font-size:11px;color:#eee;">1</div>
<div class="t" style="right:490px;top:960.9px;font-size:10.5px;color:#eee;">360</div>
<div class="a" style="left:1426px;top:960px;width:13px;height:13px;background:#a0a0a0;border-radius:2px;"></div>
<div class="a" style="left:1456px;top:955px;width:67px;height:23px;background:#2b2b2b;"></div>
<div class="t" style="left:1461px;top:960.7px;font-size:11px;color:#ddd;">360</div>
<div class="a" style="left:1532px;top:955px;width:67px;height:23px;background:#2b2b2b;"></div>
<div class="t" style="left:1537px;top:960.7px;font-size:11px;color:#ddd;">360</div>
<svg class="a" style="left:1605px;top:962px;" width="10" height="6" viewBox="0 0 10 6"><path d="M0 0 L9 0 L4.5 5Z" fill="#999"/></svg>
<div class="a" style="left:1622px;top:955px;width:101px;height:23px;background:#3e3e3e;border:1px solid #555;box-sizing:border-box;"></div>
<div class="t" style="left:1627px;top:960.4px;font-size:11.5px;color:#ddd;">No Anim Layer</div>
<svg class="a" style="left:1733px;top:962px;" width="10" height="6" viewBox="0 0 10 6"><path d="M0 0 L9 0 L4.5 5Z" fill="#999"/></svg>
<div class="a" style="left:1752px;top:955px;width:100px;height:23px;background:#3e3e3e;border:1px solid #555;box-sizing:border-box;"></div>
<div class="t" style="left:1757px;top:960.4px;font-size:11.5px;color:#ddd;">No Character Set</div>
<svg class="a" style="left:1859px;top:957px;" width="50" height="20" viewBox="0 0 50 20"><circle cx="10" cy="10" r="7" fill="none" stroke="#ccc" stroke-width="1.6"/><path d="M10 5v6h4" stroke="#ccc" stroke-width="1.6" fill="none"/><circle cx="40" cy="5" r="2.5" fill="#f08a2c"/><path d="M35 9 l5 2 3 5 M38 11 l-4 7 M40 12 l6 -2" stroke="#f08a2c" stroke-width="2" fill="none"/></svg>
<div class="a" style="left:0px;top:983px;width:1912px;height:1px;background:#3a3a3a;"></div>
<svg class="a" style="left:8px;top:990px;" width="6" height="22" viewBox="0 0 6 22"><rect x="0" y="0" width="1" height="1" fill="#888"/><rect x="0" y="3" width="1" height="1" fill="#888"/><rect x="0" y="6" width="1" height="1" fill="#888"/><rect x="0" y="9" width="1" height="1" fill="#888"/><rect x="0" y="12" width="1" height="1" fill="#888"/><rect x="0" y="15" width="1" height="1" fill="#888"/><rect x="0" y="18" width="1" height="1" fill="#888"/><rect x="0" y="21" width="1" height="1" fill="#888"/><rect x="3" y="0" width="1" height="1" fill="#888"/><rect x="3" y="3" width="1" height="1" fill="#888"/><rect x="3" y="6" width="1" height="1" fill="#888"/><rect x="3" y="9" width="1" height="1" fill="#888"/><rect x="3" y="12" width="1" height="1" fill="#888"/><rect x="3" y="15" width="1" height="1" fill="#888"/><rect x="3" y="18" width="1" height="1" fill="#888"/><rect x="3" y="21" width="1" height="1" fill="#888"/></svg>
<div class="t" style="left:28px;top:994.2px;font-size:11px;color:#e8e8e8;">MEL</div>
<div class="a" style="left:63px;top:988px;width:598px;height:23px;background:#2b2b2b;border-radius:3px;"></div>
<div class="a" style="left:668px;top:988px;width:1220px;height:23px;background:#2b2b2b;border-radius:3px;"></div>
<svg class="a" style="left:1892px;top:989px;" width="18" height="20" viewBox="0 0 18 20"><rect x="1" y="2" width="15" height="15" fill="#555" stroke="#aaa"/><text x="3" y="14" font-size="9" fill="#ddd" font-family="Liberation Mono">{;}</text></svg>
<div class="a" style="left:0px;top:1015px;width:1912px;height:2px;background:#363636;"></div>
<svg class="a" style="left:8px;top:1020px;" width="6" height="16" viewBox="0 0 6 16"><rect x="0" y="0" width="1" height="1" fill="#888"/><rect x="0" y="3" width="1" height="1" fill="#888"/><rect x="0" y="6" width="1" height="1" fill="#888"/><rect x="0" y="9" width="1" height="1" fill="#888"/><rect x="0" y="12" width="1" height="1" fill="#888"/><rect x="0" y="15" width="1" height="1" fill="#888"/><rect x="3" y="0" width="1" height="1" fill="#888"/><rect x="3" y="3" width="1" height="1" fill="#888"/><rect x="3" y="6" width="1" height="1" fill="#888"/><rect x="3" y="9" width="1" height="1" fill="#888"/><rect x="3" y="12" width="1" height="1" fill="#888"/><rect x="3" y="15" width="1" height="1" fill="#888"/></svg>
<div class="t" style="left:29px;top:1023.2px;font-size:10px;color:#c8c8c8;">Move Tool: Select an object to move.</div>
<div class="a" style="left:0px;top:1040px;width:1912px;height:40px;background:#05070c;"></div>
<svg class="a" style="left:14px;top:1051px;" width="20" height="20" viewBox="0 0 20 20"><path d="M1 3.5 L8 2.5 V9.3 H1Z M9 2.3 L19 1 V9.3 H9Z M1 10.5 H8 V17.4 L1 16.4Z M9 10.5 H19 V19 L9 17.6Z" fill="#fff"/></svg>
<div class="a" style="left:48px;top:1040px;width:344px;height:40px;background:#333333;"></div>
<div class="t" style="left:56px;top:1052.8px;font-size:14.5px;color:#a8a8a8;">Search Windows</div>
<div class="a" style="left:835px;top:1040px;width:44px;height:40px;background:#2a3440;"></div>
<svg class="a" style="left:404px;top:1046px;" width="470" height="30" viewBox="0 0 470 30"><rect x="8" y="7" width="14" height="14" fill="none" stroke="#fff" stroke-width="1.5"/><path d="M4 9v10M26 9v10" stroke="#fff" stroke-width="1.2"/><path d="M56 7h8l2 3h12v12H56z" fill="#f5c04a"/><rect x="60" y="15" width="12" height="6" fill="#2a8ae0"/><circle cx="116" cy="14" r="10" fill="#db4437"/><path d="M116 14 L125 19 A10 10 0 0 1 107 19Z" fill="#0f9d58"/><path d="M116 14 L107 19 A10 10 0 0 1 106.5 9 Z" fill="#f4b400"/><circle cx="116" cy="14" r="4.5" fill="#4285f4" stroke="#fff" stroke-width="1.5"/><circle cx="165" cy="14" r="10" fill="#e66a1e"/><circle cx="166" cy="13" r="6" fill="#3b5ea8"/><path d="M155 14 a10 10 0 0 0 20 0 q-4 6 -10 5 q-7 -1 -10 -5z" fill="#f39c12"/><rect x="203" y="4" width="21" height="21" rx="3" fill="#ccc"/><circle cx="213" cy="13" r="6" fill="none" stroke="#333" stroke-width="2.5"/><path d="M217 17 l5 6" stroke="#333" stroke-width="2.5"/><rect x="252" y="6" width="21" height="16" fill="#1e73d8"/><rect x="255" y="9" width="6" height="10" fill="#fff"/><rect x="263" y="9" width="7" height="2" fill="#fff"/><rect x="300" y="7" width="20" height="14" fill="#aeb8c4"/><path d="M303 18 l4 -6 4 3 4 -7 3 5" stroke="#3a6fb0" fill="none"/><path d="M348 16 q6 -8 14 -4 l6 -4 -2 6 q2 6 -6 8z" fill="#9a8a70"/><circle cx="356" cy="13" r="2" fill="#222"/><circle cx="400" cy="14" r="11" fill="#1e6fd8"/><circle cx="400" cy="14" r="8.5" fill="#fff"/><path d="M392 14 l4 -4 v3 h8 v-3 l4 4 -4 4 v-3 h-8 v3z" fill="#1e6fd8"/><rect x="438" y="4" width="22" height="22" fill="#3dbfc8"/><path d="M440 24 L440 12 L445 6 L449 12 L453 6 L458 12 L458 24" fill="#1a8e98"/></svg>
<svg class="a" style="left:1630px;top:1048px;" width="270" height="26" viewBox="0 0 270 26"><path d="M6 15 l6 -6 6 6" stroke="#fff" fill="none" stroke-width="1.4"/><rect x="30" y="7" width="14" height="10" fill="none" stroke="#fff"/><path d="M34 20h6M37 17v3" stroke="#fff"/><path d="M55 9 h4 l5 -4 v16 l-5 -4 h-4z" fill="none" stroke="#fff"/><path d="M67 9 q3 4 0 8 M70 7 q5 6 0 12" stroke="#fff" fill="none"/><path d="M82 20 q4 -12 12 -14 q-2 8 -10 12" stroke="#fff" fill="none" stroke-width="1.3"/><rect x="110" y="7" width="24" height="12" fill="none" stroke="#fff"/><path d="M113 10h18M113 13h18M116 16h12" stroke="#fff" stroke-width="0.8"/><path d="M250 4 h18 v13 h-8 l-4 4 v-4 h-6z" fill="none" stroke="#fff" stroke-width="1.4"/><circle cx="262" cy="19" r="6.5" fill="#fff"/><text x="262" y="22" font-size="9" text-anchor="middle" fill="#000" font-family="Liberation Sans">2</text></svg>
<div class="t" style="left:1785px;transform:translateX(-50%);top:1044.9px;font-size:11.5px;color:#fff;">ENG</div>
<div class="t" style="left:1785px;transform:translateX(-50%);top:1061.9px;font-size:11.5px;color:#fff;">PTB</div>
<div class="t" style="left:1834.5px;transform:translateX(-50%);top:1044.9px;font-size:11.5px;color:#fff;">5:26 PM</div>
<div class="t" style="left:1834.5px;transform:translateX(-50%);top:1061.9px;font-size:11.5px;color:#fff;">3/24/2017</div>
<svg class="a" style="left:2px;top:1075px;" width="1063" height="863" viewBox="0 0 1063 863"><rect width="1063" height="863" fill="#333333"/><defs><pattern id="g51334" width="10.25" height="10.25" patternUnits="userSpaceOnUse" x="0" y="0"><path d="M10.25 0 L0 0 0 10.25" fill="none" stroke="#2a2a2a" stroke-width="1.6"/></pattern></defs><rect width="1063" height="863" fill="url(#g51334)"/><rect x="243" y="31.5" width="336" height="113" fill="#72502c" opacity="0.62"/><rect x="804.5" y="285" width="245" height="289" fill="#3f5d78" opacity="0.62"/><path d="M310.0,63.5 C333.9,63.5 333.9,80.0 357.7,80.0" stroke="#b49a9a" stroke-width="1.1" fill="none"/><path d="M404.4,80.0 C456.0,80.0 456.0,96.5 507.6,96.5" stroke="#b49a9a" stroke-width="1.1" fill="none"/><path d="M414.8,130.8 C461.2,130.8 461.2,102.5 507.6,102.5" stroke="#b49a9a" stroke-width="1.1" fill="none"/><path d="M555.0,96.5 C639.3,96.5 639.3,136.5 723.6,136.5" stroke="#6d6a9a" stroke-width="1.1" fill="none"/><path d="M320.0,167.5 C340.0,167.5 339.0,204.0 359.0,204.0" stroke="#6d6a9a" stroke-width="1.1" fill="none"/><path d="M406.5,204.0 C457.1,204.0 457.1,224.6 507.6,224.6" stroke="#6d6a9a" stroke-width="1.1" fill="none"/><path d="M409.0,246.5 C458.3,246.5 458.3,230.7 507.6,230.7" stroke="#6d6a9a" stroke-width="1.1" fill="none"/><path d="M554.0,224.6 C642.0,224.6 642.0,217.6 730.0,217.6" stroke="#6d6a9a" stroke-width="1.1" fill="none"/><path d="M323.5,279.3 C344.8,279.3 344.8,289.5 366.0,289.5" stroke="#6d6a9a" stroke-width="1.1" fill="none"/><path d="M413.4,289.5 C458.7,289.5 458.7,294.9 504.0,294.9" stroke="#6d6a9a" stroke-width="1.1" fill="none"/><path d="M408.0,341.0 C456.0,341.0 456.0,300.7 504.0,300.7" stroke="#6d6a9a" stroke-width="1.1" fill="none"/><path d="M550.8,294.9 C632.4,294.9 632.4,304.0 714.0,304.0" stroke="#6d6a9a" stroke-width="1.1" fill="none"/><path d="M325.6,375.4 C347.6,375.4 347.6,385.9 369.5,385.9" stroke="#6d6a9a" stroke-width="1.1" fill="none"/><path d="M417.0,385.9 C455.3,385.9 455.3,397.4 493.6,397.4" stroke="#6d6a9a" stroke-width="1.1" fill="none"/><path d="M418.3,432.7 C456.0,432.7 456.0,403.6 493.6,403.6" stroke="#6d6a9a" stroke-width="1.1" fill="none"/><path d="M540.3,397.4 C627.1,397.4 627.1,310.2 714.0,310.2" stroke="#6d6a9a" stroke-width="1.1" fill="none"/><path d="M335.4,498.2 C355.4,498.2 353.0,519.3 373.0,519.3" stroke="#6d6a9a" stroke-width="1.1" fill="none"/><path d="M420.4,519.3 C474.7,519.3 474.7,517.0 529.0,517.0" stroke="#6d6a9a" stroke-width="1.1" fill="none"/><path d="M495.0,545.8 C515.0,545.8 509.0,523.2 529.0,523.2" stroke="#6d6a9a" stroke-width="1.1" fill="none"/><path d="M576.0,517.0 C658.5,517.0 658.5,549.0 741.0,549.0" stroke="#6d6a9a" stroke-width="1.1" fill="none"/><path d="M329.8,582.8 C354.9,582.8 354.9,590.9 380.0,590.9" stroke="#6d6a9a" stroke-width="1.1" fill="none"/><path d="M427.4,590.9 C482.7,590.9 482.7,592.0 538.0,592.0" stroke="#6d6a9a" stroke-width="1.1" fill="none"/><path d="M498.5,632.9 C518.5,632.9 518.0,598.2 538.0,598.2" stroke="#6d6a9a" stroke-width="1.1" fill="none"/><path d="M585.6,592.0 C663.3,592.0 663.3,555.2 741.0,555.2" stroke="#6d6a9a" stroke-width="1.1" fill="none"/><path d="M332.0,669.3 C355.5,669.3 355.5,677.8 379.0,677.8" stroke="#6d6a9a" stroke-width="1.1" fill="none"/><path d="M426.7,677.8 C482.4,677.8 482.4,672.4 538.0,672.4" stroke="#6d6a9a" stroke-width="1.1" fill="none"/><path d="M495.0,709.8 C516.5,709.8 516.5,678.6 538.0,678.6" stroke="#6d6a9a" stroke-width="1.1" fill="none"/><path d="M585.6,672.4 C663.3,672.4 663.3,619.3 741.0,619.3" stroke="#6d6a9a" stroke-width="1.1" fill="none"/><path d="M333.3,761.8 C364.6,761.8 364.6,769.4 396.0,769.4" stroke="#6d6a9a" stroke-width="1.1" fill="none"/><path d="M442.7,769.4 C487.9,769.4 487.9,741.8 533.0,741.8" stroke="#6d6a9a" stroke-width="1.1" fill="none"/><path d="M580.0,741.8 C659.5,741.8 659.5,683.9 739.0,683.9" stroke="#6d6a9a" stroke-width="1.1" fill="none"/><path d="M761.0,304.0 C784.9,304.0 784.9,374.5 808.7,374.5" stroke="#6d6a9a" stroke-width="1.1" fill="none"/><path d="M856.0,374.5 C876.0,374.5 868.0,436.0 888.0,436.0" stroke="#6d6a9a" stroke-width="1.1" fill="none"/><path d="M867.0,514.9 C887.0,514.9 868.0,442.2 888.0,442.2" stroke="#6d6a9a" stroke-width="1.1" fill="none"/><path d="M935.0,436.0 C956.0,436.0 956.0,343.0 977.0,343.0" stroke="#6d6a9a" stroke-width="1.1" fill="none"/><path d="M786.0,683.9 C806.0,683.9 800.5,514.9 820.5,514.9" stroke="#6d6a9a" stroke-width="1.1" fill="none"/><path d="M53.8,436.5 C205.8,436.5 205.8,85.7 357.7,85.7" stroke="#6d6a9a" stroke-width="1.1" fill="none"/><path d="M53.8,436.5 C206.4,436.5 206.4,210.0 359.0,210.0" stroke="#6d6a9a" stroke-width="1.1" fill="none"/><path d="M53.8,436.5 C209.9,436.5 209.9,295.5 366.0,295.5" stroke="#6d6a9a" stroke-width="1.1" fill="none"/><path d="M53.8,436.5 C211.6,436.5 211.7,391.9 369.5,391.9" stroke="#6d6a9a" stroke-width="1.1" fill="none"/><path d="M53.8,436.5 C213.4,436.5 213.4,525.7 373.0,525.7" stroke="#6d6a9a" stroke-width="1.1" fill="none"/><path d="M53.8,436.5 C216.9,436.5 216.9,597.1 380.0,597.1" stroke="#6d6a9a" stroke-width="1.1" fill="none"/><path d="M53.8,436.5 C216.4,436.5 216.4,684.1 379.0,684.1" stroke="#6d6a9a" stroke-width="1.1" fill="none"/><path d="M53.8,436.5 C224.9,436.5 224.9,776.0 396.0,776.0" stroke="#6d6a9a" stroke-width="1.1" fill="none"/><path d="M755.3,148.0 L745.5,205.7" stroke="#6d6a9a" stroke-width="1.1"/><path d="M761.5,229.5 L729.5,292.0" stroke="#6d6a9a" stroke-width="1.1"/><path d="M772.8,561.0 L756.8,607.6" stroke="#6d6a9a" stroke-width="1.1"/><path d="M772.8,631.0 L754.5,671.8" stroke="#6d6a9a" stroke-width="1.1"/><path d="M1009.0,354.0 L994.0,367.5" stroke="#6d6a9a" stroke-width="1.1"/><path d="M1010.0,390.5 L995.0,406.0" stroke="#6d6a9a" stroke-width="1.1"/><path d="M1011.0,429.0 L995.0,442.7" stroke="#6d6a9a" stroke-width="1.1"/><path d="M1011.0,465.8 L994.0,480.4" stroke="#6d6a9a" stroke-width="1.1"/><path d="M1010.0,503.4 L994.8,519.0" stroke="#6d6a9a" stroke-width="1.1"/><path d="M533,748 C503,748 488,770 469,800" stroke="#6d6a9a" stroke-width="1.1" fill="none"/><rect x="263.6" y="55" width="46.39999999999998" height="17" rx="2.2" fill="#6b7d86" stroke="#1c1c1c" stroke-width="0.8"/><circle cx="263.6" cy="63.5" r="1.5" fill="#7e8fd8" stroke="#222" stroke-width="0.5"/><circle cx="263.6" cy="67.9" r="1.5" fill="#8a9298" stroke="#222" stroke-width="0.5"/><circle cx="310.0" cy="63.5" r="1.5" fill="#7e8fd8" stroke="#222" stroke-width="0.5"/><rect x="269.2" y="70.6" width="2.2" height="3.4" fill="#8a9298" stroke="#222" stroke-width="0.4"/><rect x="275.7" y="70.6" width="2.2" height="3.4" fill="#8a9298" stroke="#222" stroke-width="0.4"/><rect x="266.6" y="58.0" width="23.2" height="2" fill="#e8e8e8" opacity="0.7"/><rect x="266.6" y="61.5" width="13.9" height="1.2" fill="#222" opacity="0.6"/><rect x="304.0" y="57.0" width="1.5" height="4" fill="#111"/><rect x="357.7" y="69" width="46.69999999999999" height="22" rx="2.9" fill="#6aa882" stroke="#1c1c1c" stroke-width="1.0"/><circle cx="357.7" cy="80.0" r="2.0" fill="#7e8fd8" stroke="#222" stroke-width="0.5"/><circle cx="357.7" cy="85.7" r="2.0" fill="#8a9298" stroke="#222" stroke-width="0.5"/><circle cx="404.4" cy="80.0" r="2.0" fill="#7e8fd8" stroke="#222" stroke-width="0.5"/><rect x="363.3" y="89.2" width="2.9" height="4.4" fill="#8a9298" stroke="#222" stroke-width="0.4"/><rect x="369.8" y="89.2" width="2.9" height="4.4" fill="#8a9298" stroke="#222" stroke-width="0.4"/><rect x="360.7" y="72.0" width="23.3" height="2" fill="#e8e8e8" opacity="0.7"/><rect x="360.7" y="75.5" width="14.0" height="1.2" fill="#222" opacity="0.6"/><rect x="398.4" y="71.0" width="1.5" height="4" fill="#111"/><rect x="507.6" y="85" width="47.39999999999998" height="23" rx="3.0" fill="#8ea24e" stroke="#1c1c1c" stroke-width="1.0"/><circle cx="507.6" cy="96.5" r="2.1" fill="#7e8fd8" stroke="#222" stroke-width="0.5"/><circle cx="507.6" cy="102.5" r="2.1" fill="#8a9298" stroke="#222" stroke-width="0.5"/><circle cx="555.0" cy="96.5" r="2.1" fill="#7e8fd8" stroke="#222" stroke-width="0.5"/><rect x="513.3" y="106.2" width="3.0" height="4.6" fill="#8a9298" stroke="#222" stroke-width="0.4"/><rect x="519.9" y="106.2" width="3.0" height="4.6" fill="#8a9298" stroke="#222" stroke-width="0.4"/><rect x="510.6" y="88.0" width="23.7" height="2" fill="#e8e8e8" opacity="0.7"/><rect x="510.6" y="91.5" width="14.2" height="1.2" fill="#222" opacity="0.6"/><rect x="549.0" y="87.0" width="1.5" height="4" fill="#111"/><rect x="368" y="122" width="46.80000000000001" height="17.5" rx="2.3" fill="#6b7d86" stroke="#1c1c1c" stroke-width="0.8"/><circle cx="368" cy="130.8" r="1.6" fill="#7e8fd8" stroke="#222" stroke-width="0.5"/><circle cx="368" cy="135.3" r="1.6" fill="#8a9298" stroke="#222" stroke-width="0.5"/><circle cx="414.8" cy="130.8" r="1.6" fill="#7e8fd8" stroke="#222" stroke-width="0.5"/><rect x="373.6" y="138.1" width="2.3" height="3.5" fill="#8a9298" stroke="#222" stroke-width="0.4"/><rect x="380.2" y="138.1" width="2.3" height="3.5" fill="#8a9298" stroke="#222" stroke-width="0.4"/><rect x="371.0" y="125.0" width="23.4" height="2" fill="#e8e8e8" opacity="0.7"/><rect x="371.0" y="128.5" width="14.0" height="1.2" fill="#222" opacity="0.6"/><rect x="408.8" y="124.0" width="1.5" height="4" fill="#111"/><rect x="723.6" y="125" width="47.39999999999998" height="23" rx="3.0" fill="#3f8b8c" stroke="#1c1c1c" stroke-width="1.0"/><circle cx="723.6" cy="136.5" r="2.1" fill="#7e8fd8" stroke="#222" stroke-width="0.5"/><circle cx="723.6" cy="142.5" r="2.1" fill="#8a9298" stroke="#222" stroke-width="0.5"/><circle cx="771.0" cy="136.5" r="2.1" fill="#7e8fd8" stroke="#222" stroke-width="0.5"/><rect x="729.3" y="146.2" width="3.0" height="4.6" fill="#8a9298" stroke="#222" stroke-width="0.4"/><rect x="735.9" y="146.2" width="3.0" height="4.6" fill="#8a9298" stroke="#222" stroke-width="0.4"/><rect x="726.6" y="128.0" width="23.7" height="2" fill="#e8e8e8" opacity="0.7"/><rect x="726.6" y="131.5" width="14.2" height="1.2" fill="#222" opacity="0.6"/><rect x="765.0" y="127.0" width="1.5" height="4" fill="#111"/><rect x="273" y="159" width="47" height="17" rx="2.2" fill="#43699a" stroke="#1c1c1c" stroke-width="0.8"/><circle cx="273" cy="167.5" r="1.5" fill="#7e8fd8" stroke="#222" stroke-width="0.5"/><circle cx="273" cy="171.9" r="1.5" fill="#8a9298" stroke="#222" stroke-width="0.5"/><circle cx="320" cy="167.5" r="1.5" fill="#7e8fd8" stroke="#222" stroke-width="0.5"/><rect x="278.6" y="174.6" width="2.2" height="3.4" fill="#8a9298" stroke="#222" stroke-width="0.4"/><rect x="285.2" y="174.6" width="2.2" height="3.4" fill="#8a9298" stroke="#222" stroke-width="0.4"/><rect x="276.0" y="162.0" width="23.5" height="2" fill="#e8e8e8" opacity="0.7"/><rect x="276.0" y="165.5" width="14.1" height="1.2" fill="#222" opacity="0.6"/><rect x="314.0" y="161.0" width="1.5" height="4" fill="#111"/><rect x="359" y="192.5" width="47.5" height="23.0" rx="3.0" fill="#3f8b8c" stroke="#1c1c1c" stroke-width="1.0"/><circle cx="359" cy="204.0" r="2.1" fill="#7e8fd8" stroke="#222" stroke-width="0.5"/><circle cx="359" cy="210.0" r="2.1" fill="#8a9298" stroke="#222" stroke-width="0.5"/><circle cx="406.5" cy="204.0" r="2.1" fill="#7e8fd8" stroke="#222" stroke-width="0.5"/><rect x="364.7" y="213.7" width="3.0" height="4.6" fill="#8a9298" stroke="#222" stroke-width="0.4"/><rect x="371.4" y="213.7" width="3.0" height="4.6" fill="#8a9298" stroke="#222" stroke-width="0.4"/><rect x="362.0" y="195.5" width="23.8" height="2" fill="#e8e8e8" opacity="0.7"/><rect x="362.0" y="199.0" width="14.2" height="1.2" fill="#222" opacity="0.6"/><rect x="400.5" y="194.5" width="1.5" height="4" fill="#111"/><rect x="507.6" y="212.70000000000005" width="46.39999999999998" height="23.700000000000045" rx="3.1" fill="#5b8b54" stroke="#1c1c1c" stroke-width="1.1"/><circle cx="507.6" cy="224.6" r="2.1" fill="#7e8fd8" stroke="#222" stroke-width="0.5"/><circle cx="507.6" cy="230.7" r="2.1" fill="#8a9298" stroke="#222" stroke-width="0.5"/><circle cx="554.0" cy="224.6" r="2.1" fill="#7e8fd8" stroke="#222" stroke-width="0.5"/><rect x="513.2" y="234.5" width="3.1" height="4.7" fill="#8a9298" stroke="#222" stroke-width="0.4"/><rect x="519.7" y="234.5" width="3.1" height="4.7" fill="#8a9298" stroke="#222" stroke-width="0.4"/><rect x="510.6" y="215.7" width="23.2" height="2" fill="#e8e8e8" opacity="0.7"/><rect x="510.6" y="219.2" width="13.9" height="1.2" fill="#222" opacity="0.6"/><rect x="548.0" y="214.7" width="1.5" height="4" fill="#111"/><rect x="362.6" y="238.5" width="46.39999999999998" height="16.0" rx="2.1" fill="#43699a" stroke="#1c1c1c" stroke-width="0.8"/><circle cx="362.6" cy="246.5" r="1.4" fill="#7e8fd8" stroke="#222" stroke-width="0.5"/><circle cx="362.6" cy="250.7" r="1.4" fill="#8a9298" stroke="#222" stroke-width="0.5"/><circle cx="409.0" cy="246.5" r="1.4" fill="#7e8fd8" stroke="#222" stroke-width="0.5"/><rect x="368.2" y="253.2" width="2.1" height="3.2" fill="#8a9298" stroke="#222" stroke-width="0.4"/><rect x="374.7" y="253.2" width="2.1" height="3.2" fill="#8a9298" stroke="#222" stroke-width="0.4"/><rect x="365.6" y="241.5" width="23.2" height="2" fill="#e8e8e8" opacity="0.7"/><rect x="365.6" y="245.0" width="13.9" height="1.2" fill="#222" opacity="0.6"/><rect x="403.0" y="240.5" width="1.5" height="4" fill="#111"/><rect x="730" y="205.70000000000005" width="47" height="23.799999999999955" rx="3.1" fill="#3f8b8c" stroke="#1c1c1c" stroke-width="1.1"/><circle cx="730" cy="217.6" r="2.1" fill="#7e8fd8" stroke="#222" stroke-width="0.5"/><circle cx="730" cy="223.8" r="2.1" fill="#8a9298" stroke="#222" stroke-width="0.5"/><circle cx="777" cy="217.6" r="2.1" fill="#7e8fd8" stroke="#222" stroke-width="0.5"/><rect x="735.6" y="227.6" width="3.1" height="4.8" fill="#8a9298" stroke="#222" stroke-width="0.4"/><rect x="742.2" y="227.6" width="3.1" height="4.8" fill="#8a9298" stroke="#222" stroke-width="0.4"/><rect x="733.0" y="208.7" width="23.5" height="2" fill="#e8e8e8" opacity="0.7"/><rect x="733.0" y="212.2" width="14.1" height="1.2" fill="#222" opacity="0.6"/><rect x="771.0" y="207.7" width="1.5" height="4" fill="#111"/><rect x="276" y="270.5999999999999" width="47.5" height="17.40000000000009" rx="2.3" fill="#43699a" stroke="#1c1c1c" stroke-width="0.8"/><circle cx="276" cy="279.3" r="1.6" fill="#7e8fd8" stroke="#222" stroke-width="0.5"/><circle cx="276" cy="283.8" r="1.6" fill="#8a9298" stroke="#222" stroke-width="0.5"/><circle cx="323.5" cy="279.3" r="1.6" fill="#7e8fd8" stroke="#222" stroke-width="0.5"/><rect x="281.7" y="286.6" width="2.3" height="3.5" fill="#8a9298" stroke="#222" stroke-width="0.4"/><rect x="288.4" y="286.6" width="2.3" height="3.5" fill="#8a9298" stroke="#222" stroke-width="0.4"/><rect x="279.0" y="273.6" width="23.8" height="2" fill="#e8e8e8" opacity="0.7"/><rect x="279.0" y="277.1" width="14.2" height="1.2" fill="#222" opacity="0.6"/><rect x="317.5" y="272.6" width="1.5" height="4" fill="#111"/><rect x="366" y="278" width="47.39999999999998" height="23" rx="3.0" fill="#3f8b8c" stroke="#1c1c1c" stroke-width="1.0"/><circle cx="366" cy="289.5" r="2.1" fill="#7e8fd8" stroke="#222" stroke-width="0.5"/><circle cx="366" cy="295.5" r="2.1" fill="#8a9298" stroke="#222" stroke-width="0.5"/><circle cx="413.4" cy="289.5" r="2.1" fill="#7e8fd8" stroke="#222" stroke-width="0.5"/><rect x="371.7" y="299.2" width="3.0" height="4.6" fill="#8a9298" stroke="#222" stroke-width="0.4"/><rect x="378.3" y="299.2" width="3.0" height="4.6" fill="#8a9298" stroke="#222" stroke-width="0.4"/><rect x="369.0" y="281.0" width="23.7" height="2" fill="#e8e8e8" opacity="0.7"/><rect x="369.0" y="284.5" width="14.2" height="1.2" fill="#222" opacity="0.6"/><rect x="407.4" y="280.0" width="1.5" height="4" fill="#111"/><rect x="504" y="283.79999999999995" width="46.799999999999955" height="22.200000000000045" rx="2.9" fill="#5b8b54" stroke="#1c1c1c" stroke-width="1.0"/><circle cx="504" cy="294.9" r="2.0" fill="#7e8fd8" stroke="#222" stroke-width="0.5"/><circle cx="504" cy="300.7" r="2.0" fill="#8a9298" stroke="#222" stroke-width="0.5"/><circle cx="550.8" cy="294.9" r="2.0" fill="#7e8fd8" stroke="#222" stroke-width="0.5"/><rect x="509.6" y="304.2" width="2.9" height="4.4" fill="#8a9298" stroke="#222" stroke-width="0.4"/><rect x="516.2" y="304.2" width="2.9" height="4.4" fill="#8a9298" stroke="#222" stroke-width="0.4"/><rect x="507.0" y="286.8" width="23.4" height="2" fill="#e8e8e8" opacity="0.7"/><rect x="507.0" y="290.3" width="14.0" height="1.2" fill="#222" opacity="0.6"/><rect x="544.8" y="285.8" width="1.5" height="4" fill="#111"/><rect x="714" y="292" width="47" height="24" rx="3.1" fill="#3f8b8c" stroke="#1c1c1c" stroke-width="1.1"/><circle cx="714" cy="304.0" r="2.2" fill="#7e8fd8" stroke="#222" stroke-width="0.5"/><circle cx="714" cy="310.2" r="2.2" fill="#8a9298" stroke="#222" stroke-width="0.5"/><circle cx="761" cy="304.0" r="2.2" fill="#7e8fd8" stroke="#222" stroke-width="0.5"/><rect x="719.6" y="314.1" width="3.1" height="4.8" fill="#8a9298" stroke="#222" stroke-width="0.4"/><rect x="726.2" y="314.1" width="3.1" height="4.8" fill="#8a9298" stroke="#222" stroke-width="0.4"/><rect x="717.0" y="295.0" width="23.5" height="2" fill="#e8e8e8" opacity="0.7"/><rect x="717.0" y="298.5" width="14.1" height="1.2" fill="#222" opacity="0.6"/><rect x="755.0" y="294.0" width="1.5" height="4" fill="#111"/><rect x="360.5" y="332.5999999999999" width="47.5" height="16.800000000000182" rx="2.2" fill="#43699a" stroke="#1c1c1c" stroke-width="0.8"/><circle cx="360.5" cy="341.0" r="1.5" fill="#7e8fd8" stroke="#222" stroke-width="0.5"/><circle cx="360.5" cy="345.4" r="1.5" fill="#8a9298" stroke="#222" stroke-width="0.5"/><circle cx="408.0" cy="341.0" r="1.5" fill="#7e8fd8" stroke="#222" stroke-width="0.5"/><rect x="366.2" y="348.1" width="2.2" height="3.4" fill="#8a9298" stroke="#222" stroke-width="0.4"/><rect x="372.9" y="348.1" width="2.2" height="3.4" fill="#8a9298" stroke="#222" stroke-width="0.4"/><rect x="363.5" y="335.6" width="23.8" height="2" fill="#e8e8e8" opacity="0.7"/><rect x="363.5" y="339.1" width="14.2" height="1.2" fill="#222" opacity="0.6"/><rect x="402.0" y="334.6" width="1.5" height="4" fill="#111"/><rect x="279" y="366.79999999999995" width="46.60000000000002" height="17.200000000000045" rx="2.2" fill="#43699a" stroke="#1c1c1c" stroke-width="0.8"/><circle cx="279" cy="375.4" r="1.5" fill="#7e8fd8" stroke="#222" stroke-width="0.5"/><circle cx="279" cy="379.9" r="1.5" fill="#8a9298" stroke="#222" stroke-width="0.5"/><circle cx="325.6" cy="375.4" r="1.5" fill="#7e8fd8" stroke="#222" stroke-width="0.5"/><rect x="284.6" y="382.6" width="2.2" height="3.4" fill="#8a9298" stroke="#222" stroke-width="0.4"/><rect x="291.1" y="382.6" width="2.2" height="3.4" fill="#8a9298" stroke="#222" stroke-width="0.4"/><rect x="282.0" y="369.8" width="23.3" height="2" fill="#e8e8e8" opacity="0.7"/><rect x="282.0" y="373.3" width="14.0" height="1.2" fill="#222" opacity="0.6"/><rect x="319.6" y="368.8" width="1.5" height="4" fill="#111"/><rect x="369.5" y="374.4000000000001" width="47.5" height="23.0" rx="3.0" fill="#3f8b8c" stroke="#1c1c1c" stroke-width="1.0"/><circle cx="369.5" cy="385.9" r="2.1" fill="#7e8fd8" stroke="#222" stroke-width="0.5"/><circle cx="369.5" cy="391.9" r="2.1" fill="#8a9298" stroke="#222" stroke-width="0.5"/><circle cx="417.0" cy="385.9" r="2.1" fill="#7e8fd8" stroke="#222" stroke-width="0.5"/><rect x="375.2" y="395.6" width="3.0" height="4.6" fill="#8a9298" stroke="#222" stroke-width="0.4"/><rect x="381.9" y="395.6" width="3.0" height="4.6" fill="#8a9298" stroke="#222" stroke-width="0.4"/><rect x="372.5" y="377.4" width="23.8" height="2" fill="#e8e8e8" opacity="0.7"/><rect x="372.5" y="380.9" width="14.2" height="1.2" fill="#222" opacity="0.6"/><rect x="411.0" y="376.4" width="1.5" height="4" fill="#111"/><rect x="493.6" y="385.5999999999999" width="46.69999999999993" height="23.700000000000045" rx="3.1" fill="#5b8b54" stroke="#1c1c1c" stroke-width="1.1"/><circle cx="493.6" cy="397.4" r="2.1" fill="#7e8fd8" stroke="#222" stroke-width="0.5"/><circle cx="493.6" cy="403.6" r="2.1" fill="#8a9298" stroke="#222" stroke-width="0.5"/><circle cx="540.3" cy="397.4" r="2.1" fill="#7e8fd8" stroke="#222" stroke-width="0.5"/><rect x="499.2" y="407.4" width="3.1" height="4.7" fill="#8a9298" stroke="#222" stroke-width="0.4"/><rect x="505.7" y="407.4" width="3.1" height="4.7" fill="#8a9298" stroke="#222" stroke-width="0.4"/><rect x="496.6" y="388.6" width="23.3" height="2" fill="#e8e8e8" opacity="0.7"/><rect x="496.6" y="392.1" width="14.0" height="1.2" fill="#222" opacity="0.6"/><rect x="534.3" y="387.6" width="1.5" height="4" fill="#111"/><rect x="371.6" y="424" width="46.69999999999999" height="17.40000000000009" rx="2.3" fill="#43699a" stroke="#1c1c1c" stroke-width="0.8"/><circle cx="371.6" cy="432.7" r="1.6" fill="#7e8fd8" stroke="#222" stroke-width="0.5"/><circle cx="371.6" cy="437.2" r="1.6" fill="#8a9298" stroke="#222" stroke-width="0.5"/><circle cx="418.3" cy="432.7" r="1.6" fill="#7e8fd8" stroke="#222" stroke-width="0.5"/><rect x="377.2" y="440.0" width="2.3" height="3.5" fill="#8a9298" stroke="#222" stroke-width="0.4"/><rect x="383.7" y="440.0" width="2.3" height="3.5" fill="#8a9298" stroke="#222" stroke-width="0.4"/><rect x="374.6" y="427.0" width="23.3" height="2" fill="#e8e8e8" opacity="0.7"/><rect x="374.6" y="430.5" width="14.0" height="1.2" fill="#222" opacity="0.6"/><rect x="412.3" y="426.0" width="1.5" height="4" fill="#111"/><rect x="808.7" y="363" width="47.299999999999955" height="23" rx="3.0" fill="#4aaec8" stroke="#1c1c1c" stroke-width="1.0"/><circle cx="808.7" cy="374.5" r="2.1" fill="#7e8fd8" stroke="#222" stroke-width="0.5"/><circle cx="808.7" cy="380.5" r="2.1" fill="#8a9298" stroke="#222" stroke-width="0.5"/><circle cx="856.0" cy="374.5" r="2.1" fill="#7e8fd8" stroke="#222" stroke-width="0.5"/><rect x="814.4" y="384.2" width="3.0" height="4.6" fill="#8a9298" stroke="#222" stroke-width="0.4"/><rect x="821.0" y="384.2" width="3.0" height="4.6" fill="#8a9298" stroke="#222" stroke-width="0.4"/><rect x="811.7" y="366.0" width="23.6" height="2" fill="#e8e8e8" opacity="0.7"/><rect x="811.7" y="369.5" width="14.2" height="1.2" fill="#222" opacity="0.6"/><rect x="850.0" y="365.0" width="1.5" height="4" fill="#111"/><rect x="888" y="424" width="47" height="24" rx="3.1" fill="#4aaec8" stroke="#1c1c1c" stroke-width="1.1"/><circle cx="888" cy="436.0" r="2.2" fill="#7e8fd8" stroke="#222" stroke-width="0.5"/><circle cx="888" cy="442.2" r="2.2" fill="#8a9298" stroke="#222" stroke-width="0.5"/><circle cx="935" cy="436.0" r="2.2" fill="#7e8fd8" stroke="#222" stroke-width="0.5"/><rect x="893.6" y="446.1" width="3.1" height="4.8" fill="#8a9298" stroke="#222" stroke-width="0.4"/><rect x="900.2" y="446.1" width="3.1" height="4.8" fill="#8a9298" stroke="#222" stroke-width="0.4"/><rect x="891.0" y="427.0" width="23.5" height="2" fill="#e8e8e8" opacity="0.7"/><rect x="891.0" y="430.5" width="14.1" height="1.2" fill="#222" opacity="0.6"/><rect x="929.0" y="426.0" width="1.5" height="4" fill="#111"/><rect x="977" y="332" width="48" height="22" rx="2.9" fill="#4aaec8" stroke="#1c1c1c" stroke-width="1.0"/><circle cx="977" cy="343.0" r="2.0" fill="#7e8fd8" stroke="#222" stroke-width="0.5"/><circle cx="977" cy="348.7" r="2.0" fill="#8a9298" stroke="#222" stroke-width="0.5"/><circle cx="1025" cy="343.0" r="2.0" fill="#7e8fd8" stroke="#222" stroke-width="0.5"/><rect x="982.8" y="352.2" width="2.9" height="4.4" fill="#8a9298" stroke="#222" stroke-width="0.4"/><rect x="989.5" y="352.2" width="2.9" height="4.4" fill="#8a9298" stroke="#222" stroke-width="0.4"/><rect x="980.0" y="335.0" width="24.0" height="2" fill="#e8e8e8" opacity="0.7"/><rect x="980.0" y="338.5" width="14.4" height="1.2" fill="#222" opacity="0.6"/><rect x="1019.0" y="334.0" width="1.5" height="4" fill="#111"/><rect x="978" y="367.5" width="48" height="23.0" rx="3.0" fill="#4aaec8" stroke="#1c1c1c" stroke-width="1.0"/><circle cx="978" cy="379.0" r="2.1" fill="#7e8fd8" stroke="#222" stroke-width="0.5"/><circle cx="978" cy="385.0" r="2.1" fill="#8a9298" stroke="#222" stroke-width="0.5"/><circle cx="1026" cy="379.0" r="2.1" fill="#7e8fd8" stroke="#222" stroke-width="0.5"/><rect x="983.8" y="388.7" width="3.0" height="4.6" fill="#8a9298" stroke="#222" stroke-width="0.4"/><rect x="990.5" y="388.7" width="3.0" height="4.6" fill="#8a9298" stroke="#222" stroke-width="0.4"/><rect x="981.0" y="370.5" width="24.0" height="2" fill="#e8e8e8" opacity="0.7"/><rect x="981.0" y="374.0" width="14.4" height="1.2" fill="#222" opacity="0.6"/><rect x="1020.0" y="369.5" width="1.5" height="4" fill="#111"/><rect x="979" y="406" width="48" height="23" rx="3.0" fill="#4aaec8" stroke="#1c1c1c" stroke-width="1.0"/><circle cx="979" cy="417.5" r="2.1" fill="#7e8fd8" stroke="#222" stroke-width="0.5"/><circle cx="979" cy="423.5" r="2.1" fill="#8a9298" stroke="#222" stroke-width="0.5"/><circle cx="1027" cy="417.5" r="2.1" fill="#7e8fd8" stroke="#222" stroke-width="0.5"/><rect x="984.8" y="427.2" width="3.0" height="4.6" fill="#8a9298" stroke="#222" stroke-width="0.4"/><rect x="991.5" y="427.2" width="3.0" height="4.6" fill="#8a9298" stroke="#222" stroke-width="0.4"/><rect x="982.0" y="409.0" width="24.0" height="2" fill="#e8e8e8" opacity="0.7"/><rect x="982.0" y="412.5" width="14.4" height="1.2" fill="#222" opacity="0.6"/><rect x="1021.0" y="408.0" width="1.5" height="4" fill="#111"/><rect x="979" y="442.70000000000005" width="48" height="23.09999999999991" rx="3.0" fill="#4aaec8" stroke="#1c1c1c" stroke-width="1.0"/><circle cx="979" cy="454.2" r="2.1" fill="#7e8fd8" stroke="#222" stroke-width="0.5"/><circle cx="979" cy="460.3" r="2.1" fill="#8a9298" stroke="#222" stroke-width="0.5"/><circle cx="1027" cy="454.2" r="2.1" fill="#7e8fd8" stroke="#222" stroke-width="0.5"/><rect x="984.8" y="464.0" width="3.0" height="4.6" fill="#8a9298" stroke="#222" stroke-width="0.4"/><rect x="991.5" y="464.0" width="3.0" height="4.6" fill="#8a9298" stroke="#222" stroke-width="0.4"/><rect x="982.0" y="445.7" width="24.0" height="2" fill="#e8e8e8" opacity="0.7"/><rect x="982.0" y="449.2" width="14.4" height="1.2" fill="#222" opacity="0.6"/><rect x="1021.0" y="444.7" width="1.5" height="4" fill="#111"/><rect x="978" y="480.4000000000001" width="48" height="23.0" rx="3.0" fill="#4aaec8" stroke="#1c1c1c" stroke-width="1.0"/><circle cx="978" cy="491.9" r="2.1" fill="#7e8fd8" stroke="#222" stroke-width="0.5"/><circle cx="978" cy="497.9" r="2.1" fill="#8a9298" stroke="#222" stroke-width="0.5"/><circle cx="1026" cy="491.9" r="2.1" fill="#7e8fd8" stroke="#222" stroke-width="0.5"/><rect x="983.8" y="501.6" width="3.0" height="4.6" fill="#8a9298" stroke="#222" stroke-width="0.4"/><rect x="990.5" y="501.6" width="3.0" height="4.6" fill="#8a9298" stroke="#222" stroke-width="0.4"/><rect x="981.0" y="483.4" width="24.0" height="2" fill="#e8e8e8" opacity="0.7"/><rect x="981.0" y="486.9" width="14.4" height="1.2" fill="#222" opacity="0.6"/><rect x="1020.0" y="482.4" width="1.5" height="4" fill="#111"/><rect x="979.5" y="519" width="46.5" height="23" rx="3.0" fill="#4aaec8" stroke="#1c1c1c" stroke-width="1.0"/><circle cx="979.5" cy="530.5" r="2.1" fill="#7e8fd8" stroke="#222" stroke-width="0.5"/><circle cx="979.5" cy="536.5" r="2.1" fill="#8a9298" stroke="#222" stroke-width="0.5"/><circle cx="1026.0" cy="530.5" r="2.1" fill="#7e8fd8" stroke="#222" stroke-width="0.5"/><rect x="985.1" y="540.2" width="3.0" height="4.6" fill="#8a9298" stroke="#222" stroke-width="0.4"/><rect x="991.6" y="540.2" width="3.0" height="4.6" fill="#8a9298" stroke="#222" stroke-width="0.4"/><rect x="982.5" y="522.0" width="23.2" height="2" fill="#e8e8e8" opacity="0.7"/><rect x="982.5" y="525.5" width="13.9" height="1.2" fill="#222" opacity="0.6"/><rect x="1020.0" y="521.0" width="1.5" height="4" fill="#111"/><rect x="7" y="427.4000000000001" width="46.8" height="18.09999999999991" rx="2.4" fill="#43699a" stroke="#1c1c1c" stroke-width="0.8"/><circle cx="7" cy="436.5" r="1.6" fill="#7e8fd8" stroke="#222" stroke-width="0.5"/><circle cx="7" cy="441.2" r="1.6" fill="#8a9298" stroke="#222" stroke-width="0.5"/><circle cx="53.8" cy="436.5" r="1.6" fill="#7e8fd8" stroke="#222" stroke-width="0.5"/><rect x="12.6" y="444.1" width="2.4" height="3.6" fill="#8a9298" stroke="#222" stroke-width="0.4"/><rect x="19.2" y="444.1" width="2.4" height="3.6" fill="#8a9298" stroke="#222" stroke-width="0.4"/><rect x="10.0" y="430.4" width="23.4" height="2" fill="#e8e8e8" opacity="0.7"/><rect x="10.0" y="433.9" width="14.0" height="1.2" fill="#222" opacity="0.6"/><rect x="47.8" y="429.4" width="1.5" height="4" fill="#111"/><rect x="820.5" y="503" width="46.5" height="23.799999999999955" rx="3.1" fill="#4aaec8" stroke="#1c1c1c" stroke-width="1.1"/><circle cx="820.5" cy="514.9" r="2.1" fill="#7e8fd8" stroke="#222" stroke-width="0.5"/><circle cx="820.5" cy="521.1" r="2.1" fill="#8a9298" stroke="#222" stroke-width="0.5"/><circle cx="867.0" cy="514.9" r="2.1" fill="#7e8fd8" stroke="#222" stroke-width="0.5"/><rect x="826.1" y="524.9" width="3.1" height="4.8" fill="#8a9298" stroke="#222" stroke-width="0.4"/><rect x="832.6" y="524.9" width="3.1" height="4.8" fill="#8a9298" stroke="#222" stroke-width="0.4"/><rect x="823.5" y="506.0" width="23.2" height="2" fill="#e8e8e8" opacity="0.7"/><rect x="823.5" y="509.5" width="13.9" height="1.2" fill="#222" opacity="0.6"/><rect x="861.0" y="505.0" width="1.5" height="4" fill="#111"/><rect x="288.7" y="489.79999999999995" width="46.69999999999999" height="16.700000000000045" rx="2.2" fill="#43699a" stroke="#1c1c1c" stroke-width="0.8"/><circle cx="288.7" cy="498.1" r="1.5" fill="#7e8fd8" stroke="#222" stroke-width="0.5"/><circle cx="288.7" cy="502.5" r="1.5" fill="#8a9298" stroke="#222" stroke-width="0.5"/><circle cx="335.4" cy="498.1" r="1.5" fill="#7e8fd8" stroke="#222" stroke-width="0.5"/><rect x="294.3" y="505.2" width="2.2" height="3.3" fill="#8a9298" stroke="#222" stroke-width="0.4"/><rect x="300.8" y="505.2" width="2.2" height="3.3" fill="#8a9298" stroke="#222" stroke-width="0.4"/><rect x="291.7" y="492.8" width="23.3" height="2" fill="#e8e8e8" opacity="0.7"/><rect x="291.7" y="496.3" width="14.0" height="1.2" fill="#222" opacity="0.6"/><rect x="329.4" y="491.8" width="1.5" height="4" fill="#111"/><rect x="373" y="507" width="47.39999999999998" height="24.59999999999991" rx="3.2" fill="#3f8b8c" stroke="#1c1c1c" stroke-width="1.1"/><circle cx="373" cy="519.3" r="2.2" fill="#7e8fd8" stroke="#222" stroke-width="0.5"/><circle cx="373" cy="525.7" r="2.2" fill="#8a9298" stroke="#222" stroke-width="0.5"/><circle cx="420.4" cy="519.3" r="2.2" fill="#7e8fd8" stroke="#222" stroke-width="0.5"/><rect x="378.7" y="529.6" width="3.2" height="4.9" fill="#8a9298" stroke="#222" stroke-width="0.4"/><rect x="385.3" y="529.6" width="3.2" height="4.9" fill="#8a9298" stroke="#222" stroke-width="0.4"/><rect x="376.0" y="510.0" width="23.7" height="2" fill="#e8e8e8" opacity="0.7"/><rect x="376.0" y="513.5" width="14.2" height="1.2" fill="#222" opacity="0.6"/><rect x="414.4" y="509.0" width="1.5" height="4" fill="#111"/><rect x="529" y="505" width="47" height="24" rx="3.1" fill="#5b8b54" stroke="#1c1c1c" stroke-width="1.1"/><circle cx="529" cy="517.0" r="2.2" fill="#7e8fd8" stroke="#222" stroke-width="0.5"/><circle cx="529" cy="523.2" r="2.2" fill="#8a9298" stroke="#222" stroke-width="0.5"/><circle cx="576" cy="517.0" r="2.2" fill="#7e8fd8" stroke="#222" stroke-width="0.5"/><rect x="534.6" y="527.1" width="3.1" height="4.8" fill="#8a9298" stroke="#222" stroke-width="0.4"/><rect x="541.2" y="527.1" width="3.1" height="4.8" fill="#8a9298" stroke="#222" stroke-width="0.4"/><rect x="532.0" y="508.0" width="23.5" height="2" fill="#e8e8e8" opacity="0.7"/><rect x="532.0" y="511.5" width="14.1" height="1.2" fill="#222" opacity="0.6"/><rect x="570.0" y="507.0" width="1.5" height="4" fill="#111"/><rect x="447.6" y="537" width="47.39999999999998" height="17.700000000000045" rx="2.3" fill="#43699a" stroke="#1c1c1c" stroke-width="0.8"/><circle cx="447.6" cy="545.9" r="1.6" fill="#7e8fd8" stroke="#222" stroke-width="0.5"/><circle cx="447.6" cy="550.5" r="1.6" fill="#8a9298" stroke="#222" stroke-width="0.5"/><circle cx="495.0" cy="545.9" r="1.6" fill="#7e8fd8" stroke="#222" stroke-width="0.5"/><rect x="453.3" y="553.3" width="2.3" height="3.5" fill="#8a9298" stroke="#222" stroke-width="0.4"/><rect x="459.9" y="553.3" width="2.3" height="3.5" fill="#8a9298" stroke="#222" stroke-width="0.4"/><rect x="450.6" y="540.0" width="23.7" height="2" fill="#e8e8e8" opacity="0.7"/><rect x="450.6" y="543.5" width="14.2" height="1.2" fill="#222" opacity="0.6"/><rect x="489.0" y="539.0" width="1.5" height="4" fill="#111"/><rect x="741" y="537" width="47.5" height="24" rx="3.1" fill="#3f8b8c" stroke="#1c1c1c" stroke-width="1.1"/><circle cx="741" cy="549.0" r="2.2" fill="#7e8fd8" stroke="#222" stroke-width="0.5"/><circle cx="741" cy="555.2" r="2.2" fill="#8a9298" stroke="#222" stroke-width="0.5"/><circle cx="788.5" cy="549.0" r="2.2" fill="#7e8fd8" stroke="#222" stroke-width="0.5"/><rect x="746.7" y="559.1" width="3.1" height="4.8" fill="#8a9298" stroke="#222" stroke-width="0.4"/><rect x="753.4" y="559.1" width="3.1" height="4.8" fill="#8a9298" stroke="#222" stroke-width="0.4"/><rect x="744.0" y="540.0" width="23.8" height="2" fill="#e8e8e8" opacity="0.7"/><rect x="744.0" y="543.5" width="14.2" height="1.2" fill="#222" opacity="0.6"/><rect x="782.5" y="539.0" width="1.5" height="4" fill="#111"/><rect x="283" y="574" width="46.80000000000001" height="17.59999999999991" rx="2.3" fill="#43699a" stroke="#1c1c1c" stroke-width="0.8"/><circle cx="283" cy="582.8" r="1.6" fill="#7e8fd8" stroke="#222" stroke-width="0.5"/><circle cx="283" cy="587.4" r="1.6" fill="#8a9298" stroke="#222" stroke-width="0.5"/><circle cx="329.8" cy="582.8" r="1.6" fill="#7e8fd8" stroke="#222" stroke-width="0.5"/><rect x="288.6" y="590.2" width="2.3" height="3.5" fill="#8a9298" stroke="#222" stroke-width="0.4"/><rect x="295.2" y="590.2" width="2.3" height="3.5" fill="#8a9298" stroke="#222" stroke-width="0.4"/><rect x="286.0" y="577.0" width="23.4" height="2" fill="#e8e8e8" opacity="0.7"/><rect x="286.0" y="580.5" width="14.0" height="1.2" fill="#222" opacity="0.6"/><rect x="323.8" y="576.0" width="1.5" height="4" fill="#111"/><rect x="380" y="579" width="47.39999999999998" height="23.799999999999955" rx="3.1" fill="#3f8b8c" stroke="#1c1c1c" stroke-width="1.1"/><circle cx="380" cy="590.9" r="2.1" fill="#7e8fd8" stroke="#222" stroke-width="0.5"/><circle cx="380" cy="597.1" r="2.1" fill="#8a9298" stroke="#222" stroke-width="0.5"/><circle cx="427.4" cy="590.9" r="2.1" fill="#7e8fd8" stroke="#222" stroke-width="0.5"/><rect x="385.7" y="600.9" width="3.1" height="4.8" fill="#8a9298" stroke="#222" stroke-width="0.4"/><rect x="392.3" y="600.9" width="3.1" height="4.8" fill="#8a9298" stroke="#222" stroke-width="0.4"/><rect x="383.0" y="582.0" width="23.7" height="2" fill="#e8e8e8" opacity="0.7"/><rect x="383.0" y="585.5" width="14.2" height="1.2" fill="#222" opacity="0.6"/><rect x="421.4" y="581.0" width="1.5" height="4" fill="#111"/><rect x="538" y="580" width="47.60000000000002" height="24" rx="3.1" fill="#5b8b54" stroke="#1c1c1c" stroke-width="1.1"/><circle cx="538" cy="592.0" r="2.2" fill="#7e8fd8" stroke="#222" stroke-width="0.5"/><circle cx="538" cy="598.2" r="2.2" fill="#8a9298" stroke="#222" stroke-width="0.5"/><circle cx="585.6" cy="592.0" r="2.2" fill="#7e8fd8" stroke="#222" stroke-width="0.5"/><rect x="543.7" y="602.1" width="3.1" height="4.8" fill="#8a9298" stroke="#222" stroke-width="0.4"/><rect x="550.4" y="602.1" width="3.1" height="4.8" fill="#8a9298" stroke="#222" stroke-width="0.4"/><rect x="541.0" y="583.0" width="23.8" height="2" fill="#e8e8e8" opacity="0.7"/><rect x="541.0" y="586.5" width="14.3" height="1.2" fill="#222" opacity="0.6"/><rect x="579.6" y="582.0" width="1.5" height="4" fill="#111"/><rect x="451.8" y="624" width="46.69999999999999" height="17.799999999999955" rx="2.3" fill="#43699a" stroke="#1c1c1c" stroke-width="0.8"/><circle cx="451.8" cy="632.9" r="1.6" fill="#7e8fd8" stroke="#222" stroke-width="0.5"/><circle cx="451.8" cy="637.5" r="1.6" fill="#8a9298" stroke="#222" stroke-width="0.5"/><circle cx="498.5" cy="632.9" r="1.6" fill="#7e8fd8" stroke="#222" stroke-width="0.5"/><rect x="457.4" y="640.4" width="2.3" height="3.6" fill="#8a9298" stroke="#222" stroke-width="0.4"/><rect x="463.9" y="640.4" width="2.3" height="3.6" fill="#8a9298" stroke="#222" stroke-width="0.4"/><rect x="454.8" y="627.0" width="23.3" height="2" fill="#e8e8e8" opacity="0.7"/><rect x="454.8" y="630.5" width="14.0" height="1.2" fill="#222" opacity="0.6"/><rect x="492.5" y="626.0" width="1.5" height="4" fill="#111"/><rect x="741" y="607.5999999999999" width="47.5" height="23.40000000000009" rx="3.0" fill="#3f8b8c" stroke="#1c1c1c" stroke-width="1.1"/><circle cx="741" cy="619.3" r="2.1" fill="#7e8fd8" stroke="#222" stroke-width="0.5"/><circle cx="741" cy="625.4" r="2.1" fill="#8a9298" stroke="#222" stroke-width="0.5"/><circle cx="788.5" cy="619.3" r="2.1" fill="#7e8fd8" stroke="#222" stroke-width="0.5"/><rect x="746.7" y="629.1" width="3.0" height="4.7" fill="#8a9298" stroke="#222" stroke-width="0.4"/><rect x="753.4" y="629.1" width="3.0" height="4.7" fill="#8a9298" stroke="#222" stroke-width="0.4"/><rect x="744.0" y="610.6" width="23.8" height="2" fill="#e8e8e8" opacity="0.7"/><rect x="744.0" y="614.1" width="14.2" height="1.2" fill="#222" opacity="0.6"/><rect x="782.5" y="609.6" width="1.5" height="4" fill="#111"/><rect x="285" y="660.5999999999999" width="47" height="17.40000000000009" rx="2.3" fill="#43699a" stroke="#1c1c1c" stroke-width="0.8"/><circle cx="285" cy="669.3" r="1.6" fill="#7e8fd8" stroke="#222" stroke-width="0.5"/><circle cx="285" cy="673.8" r="1.6" fill="#8a9298" stroke="#222" stroke-width="0.5"/><circle cx="332" cy="669.3" r="1.6" fill="#7e8fd8" stroke="#222" stroke-width="0.5"/><rect x="290.6" y="676.6" width="2.3" height="3.5" fill="#8a9298" stroke="#222" stroke-width="0.4"/><rect x="297.2" y="676.6" width="2.3" height="3.5" fill="#8a9298" stroke="#222" stroke-width="0.4"/><rect x="288.0" y="663.6" width="23.5" height="2" fill="#e8e8e8" opacity="0.7"/><rect x="288.0" y="667.1" width="14.1" height="1.2" fill="#222" opacity="0.6"/><rect x="326.0" y="662.6" width="1.5" height="4" fill="#111"/><rect x="379" y="665.5" width="47.69999999999999" height="24.5" rx="3.2" fill="#3f8b8c" stroke="#1c1c1c" stroke-width="1.1"/><circle cx="379" cy="677.8" r="2.2" fill="#7e8fd8" stroke="#222" stroke-width="0.5"/><circle cx="379" cy="684.1" r="2.2" fill="#8a9298" stroke="#222" stroke-width="0.5"/><circle cx="426.7" cy="677.8" r="2.2" fill="#7e8fd8" stroke="#222" stroke-width="0.5"/><rect x="384.7" y="688.0" width="3.2" height="4.9" fill="#8a9298" stroke="#222" stroke-width="0.4"/><rect x="391.4" y="688.0" width="3.2" height="4.9" fill="#8a9298" stroke="#222" stroke-width="0.4"/><rect x="382.0" y="668.5" width="23.8" height="2" fill="#e8e8e8" opacity="0.7"/><rect x="382.0" y="672.0" width="14.3" height="1.2" fill="#222" opacity="0.6"/><rect x="420.7" y="667.5" width="1.5" height="4" fill="#111"/><rect x="538" y="660.5999999999999" width="47.60000000000002" height="23.700000000000045" rx="3.1" fill="#5b8b54" stroke="#1c1c1c" stroke-width="1.1"/><circle cx="538" cy="672.4" r="2.1" fill="#7e8fd8" stroke="#222" stroke-width="0.5"/><circle cx="538" cy="678.6" r="2.1" fill="#8a9298" stroke="#222" stroke-width="0.5"/><circle cx="585.6" cy="672.4" r="2.1" fill="#7e8fd8" stroke="#222" stroke-width="0.5"/><rect x="543.7" y="682.4" width="3.1" height="4.7" fill="#8a9298" stroke="#222" stroke-width="0.4"/><rect x="550.4" y="682.4" width="3.1" height="4.7" fill="#8a9298" stroke="#222" stroke-width="0.4"/><rect x="541.0" y="663.6" width="23.8" height="2" fill="#e8e8e8" opacity="0.7"/><rect x="541.0" y="667.1" width="14.3" height="1.2" fill="#222" opacity="0.6"/><rect x="579.6" y="662.6" width="1.5" height="4" fill="#111"/><rect x="448" y="701" width="47" height="17.5" rx="2.3" fill="#43699a" stroke="#1c1c1c" stroke-width="0.8"/><circle cx="448" cy="709.8" r="1.6" fill="#7e8fd8" stroke="#222" stroke-width="0.5"/><circle cx="448" cy="714.3" r="1.6" fill="#8a9298" stroke="#222" stroke-width="0.5"/><circle cx="495" cy="709.8" r="1.6" fill="#7e8fd8" stroke="#222" stroke-width="0.5"/><rect x="453.6" y="717.1" width="2.3" height="3.5" fill="#8a9298" stroke="#222" stroke-width="0.4"/><rect x="460.2" y="717.1" width="2.3" height="3.5" fill="#8a9298" stroke="#222" stroke-width="0.4"/><rect x="451.0" y="704.0" width="23.5" height="2" fill="#e8e8e8" opacity="0.7"/><rect x="451.0" y="707.5" width="14.1" height="1.2" fill="#222" opacity="0.6"/><rect x="489.0" y="703.0" width="1.5" height="4" fill="#111"/><rect x="739" y="671.8" width="47" height="24.200000000000045" rx="3.1" fill="#3f8b8c" stroke="#1c1c1c" stroke-width="1.1"/><circle cx="739" cy="683.9" r="2.2" fill="#7e8fd8" stroke="#222" stroke-width="0.5"/><circle cx="739" cy="690.2" r="2.2" fill="#8a9298" stroke="#222" stroke-width="0.5"/><circle cx="786" cy="683.9" r="2.2" fill="#7e8fd8" stroke="#222" stroke-width="0.5"/><rect x="744.6" y="694.1" width="3.1" height="4.8" fill="#8a9298" stroke="#222" stroke-width="0.4"/><rect x="751.2" y="694.1" width="3.1" height="4.8" fill="#8a9298" stroke="#222" stroke-width="0.4"/><rect x="742.0" y="674.8" width="23.5" height="2" fill="#e8e8e8" opacity="0.7"/><rect x="742.0" y="678.3" width="14.1" height="1.2" fill="#222" opacity="0.6"/><rect x="780.0" y="673.8" width="1.5" height="4" fill="#111"/><rect x="286.6" y="753" width="46.69999999999999" height="17.700000000000045" rx="2.3" fill="#43699a" stroke="#1c1c1c" stroke-width="0.8"/><circle cx="286.6" cy="761.9" r="1.6" fill="#7e8fd8" stroke="#222" stroke-width="0.5"/><circle cx="286.6" cy="766.5" r="1.6" fill="#8a9298" stroke="#222" stroke-width="0.5"/><circle cx="333.3" cy="761.9" r="1.6" fill="#7e8fd8" stroke="#222" stroke-width="0.5"/><rect x="292.2" y="769.3" width="2.3" height="3.5" fill="#8a9298" stroke="#222" stroke-width="0.4"/><rect x="298.7" y="769.3" width="2.3" height="3.5" fill="#8a9298" stroke="#222" stroke-width="0.4"/><rect x="289.6" y="756.0" width="23.3" height="2" fill="#e8e8e8" opacity="0.7"/><rect x="289.6" y="759.5" width="14.0" height="1.2" fill="#222" opacity="0.6"/><rect x="327.3" y="755.0" width="1.5" height="4" fill="#111"/><rect x="396" y="756.8" width="46.69999999999999" height="25.200000000000045" rx="3.3" fill="#3f8b8c" stroke="#1c1c1c" stroke-width="1.1"/><circle cx="396" cy="769.4" r="2.3" fill="#7e8fd8" stroke="#222" stroke-width="0.5"/><circle cx="396" cy="776.0" r="2.3" fill="#8a9298" stroke="#222" stroke-width="0.5"/><circle cx="442.7" cy="769.4" r="2.3" fill="#7e8fd8" stroke="#222" stroke-width="0.5"/><rect x="401.6" y="780.0" width="3.3" height="5.0" fill="#8a9298" stroke="#222" stroke-width="0.4"/><rect x="408.1" y="780.0" width="3.3" height="5.0" fill="#8a9298" stroke="#222" stroke-width="0.4"/><rect x="399.0" y="759.8" width="23.3" height="2" fill="#e8e8e8" opacity="0.7"/><rect x="399.0" y="763.3" width="14.0" height="1.2" fill="#222" opacity="0.6"/><rect x="436.7" y="758.8" width="1.5" height="4" fill="#111"/><rect x="533" y="729.5999999999999" width="47" height="24.40000000000009" rx="3.2" fill="#5b8b54" stroke="#1c1c1c" stroke-width="1.1"/><circle cx="533" cy="741.8" r="2.2" fill="#7e8fd8" stroke="#222" stroke-width="0.5"/><circle cx="533" cy="748.1" r="2.2" fill="#8a9298" stroke="#222" stroke-width="0.5"/><circle cx="580" cy="741.8" r="2.2" fill="#7e8fd8" stroke="#222" stroke-width="0.5"/><rect x="538.6" y="752.0" width="3.2" height="4.9" fill="#8a9298" stroke="#222" stroke-width="0.4"/><rect x="545.2" y="752.0" width="3.2" height="4.9" fill="#8a9298" stroke="#222" stroke-width="0.4"/><rect x="536.0" y="732.6" width="23.5" height="2" fill="#e8e8e8" opacity="0.7"/><rect x="536.0" y="736.1" width="14.1" height="1.2" fill="#222" opacity="0.6"/><rect x="574.0" y="731.6" width="1.5" height="4" fill="#111"/></svg>
<div class="t" style="left:582px;top:1109px;font-size:24px;line-height:27px;color:#ff8c1a;letter-spacing:0.45px;">Instanciando cada conjunto de
pena sobre cada Guide Set</div>
<div class="t" style="left:813px;top:1303.5px;font-size:24px;line-height:27px;color:#1a8cff;letter-spacing:0.2px;">Modificamos os
parametros das penas</div>
<div class="a" style="left:1065px;top:1080px;width:847px;height:1px;background:#474747;"></div>
<svg class="a" style="left:1078.6px;top:1085px;" width="768" height="264" viewBox="0 0 768 264"><rect width="768" height="264" fill="#5b4632"/><defs><pattern id="g79759" width="21.2" height="21.2" patternUnits="userSpaceOnUse" x="0" y="0"><path d="M21.2 0 L0 0 0 21.2" fill="none" stroke="#4c3a28" stroke-width="1.6"/></pattern></defs><rect width="768" height="264" fill="url(#g79759)"/><rect width="768" height="4" fill="#7a5c42"/><rect x="767" width="1" height="264" fill="#8a6a4a"/><rect y="261" width="768" height="3" fill="#2e2e2e"/><path d="M208.4,87.0 C256.4,87.0 256.4,114.0 304.4,114.0" stroke="#b89c9c" stroke-width="2" fill="none"/><path d="M99.40000000000009,262 C151.4000000000001,165 221.4000000000001,127 304.4000000000001,127" stroke="#b89c9c" stroke-width="2" fill="none"/><path d="M401.4,114.0 C507.4,114.0 507.4,148.0 613.4,148.0" stroke="#b89c9c" stroke-width="2" fill="none"/><path d="M423.4,227.0 C518.4,227.0 518.4,161.0 613.4,161.0" stroke="#b89c9c" stroke-width="2" fill="none"/><path d="M711.4,148.0 C739.9,148.0 739.9,151.0 768.4,151.0" stroke="#b89c9c" stroke-width="2" fill="none"/><rect x="110.4" y="62.7" width="98.0" height="36.1" rx="5" fill="#6b7b82" stroke="#161616" stroke-width="2"/><text x="118.4" y="75.7" font-size="10" font-weight="bold" fill="#f4f4f4" font-family="Liberation Sans" letter-spacing="-0.2">GSET_Large_Tip_R</text><text x="118.4" y="85.7" font-size="8.5" fill="#2a2a2a" font-family="Liberation Sans">import</text><circle cx="208.4" cy="80.8" r="4" fill="#a48c8c" stroke="#222"/><rect x="124.4" y="95.8" width="7" height="10" rx="1" fill="#a88c70" stroke="#222"/><rect x="138.4" y="95.8" width="7" height="10" rx="1" fill="#a88c70" stroke="#222"/><text x="196.4" y="76.7" font-size="10" font-weight="bold" fill="#111" font-family="Liberation Sans" text-anchor="middle">↖</text><rect x="304.4" y="90.5" width="97.0" height="48.5" rx="5" fill="#6aa881" stroke="#161616" stroke-width="2"/><text x="312.4" y="103.5" font-size="10" font-weight="bold" fill="#f4f4f4" font-family="Liberation Sans" letter-spacing="-0.2">convert0</text><text x="312.4" y="113.5" font-size="8.5" fill="#2a2a2a" font-family="Liberation Sans">convert</text><circle cx="304.4" cy="114.8" r="4" fill="#a48c8c" stroke="#222"/><circle cx="304.4" cy="127.8" r="4" fill="#a48c8c" stroke="#222"/><circle cx="401.4" cy="114.8" r="4" fill="#a48c8c" stroke="#222"/><rect x="318.4" y="136.0" width="7" height="10" rx="1" fill="#a88c70" stroke="#222"/><rect x="332.4" y="136.0" width="7" height="10" rx="1" fill="#a88c70" stroke="#222"/><text x="389.4" y="104.5" font-size="10" font-weight="bold" fill="#111" font-family="Liberation Sans" text-anchor="middle">↻</text><rect x="613.4" y="124.0" width="98.0" height="48.6" rx="5" fill="#8ea24f" stroke="#161616" stroke-width="2"/><text x="621.4" y="137.0" font-size="10" font-weight="bold" fill="#f4f4f4" font-family="Liberation Sans" letter-spacing="-0.2">instance0</text><text x="621.4" y="147.0" font-size="8.5" fill="#2a2a2a" font-family="Liberation Sans">instance</text><circle cx="613.4" cy="148.3" r="4" fill="#a48c8c" stroke="#222"/><circle cx="613.4" cy="161.3" r="4" fill="#a48c8c" stroke="#222"/><circle cx="711.4" cy="148.3" r="4" fill="#a48c8c" stroke="#222"/><rect x="627.4" y="169.6" width="7" height="10" rx="1" fill="#3ddc3d" stroke="#222"/><rect x="641.4" y="169.6" width="7" height="10" rx="1" fill="#a88c70" stroke="#222"/><text x="699.4" y="138.0" font-size="10" font-weight="bold" fill="#111" font-family="Liberation Sans" text-anchor="middle">▮</text><rect x="326.4" y="202.0" width="97.0" height="36.7" rx="5" fill="#6b7b82" stroke="#161616" stroke-width="2"/><text x="334.4" y="215.0" font-size="10" font-weight="bold" fill="#f4f4f4" font-family="Liberation Sans" letter-spacing="-0.2">F_Large_Tip</text><text x="334.4" y="225.0" font-size="8.5" fill="#2a2a2a" font-family="Liberation Sans">import</text><circle cx="423.4" cy="220.3" r="4" fill="#a48c8c" stroke="#222"/><rect x="340.4" y="235.7" width="7" height="10" rx="1" fill="#a88c70" stroke="#222"/><rect x="354.4" y="235.7" width="7" height="10" rx="1" fill="#a88c70" stroke="#222"/><text x="411.4" y="216.0" font-size="10" font-weight="bold" fill="#111" font-family="Liberation Sans" text-anchor="middle">↖</text></svg>
<svg class="a" style="left:1436px;top:1358px;" width="476" height="394" viewBox="0 0 476 394"><defs><linearGradient id="fb" x1="0" y1="0" x2="1" y2="1"><stop offset="0" stop-color="#8a7670"/><stop offset="1" stop-color="#a08c86"/></linearGradient><linearGradient id="bd2" x1="0" y1="0" x2="0" y2="1"><stop offset="0" stop-color="#c4c4c4"/><stop offset="1" stop-color="#9a9a9a"/></linearGradient></defs><rect width="476" height="394" fill="#5e5e5e"/><defs><filter id="wbl"><feGaussianBlur stdDeviation="3"/></filter></defs><path d="M42.0,26.0 C54.0,27.0 69.0,29.0 80.0,34.0 C85.0,36.0 84.0,39.0 80.0,42.0 C72.0,48.0 64.0,52.0 58.0,57.0 C74.0,67.0 89.0,75.0 101.0,81.0 C119.0,90.0 140.0,99.0 140.0,99.0 C159.0,107.0 176.0,112.0 182.0,116.0 C186.0,122.0 176.0,127.0 166.0,129.0 C144.0,133.0 124.0,136.0 104.0,137.0 C84.0,138.0 64.0,137.0 42.0,133.0Z" fill="url(#bd2)" stroke="#3a3a3a" stroke-width="0.8"/><path d="M127.7,130.8 Q102.7,136.2 108.5,154.9 Q240.6,314.0 440.0,389.0 Q294.2,247.0 127.7,130.8Z" fill="#978781" stroke="#6e5e5a" stroke-width="0.8"/><path d="M123.6,136.0 Q272.2,274.5 432.0,381.0" stroke="#5fe08a" stroke-width="1.3" fill="none"/><path d="M165.3,123.7 Q144.4,128.2 150.0,143.8 Q268.4,276.5 440.0,339.0 Q310.8,220.6 165.3,123.7Z" fill="#978781" stroke="#6e5e5a" stroke-width="0.8"/><path d="M162.0,128.0 Q293.4,243.5 432.0,331.0" stroke="#5fe08a" stroke-width="1.3" fill="none"/><path d="M187.1,118.3 Q170.3,123.2 175.4,135.7 Q276.1,237.4 417.7,278.0 Q308.7,188.8 187.1,118.3Z" fill="#978781" stroke="#6e5e5a" stroke-width="0.8"/><path d="M184.6,122.0 Q295.3,208.7 409.7,270.0" stroke="#5fe08a" stroke-width="1.3" fill="none"/></svg>
<div class="a" style="left:1081px;top:1364px;width:397px;height:623px;background:#313131;"></div>
<div class="a" style="left:1081px;top:1364px;width:397px;height:28px;background:#f2f2f2;border:1px solid #fff;box-sizing:border-box;"></div>
<div class="a" style="left:1277px;top:1529px;width:97px;height:34px;background:#3a3b3c;border-radius:5px;opacity:0.55;"></div>
<div class="a" style="left:1283px;top:1761px;width:96px;height:31px;background:#3a3b3c;border-radius:5px;opacity:0.55;"></div>
<div class="a" style="left:1287px;top:1962px;width:98px;height:24px;background:#3a3b3c;border-radius:5px;opacity:0.55;"></div>
<div class="a" style="left:1455px;top:1598px;width:23px;height:52px;background:#3a3b3c;border-radius:5px;opacity:0.55;"></div>
<div class="a" style="left:1462px;top:1693px;width:16px;height:42px;background:#3a3b3c;border-radius:5px;opacity:0.55;"></div>
<div class="a" style="left:1455px;top:1960px;width:23px;height:26px;background:#3a3b3c;border-radius:5px;opacity:0.55;"></div>
<svg class="a" style="left:1081px;top:1392px;" width="397" height="595" viewBox="0 0 397 595"><path d="M10 590 C60 400 150 200 380 130" stroke="#3c3c3c" stroke-width="1.5" fill="none"/><path d="M300 190 C330 200 360 230 380 250" stroke="#3c3c3c" stroke-width="1.5" fill="none"/></svg>
<div class="t" style="left:1089px;top:1370.1px;font-size:13px;color:#111;">Yeti - Node Inspector - instance0</div>
<div class="a" style="left:1461px;top:1369px;width:17px;height:19px;background:#c9443f;"></div>
<div class="t" style="left:1469.5px;transform:translateX(-50%);top:1372.2px;font-size:11px;color:#fff;font-weight:bold;">x</div>
<svg class="a" style="left:1117px;top:1423px;" width="18" height="22" viewBox="0 0 18 22"><ellipse cx="9" cy="4" rx="7" ry="3" fill="#444" stroke="#666"/><path d="M2 4 V17 A7 3 0 0 0 16 17 V4" fill="#1a1a1a"/></svg>
<div class="t" style="left:1160px;top:1428.2px;font-size:11px;color:#d0d0d0;">Name</div>
<div class="a" style="left:1191px;top:1425px;width:221px;height:18px;background:#333;border:1px solid #9a9a9a;border-radius:3px;box-sizing:border-box;"></div>
<div class="t" style="left:1195px;top:1428.4px;font-size:10.5px;color:#e8e8e8;">instance0</div>
<div class="a" style="left:1429px;top:1422px;width:25px;height:25px;background:#3a3a3a;border-radius:50%;"></div>
<div class="t" style="left:1441.5px;transform:translateX(-50%);top:1427.0px;font-size:15px;color:#262626;font-weight:bold;">?</div>
<div class="a" style="left:1092px;top:1477px;width:61px;height:20px;background:#5f5f5f;"></div>
<div class="a" style="left:1153px;top:1477px;width:57px;height:20px;background:#373737;"></div>
<div class="a" style="left:1210px;top:1477px;width:63px;height:20px;background:#373737;"></div>
<div class="a" style="left:1274px;top:1477px;width:64px;height:20px;background:#373737;"></div>
<div class="t" style="left:1122.5px;transform:translateX(-50%);top:1481.4px;font-size:10.5px;color:#e8e8e8;">Instance</div>
<div class="t" style="left:1181.5px;transform:translateX(-50%);top:1481.9px;font-size:10.5px;color:#bdbdbd;">Objects</div>
<div class="t" style="left:1241.5px;transform:translateX(-50%);top:1481.9px;font-size:10.5px;color:#bdbdbd;">Selection</div>
<div class="t" style="left:1306px;transform:translateX(-50%);top:1481.9px;font-size:10.5px;color:#bdbdbd;">Common</div>
<div class="t" style="left:1112px;top:1521.2px;font-size:10px;color:#d2d2d2;">Instance To</div>
<div class="a" style="left:1284px;top:1517px;width:166px;height:18px;background:#333;border:1px solid #aaa;border-radius:3px;box-sizing:border-box;"></div>
<div class="t" style="left:1288px;top:1520.4px;font-size:10.5px;color:#e0e0e0;">Elements</div>
<div class="a" style="left:1428px;top:1519px;width:20px;height:14px;background:#2a2a2a;border:1px solid #111;box-sizing:border-box;"></div>
<svg class="a" style="left:1433px;top:1523.0px;" width="10" height="6" viewBox="0 0 10 6"><path d="M0 0 L10 0 L5 6Z" fill="#ddd"/></svg>
<div class="t" style="left:1112px;top:1562.7px;font-size:10px;color:#d2d2d2;">Alignment</div>
<div class="a" style="left:1162.5px;top:1559px;width:287.5px;height:18px;background:#333;border:1px solid #9a9a9a;border-radius:3px;box-sizing:border-box;"></div>
<div class="t" style="left:1166.5px;top:1562.4px;font-size:10.5px;color:#ddd;">$N</div>
<div class="t" style="left:1112px;top:1610.7px;font-size:10px;color:#d2d2d2;">Alignment Variation</div>
<div class="a" style="left:1203px;top:1607px;width:60px;height:18px;background:#333;border:1px solid #9a9a9a;border-radius:3px;box-sizing:border-box;"></div>
<div class="t" style="left:1207px;top:1610.4px;font-size:10.5px;color:#ddd;">0</div>
<div class="a" style="left:1279px;top:1611px;width:142px;height:10px;background:#2f2f2f;border:1px solid #aaa;border-radius:4px;box-sizing:border-box;"></div>
<div class="a" style="left:1281px;top:1610px;width:20px;height:12px;background:linear-gradient(#d0d0d0,#8a8a8a);border-radius:2px;"></div>
<div class="a" style="left:1440px;top:1610px;width:10px;height:11px;background:transparent;border:1px solid #555;box-sizing:border-box;"></div>
<div class="t" style="left:1112px;top:1658.7px;font-size:10px;color:#d2d2d2;">Offset</div>
<div class="a" style="left:1143px;top:1655px;width:307px;height:18px;background:#333;border:1px solid #9a9a9a;border-radius:3px;box-sizing:border-box;"></div>
<div class="t" style="left:1147px;top:1658.4px;font-size:10.5px;color:#ddd;">[0, 0, 0]</div>
<div class="t" style="left:1112px;top:1701.2px;font-size:10px;color:#d2d2d2;">Scale</div>
<div class="a" style="left:1139px;top:1697px;width:311px;height:18px;background:#333;border:1px solid #9a9a9a;border-radius:3px;box-sizing:border-box;"></div>
<div class="t" style="left:1143px;top:1700.4px;font-size:10.5px;color:#ddd;">[ .8, length * .56, -.35]</div>
<div class="t" style="left:1112px;top:1749.1px;font-size:10px;color:#d2d2d2;">Scale Variation</div>
<div class="a" style="left:1180px;top:1745px;width:60px;height:18px;background:#333;border:1px solid #9a9a9a;border-radius:3px;box-sizing:border-box;"></div>
<div class="t" style="left:1184px;top:1748.4px;font-size:10.5px;color:#ddd;">0</div>
<div class="a" style="left:1256px;top:1749px;width:165px;height:10px;background:#2f2f2f;border:1px solid #aaa;border-radius:4px;box-sizing:border-box;"></div>
<div class="a" style="left:1257px;top:1748px;width:21px;height:12px;background:linear-gradient(#d0d0d0,#8a8a8a);border-radius:2px;"></div>
<div class="a" style="left:1440px;top:1748px;width:10px;height:11px;background:transparent;border:1px solid #555;box-sizing:border-box;"></div>
<div class="t" style="left:1112px;top:1803.3px;font-size:10px;color:#d2d2d2;">Twist</div>
<div class="a" style="left:1138px;top:1799px;width:60px;height:18px;background:#333;border:1px solid #9a9a9a;border-radius:3px;box-sizing:border-box;"></div>
<div class="t" style="left:1142px;top:1802.4px;font-size:10.5px;color:#ddd;">0</div>
<div class="a" style="left:1214px;top:1803px;width:207px;height:10px;background:#2f2f2f;border:1px solid #aaa;border-radius:4px;box-sizing:border-box;"></div>
<div class="a" style="left:1307px;top:1802px;width:21px;height:12px;background:linear-gradient(#d0d0d0,#8a8a8a);border-radius:2px;"></div>
<div class="a" style="left:1440px;top:1802px;width:10px;height:11px;background:transparent;border:1px solid #555;box-sizing:border-box;"></div>
<div class="t" style="left:1112px;top:1857.2px;font-size:10px;color:#d2d2d2;">Twist Variation</div>
<div class="a" style="left:1179px;top:1853px;width:60px;height:18px;background:#333;border:1px solid #9a9a9a;border-radius:3px;box-sizing:border-box;"></div>
<div class="t" style="left:1183px;top:1856.4px;font-size:10.5px;color:#ddd;">.05</div>
<div class="a" style="left:1255px;top:1857px;width:166px;height:10px;background:#2f2f2f;border:1px solid #aaa;border-radius:4px;box-sizing:border-box;"></div>
<div class="a" style="left:1264px;top:1856px;width:20px;height:12px;background:linear-gradient(#d0d0d0,#8a8a8a);border-radius:2px;"></div>
<div class="a" style="left:1440px;top:1856px;width:10px;height:11px;background:transparent;border:1px solid #555;box-sizing:border-box;"></div>
<div class="a" style="left:1097px;top:1891px;width:366px;height:39px;background:#5c0a0a;"></div>
<div class="t" style="left:1112px;top:1905.3px;font-size:10px;color:#ff5a5a;">Up Vector</div>
<div class="a" style="left:1161px;top:1902px;width:289px;height:17px;background:#600c0c;border:1px solid #e05050;border-radius:3px;box-sizing:border-box;"></div>
<div class="t" style="left:1165px;top:1904.9px;font-size:10.5px;color:#ff6a6a;">[ baseAttraction , tipAttraction , attractionBias ]</div>
<div class="t" style="left:1112px;top:1947.5px;font-size:10px;color:#d2d2d2;">Axis Of Alignment</div>
<div class="a" style="left:1284px;top:1943.5px;width:166px;height:17.5px;background:#333;border:1px solid #aaa;border-radius:3px;box-sizing:border-box;"></div>
<div class="t" style="left:1288px;top:1946.7px;font-size:10.5px;color:#e0e0e0;">Y</div>
<div class="a" style="left:1428px;top:1945.5px;width:20px;height:13.5px;background:#2a2a2a;border:1px solid #111;box-sizing:border-box;"></div>
<svg class="a" style="left:1433px;top:1949.25px;" width="10" height="6" viewBox="0 0 10 6"><path d="M0 0 L10 0 L5 6Z" fill="#ddd"/></svg>
<div class="t" style="left:1489px;top:1764px;font-size:22px;line-height:27.3px;color:#ff0000;letter-spacing:1.1px;">Cada curva possui seu proprio Up
Vector customizado. Estes valores
são passados atraves dos
parametros baseAttraction,
tipAttraction e attractionBias, que
nao estam sendo usados.
Então cada pena recebe um Up
Vector proprio vindo diretamente do
Rig</div>
<div class="a" style="left:14px;top:1861px;width:457px;height:11px;background:#333333;"></div>
<svg class="a" style="left:16px;top:1872px;" width="455" height="473" viewBox="0 0 455 473"><rect width="455" height="473" fill="#394c5b"/><defs><pattern id="g34814" width="19.1" height="19.1" patternUnits="userSpaceOnUse" x="0" y="0"><path d="M19.1 0 L0 0 0 19.1" fill="none" stroke="#33424f" stroke-width="1.6"/></pattern></defs><rect width="455" height="473" fill="url(#g34814)"/><path d="M0,103 C9,113 14,119 24.6,119" stroke="#7b87d6" stroke-width="1.8" fill="none"/><path d="M113.0,119.0 C141.5,119.0 141.5,234.0 170.0,234.0" stroke="#7b87d6" stroke-width="1.8" fill="none"/><path d="M134.0,380.0 C159.0,380.0 145.0,245.5 170.0,245.5" stroke="#7b87d6" stroke-width="1.8" fill="none"/><path d="M17,473 C22,418 29,380 45.6,380" stroke="#7b87d6" stroke-width="1.8" fill="none"/><path d="M259.0,234.0 C298.0,234.0 298.0,62.0 337.0,62.0" stroke="#7b87d6" stroke-width="1.8" fill="none"/><path d="M388,84 L372,106" stroke="#7b87d6" stroke-width="1.8"/><path d="M388,150.5999999999999 L372,177.5" stroke="#7b87d6" stroke-width="1.8"/><path d="M388,222 L372,245" stroke="#7b87d6" stroke-width="1.8"/><path d="M388,290 L372,315.6999999999998" stroke="#7b87d6" stroke-width="1.8"/><path d="M388,360 L372,385" stroke="#7b87d6" stroke-width="1.8"/><path d="M455,0 L454,1" stroke="#7b87d6"/><rect x="24.6" y="96.8" width="88.4" height="44.2" rx="6" fill="#4aadc6" stroke="#16262c" stroke-width="2"/><text x="32.6" y="109.8" font-size="10.5" font-weight="bold" fill="#f4f8fa" font-family="Liberation Sans">attribute021111</text><text x="32.6" y="118.8" font-size="8.5" fill="#1a4a58" font-family="Liberation Sans">attribute</text><text x="103.0" y="111.8" font-size="12" font-weight="bold" fill="#111" font-family="Liberation Sans" text-anchor="middle">!</text><circle cx="24.6" cy="118.9" r="4" fill="#7b87d6" stroke="#222"/><circle cx="24.6" cy="130.4" r="4" fill="#8a949a" stroke="#222"/><circle cx="113.0" cy="118.9" r="4" fill="#7b87d6" stroke="#222"/><rect x="35.6" y="138.0" width="6" height="9" rx="1" fill="#8a949a" stroke="#222"/><rect x="48.6" y="138.0" width="6" height="9" rx="1" fill="#8a949a" stroke="#222"/><rect x="170.0" y="212.0" width="89.0" height="44.0" rx="6" fill="#4aadc6" stroke="#16262c" stroke-width="2"/><text x="178.0" y="225.0" font-size="10.5" font-weight="bold" fill="#f4f8fa" font-family="Liberation Sans">merge3</text><text x="178.0" y="234.0" font-size="8.5" fill="#1a4a58" font-family="Liberation Sans">merge</text><text x="249.0" y="227.0" font-size="12" font-weight="bold" fill="#111" font-family="Liberation Sans" text-anchor="middle">↥</text><circle cx="170.0" cy="234.0" r="4" fill="#7b87d6" stroke="#222"/><circle cx="170.0" cy="245.5" r="4" fill="#8a949a" stroke="#222"/><circle cx="259.0" cy="234.0" r="4" fill="#7b87d6" stroke="#222"/><rect x="181.0" y="253.0" width="6" height="9" rx="1" fill="#8a949a" stroke="#222"/><rect x="194.0" y="253.0" width="6" height="9" rx="1" fill="#8a949a" stroke="#222"/><rect x="45.6" y="358.0" width="88.4" height="44.0" rx="6" fill="#4aadc6" stroke="#16262c" stroke-width="2"/><text x="53.6" y="371.0" font-size="10.5" font-weight="bold" fill="#f4f8fa" font-family="Liberation Sans">attribute02111</text><text x="53.6" y="380.0" font-size="8.5" fill="#1a4a58" font-family="Liberation Sans">attribute</text><text x="124.0" y="373.0" font-size="12" font-weight="bold" fill="#111" font-family="Liberation Sans" text-anchor="middle">!</text><circle cx="45.6" cy="380.0" r="4" fill="#7b87d6" stroke="#222"/><circle cx="45.6" cy="391.5" r="4" fill="#8a949a" stroke="#222"/><circle cx="134.0" cy="380.0" r="4" fill="#7b87d6" stroke="#222"/><rect x="56.6" y="399.0" width="6" height="9" rx="1" fill="#8a949a" stroke="#222"/><rect x="69.6" y="399.0" width="6" height="9" rx="1" fill="#8a949a" stroke="#222"/><rect x="337.0" y="39.6" width="89.5" height="44.4" rx="6" fill="#4aadc6" stroke="#16262c" stroke-width="2"/><text x="345.0" y="52.6" font-size="10.5" font-weight="bold" fill="#f4f8fa" font-family="Liberation Sans">variation</text><text x="345.0" y="61.6" font-size="8.5" fill="#1a4a58" font-family="Liberation Sans">attribute</text><text x="416.5" y="54.6" font-size="12" font-weight="bold" fill="#111" font-family="Liberation Sans" text-anchor="middle">!</text><circle cx="337.0" cy="61.8" r="4" fill="#7b87d6" stroke="#222"/><circle cx="337.0" cy="73.3" r="4" fill="#8a949a" stroke="#222"/><circle cx="426.5" cy="61.8" r="4" fill="#7b87d6" stroke="#222"/><rect x="348.0" y="81.0" width="6" height="9" rx="1" fill="#8a949a" stroke="#222"/><rect x="361.0" y="81.0" width="6" height="9" rx="1" fill="#8a949a" stroke="#222"/><rect x="340.0" y="106.0" width="88.6" height="44.6" rx="6" fill="#4aadc6" stroke="#16262c" stroke-width="2"/><text x="348.0" y="119.0" font-size="10.5" font-weight="bold" fill="#f4f8fa" font-family="Liberation Sans">tear_size</text><text x="348.0" y="128.0" font-size="8.5" fill="#1a4a58" font-family="Liberation Sans">attribute</text><text x="418.6" y="121.0" font-size="12" font-weight="bold" fill="#111" font-family="Liberation Sans" text-anchor="middle">!</text><circle cx="340.0" cy="128.3" r="4" fill="#7b87d6" stroke="#222"/><circle cx="340.0" cy="139.8" r="4" fill="#8a949a" stroke="#222"/><circle cx="428.6" cy="128.3" r="4" fill="#7b87d6" stroke="#222"/><rect x="351.0" y="147.6" width="6" height="9" rx="1" fill="#8a949a" stroke="#222"/><rect x="364.0" y="147.6" width="6" height="9" rx="1" fill="#8a949a" stroke="#222"/><rect x="342.0" y="177.5" width="89.0" height="44.5" rx="6" fill="#4aadc6" stroke="#16262c" stroke-width="2"/><text x="350.0" y="190.5" font-size="10.5" font-weight="bold" fill="#f4f8fa" font-family="Liberation Sans">tearing</text><text x="350.0" y="199.5" font-size="8.5" fill="#1a4a58" font-family="Liberation Sans">attribute</text><text x="421.0" y="192.5" font-size="12" font-weight="bold" fill="#111" font-family="Liberation Sans" text-anchor="middle">!</text><circle cx="342.0" cy="199.8" r="4" fill="#7b87d6" stroke="#222"/><circle cx="342.0" cy="211.2" r="4" fill="#8a949a" stroke="#222"/><circle cx="431.0" cy="199.8" r="4" fill="#7b87d6" stroke="#222"/><rect x="353.0" y="219.0" width="6" height="9" rx="1" fill="#8a949a" stroke="#222"/><rect x="366.0" y="219.0" width="6" height="9" rx="1" fill="#8a949a" stroke="#222"/><rect x="341.0" y="245.0" width="89.0" height="45.0" rx="6" fill="#4aadc6" stroke="#16262c" stroke-width="2"/><text x="349.0" y="258.0" font-size="10.5" font-weight="bold" fill="#f4f8fa" font-family="Liberation Sans">spacing1</text><text x="349.0" y="267.0" font-size="8.5" fill="#1a4a58" font-family="Liberation Sans">attribute</text><text x="420.0" y="260.0" font-size="12" font-weight="bold" fill="#111" font-family="Liberation Sans" text-anchor="middle">!</text><circle cx="341.0" cy="267.5" r="4" fill="#7b87d6" stroke="#222"/><circle cx="341.0" cy="279.0" r="4" fill="#8a949a" stroke="#222"/><circle cx="430.0" cy="267.5" r="4" fill="#7b87d6" stroke="#222"/><rect x="352.0" y="287.0" width="6" height="9" rx="1" fill="#8a949a" stroke="#222"/><rect x="365.0" y="287.0" width="6" height="9" rx="1" fill="#8a949a" stroke="#222"/><rect x="339.0" y="315.7" width="89.0" height="44.3" rx="6" fill="#4aadc6" stroke="#16262c" stroke-width="2"/><text x="347.0" y="328.7" font-size="10.5" font-weight="bold" fill="#f4f8fa" font-family="Liberation Sans">tip_width</text><text x="347.0" y="337.7" font-size="8.5" fill="#1a4a58" font-family="Liberation Sans">attribute</text><text x="418.0" y="330.7" font-size="12" font-weight="bold" fill="#111" font-family="Liberation Sans" text-anchor="middle">!</text><circle cx="339.0" cy="337.8" r="4" fill="#7b87d6" stroke="#222"/><circle cx="339.0" cy="349.3" r="4" fill="#8a949a" stroke="#222"/><circle cx="428.0" cy="337.8" r="4" fill="#7b87d6" stroke="#222"/><rect x="350.0" y="357.0" width="6" height="9" rx="1" fill="#8a949a" stroke="#222"/><rect x="363.0" y="357.0" width="6" height="9" rx="1" fill="#8a949a" stroke="#222"/><rect x="341.0" y="385.0" width="88.6" height="44.5" rx="6" fill="#4aadc6" stroke="#16262c" stroke-width="2"/><text x="349.0" y="398.0" font-size="10.5" font-weight="bold" fill="#f4f8fa" font-family="Liberation Sans">base_width1</text><text x="349.0" y="407.0" font-size="8.5" fill="#1a4a58" font-family="Liberation Sans">attribute</text><text x="419.6" y="400.0" font-size="12" font-weight="bold" fill="#111" font-family="Liberation Sans" text-anchor="middle">!</text><circle cx="341.0" cy="407.2" r="4" fill="#7b87d6" stroke="#222"/><circle cx="341.0" cy="418.8" r="4" fill="#8a949a" stroke="#222"/><circle cx="429.6" cy="407.2" r="4" fill="#7b87d6" stroke="#222"/><rect x="352.0" y="426.5" width="6" height="9" rx="1" fill="#32e032" stroke="#222"/><rect x="365.0" y="426.5" width="6" height="9" rx="1" fill="#8a949a" stroke="#222"/><rect x="0" y="471" width="455" height="2" fill="#2a2f33"/></svg>
<div class="a" style="left:479px;top:1955px;width:423px;height:381px;background:#2e2e2e;"></div>
<div class="a" style="left:893px;top:1955px;width:9px;height:381px;background:#383838;"></div>
<div class="a" style="left:493px;top:1925px;width:400px;height:30px;background:#f2f2f2;border:1px solid #fff;border-top:1px solid #3c8ede;box-sizing:border-box;"></div>
<div class="t" style="left:501px;top:1933.4px;font-size:12.5px;color:#111;">Yeti - Node Inspector - tearing</div>
<div class="a" style="left:873px;top:1932px;width:19px;height:18px;background:#c9443f;"></div>
<div class="t" style="left:882.5px;transform:translateX(-50%);top:1935.2px;font-size:11px;color:#fff;font-weight:bold;">x</div>
<div class="a" style="left:493px;top:1955px;width:400px;height:381px;background:#313131;"></div>
<div class="t" style="left:537px;transform:translateX(-50%);top:1987.4px;font-size:20px;color:#151515;font-weight:bold;">!</div>
<div class="t" style="left:572px;top:1991.7px;font-size:10px;color:#d0d0d0;">Name</div>
<div class="a" style="left:603px;top:1988px;width:221px;height:18px;background:#333;border:1px solid #9a9a9a;border-radius:3px;box-sizing:border-box;"></div>
<div class="t" style="left:607px;top:1991.7px;font-size:10px;color:#e8e8e8;">tearing</div>
<div class="a" style="left:841px;top:1986px;width:25px;height:24px;background:#3a3a3a;border-radius:50%;"></div>
<div class="t" style="left:853.5px;transform:translateX(-50%);top:1991.1px;font-size:14px;color:#262626;font-weight:bold;">?</div>
<div class="a" style="left:504px;top:2040px;width:61px;height:20px;background:#5f5f5f;"></div>
<div class="a" style="left:566px;top:2040px;width:63px;height:20px;background:#373737;"></div>
<div class="a" style="left:630px;top:2040px;width:68px;height:20px;background:#373737;"></div>
<div class="a" style="left:699px;top:2040px;width:63px;height:20px;background:#373737;"></div>
<div class="t" style="left:534.5px;transform:translateX(-50%);top:2044.7px;font-size:10px;color:#e8e8e8;">Attribute</div>
<div class="t" style="left:597.5px;transform:translateX(-50%);top:2045.2px;font-size:10px;color:#bdbdbd;">Mapping</div>
<div class="t" style="left:664px;transform:translateX(-50%);top:2045.2px;font-size:10px;color:#bdbdbd;">Geometric</div>
<div class="t" style="left:730.5px;transform:translateX(-50%);top:2045.2px;font-size:10px;color:#bdbdbd;">Common</div>
<div class="a" style="left:509px;top:2076px;width:375px;height:78px;background:#0d3a63;"></div>
<div class="t" style="left:524px;top:2083.7px;font-size:10px;color:#d8e4ee;">Attribute</div>
<div class="a" style="left:566px;top:2080px;width:295px;height:18px;background:#0d3a63;border:1px solid #6ab0e8;border-radius:3px;box-sizing:border-box;"></div>
<div class="t" style="left:570px;top:2083.7px;font-size:10px;color:#e0ecf6;">feather_barb_tearing</div>
<div class="t" style="left:524px;top:2125.7px;font-size:10px;color:#d8e4ee;">Default</div>
<div class="a" style="left:560px;top:2122px;width:301px;height:18px;background:#0d3a63;border:1px solid #6ab0e8;border-radius:3px;box-sizing:border-box;"></div>
<div class="t" style="left:564px;top:2125.7px;font-size:10px;color:#e0ecf6;">hash(id)*.25</div>
<div class="t" style="left:524px;top:2168.3px;font-size:10px;color:#d0d0d0;">Attribute Type</div>
<div class="a" style="left:696px;top:2164.5px;width:165px;height:17.5px;background:#333;border:1px solid #aaa;border-radius:3px;box-sizing:border-box;"></div>
<div class="t" style="left:700px;top:2167.9px;font-size:10px;color:#e0e0e0;">Float</div>
<div class="a" style="left:839px;top:2166.5px;width:20px;height:13.5px;background:#2a2a2a;border:1px solid #111;box-sizing:border-box;"></div>
<svg class="a" style="left:844px;top:2170.25px;" width="10" height="6" viewBox="0 0 10 6"><path d="M0 0 L10 0 L5 6Z" fill="#ddd"/></svg>
<div class="t" style="left:524px;top:2210.2px;font-size:10px;color:#d0d0d0;">Detail Type</div>
<div class="a" style="left:696px;top:2206.4px;width:165px;height:17.59999999999991px;background:#333;border:1px solid #aaa;border-radius:3px;box-sizing:border-box;"></div>
<div class="t" style="left:700px;top:2209.9px;font-size:10px;color:#e0e0e0;">Constant</div>
<div class="a" style="left:839px;top:2208.4px;width:20px;height:13.599999999999909px;background:#2a2a2a;border:1px solid #111;box-sizing:border-box;"></div>
<svg class="a" style="left:844px;top:2212.2px;" width="10" height="6" viewBox="0 0 10 6"><path d="M0 0 L10 0 L5 6Z" fill="#ddd"/></svg>
<div class="t" style="left:524px;top:2249.0px;font-size:10px;color:#d0d0d0;">Sample Groom</div>
<div class="a" style="left:595px;top:2248px;width:13px;height:13px;background:#313131;border:1px solid #555;box-sizing:border-box;"></div>
<div class="t" style="left:524px;top:2289.1px;font-size:10px;color:#d0d0d0;">Groom Attribute</div>
<div class="a" style="left:600px;top:2285px;width:261px;height:18px;background:#333;border:1px solid #9a9a9a;border-radius:3px;box-sizing:border-box;"></div>
<div class="t" style="left:904px;top:1990px;font-size:22px;line-height:27px;color:#ff00e0;letter-spacing:1.3px;">Cada curva receberá
uma pena, e cada
conjunto de pena é
agrupado em um
Guide Set. Existem
Guide Sets tanto para
o lado esquerdo
quanto direito, assim
como para as
superiores e
inferiores. Um Proxy
de planos também é
conectado a cada
curva, para auxiliar
na animação.</div>
<svg class="a" style="left:1156px;top:2040px;" width="751" height="385" viewBox="0 0 751 385"><defs><linearGradient id="cb" x1="0" y1="0" x2="1" y2="0"><stop offset="0" stop-color="#b0b0b0"/><stop offset="0.6" stop-color="#a6a6a6"/><stop offset="1" stop-color="#8a8a8a"/></linearGradient></defs><rect width="751" height="385" fill="#5e5e5e"/><path d="M0.0,0.0 L130.0,0.0 C139.0,10.0 144.0,18.0 150.0,23.0 C244.0,32.0 324.0,28.0 411.0,22.0 L444.0,160.0 L204.0,360.0 L185.0,385.0 L0.0,385.0Z" fill="url(#cb)"/><path d="M185.0,385.0 C204.0,355.0 224.0,340.0 234.0,330.0 C239.0,350.0 224.0,370.0 204.0,385.0Z" fill="#9a9a9a" stroke="#222" stroke-width="1.5"/><defs><filter id="cbl"><feGaussianBlur stdDeviation="8"/></filter></defs><ellipse cx="44" cy="260" rx="50" ry="140" fill="#a2a2a2" filter="url(#cbl)"/><path d="M126.0,1.0 C134.0,15.0 142.0,22.0 148.0,26.0 C244.0,32.0 324.0,28.0 404.0,20.0 L444.0,50.0 L384.0,110.0 L76.0,110.0 L76.0,37.0Z" fill="#b2b2b2"/><path d="M544.0,80.0 Q589.8,172.9 693.0,165.0 Q638.6,87.2 544.0,80.0Z" fill="#c4a2a2"/><path d="M544.0,80.0 Q623.5,114.5 693.0,165.0" stroke="#d020c0" stroke-width="1" fill="none"/><path d="M534.0,95.0 Q594.6,199.2 715.0,204.0 Q645.4,114.7 534.0,95.0Z" fill="#a86570"/><path d="M534.0,95.0 Q629.5,141.5 715.0,204.0" stroke="#d020c0" stroke-width="1" fill="none"/><path d="M519.0,105.0 Q587.5,217.0 718.0,231.0 Q640.2,133.7 519.0,105.0Z" fill="#c4a2a2"/><path d="M519.0,105.0 Q623.5,160.0 718.0,231.0" stroke="#d020c0" stroke-width="1" fill="none"/><path d="M504.0,110.0 Q571.5,234.8 709.6,267.6 Q631.5,156.6 504.0,110.0Z" fill="#a86570"/><path d="M504.0,110.0 Q611.8,180.8 709.6,267.6" stroke="#d020c0" stroke-width="1" fill="none"/><path d="M489.0,115.0 Q545.4,248.6 681.7,298.0 Q613.3,177.1 489.0,115.0Z" fill="#c4a2a2"/><path d="M489.0,115.0 Q590.3,198.5 681.7,298.0" stroke="#d020c0" stroke-width="1" fill="none"/><path d="M474.0,118.0 Q513.3,258.5 642.7,326.0 Q589.9,196.4 474.0,118.0Z" fill="#a86570"/><path d="M474.0,118.0 Q563.3,214.0 642.7,326.0" stroke="#d020c0" stroke-width="1" fill="none"/><path d="M456.0,120.0 Q475.0,261.8 592.8,343.0 Q559.0,210.3 456.0,120.0Z" fill="#c4a2a2"/><path d="M456.0,120.0 Q529.4,223.5 592.8,343.0" stroke="#d020c0" stroke-width="1" fill="none"/><path d="M439.0,120.0 Q434.8,255.9 537.0,345.6 Q525.2,216.6 439.0,120.0Z" fill="#a86570"/><path d="M439.0,120.0 Q493.0,224.8 537.0,345.6" stroke="#d020c0" stroke-width="1" fill="none"/><path d="M422.0,118.0 Q395.9,240.6 481.6,332.0 Q490.9,214.1 422.0,118.0Z" fill="#c4a2a2"/><path d="M422.0,118.0 Q456.8,217.0 481.6,332.0" stroke="#d020c0" stroke-width="1" fill="none"/><path d="M404.0,110.0 Q360.5,212.5 431.7,298.0 Q458.0,198.1 404.0,110.0Z" fill="#a86570"/><path d="M404.0,110.0 Q422.8,196.0 431.7,298.0" stroke="#d020c0" stroke-width="1" fill="none"/><path d="M80.0,90.0 L114.0,90.0 L111.0,152.0 L97.0,174.0 L77.0,162.0Z" fill="#d6cf92"/><path d="M95.0,125.0 L129.0,125.0 L123.0,189.0 L109.0,211.0 L89.0,199.0Z" fill="#b89866"/><path d="M112.0,145.0 L146.0,145.0 L139.0,212.0 L125.0,234.0 L105.0,222.0Z" fill="#d6cf92"/><path d="M129.0,162.0 L163.0,162.0 L153.0,247.0 L139.0,269.0 L119.0,257.0Z" fill="#b89866"/><path d="M149.0,178.0 L183.0,178.0 L172.0,276.0 L158.0,298.0 L138.0,286.0Z" fill="#d6cf92"/><path d="M169.0,192.0 L203.0,192.0 L186.0,302.0 L172.0,324.0 L152.0,312.0Z" fill="#b89866"/><path d="M191.0,202.0 L225.0,202.0 L214.0,337.0 L200.0,359.0 L180.0,347.0Z" fill="#d6cf92"/><path d="M217.0,206.0 L251.0,206.0 L241.0,337.0 L227.0,359.0 L207.0,347.0Z" fill="#b89866"/><path d="M243.0,202.0 L277.0,202.0 L269.0,337.0 L255.0,359.0 L235.0,347.0Z" fill="#d6cf92"/><path d="M270.0,192.0 L304.0,192.0 L301.0,325.0 L287.0,347.0 L267.0,335.0Z" fill="#b89866"/><path d="M297.0,180.0 L331.0,180.0 L331.0,320.0 L317.0,342.0 L297.0,330.0Z" fill="#d6cf92"/><path d="M324.0,166.0 L358.0,166.0 L365.0,308.0 L351.0,330.0 L331.0,318.0Z" fill="#b89866"/><path d="M350.0,148.0 L384.0,148.0 L395.0,287.0 L381.0,309.0 L361.0,297.0Z" fill="#d6cf92"/><path d="M103.0,100.0 Q101.5,142.0 94.0,174.0" stroke="#d020c0" stroke-width="1" fill="none"/><path d="M118.0,135.0 Q115.0,178.0 106.0,211.0" stroke="#d020c0" stroke-width="1" fill="none"/><path d="M135.0,155.0 Q131.5,199.5 122.0,234.0" stroke="#d020c0" stroke-width="1" fill="none"/><path d="M152.0,172.0 Q147.0,225.5 136.0,269.0" stroke="#d020c0" stroke-width="1" fill="none"/><path d="M172.0,188.0 Q166.5,248.0 155.0,298.0" stroke="#d020c0" stroke-width="1" fill="none"/><path d="M192.0,202.0 Q183.5,268.0 169.0,324.0" stroke="#d020c0" stroke-width="1" fill="none"/><path d="M214.0,212.0 Q208.5,290.5 197.0,359.0" stroke="#d020c0" stroke-width="1" fill="none"/><path d="M240.0,216.0 Q235.0,292.5 224.0,359.0" stroke="#d020c0" stroke-width="1" fill="none"/><path d="M266.0,212.0 Q262.0,290.5 252.0,359.0" stroke="#d020c0" stroke-width="1" fill="none"/><path d="M293.0,202.0 Q291.5,279.5 284.0,347.0" stroke="#d020c0" stroke-width="1" fill="none"/><path d="M320.0,190.0 Q320.0,271.0 314.0,342.0" stroke="#d020c0" stroke-width="1" fill="none"/><path d="M347.0,176.0 Q350.5,258.0 348.0,330.0" stroke="#d020c0" stroke-width="1" fill="none"/><path d="M373.0,158.0 Q378.5,238.5 378.0,309.0" stroke="#d020c0" stroke-width="1" fill="none"/><polygon points="78,37 94,37 94,87 139,150 185,165 246,175 304,160 370,125 424,100 494,80 578,91 544,120 484,140 434,155 392,160 379,156 361,176 332,190 304,202 274,215 246,228 220,231 184,215 142,188 114,155 78,116" fill="#40a2ac"/><polygon points="87,32 109,28 134,55 153,66 179,92 225,98 289,95 324,84 364,60 389,45 444,70 494,80 544,95 534,110 464,120 404,135 370,136 334,155 304,173 246,188 185,176 139,162 109,130 90,87" fill="#86789e"/><polygon points="376,32 419,23 464,30 509,58 504,78 474,86 434,72 394,55" fill="#78b048"/><path d="M379,30 Q419,40 444,78" stroke="#60ff40" stroke-width="1" fill="none"/><path d="M391,32 Q429,40 453,78" stroke="#60ff40" stroke-width="1" fill="none"/><path d="M403,34 Q439,40 462,78" stroke="#60ff40" stroke-width="1" fill="none"/><path d="M415,36 Q449,40 471,78" stroke="#60ff40" stroke-width="1" fill="none"/><path d="M427,38 Q459,40 480,78" stroke="#60ff40" stroke-width="1" fill="none"/><path d="M439,40 Q469,40 489,78" stroke="#60ff40" stroke-width="1" fill="none"/><path d="M451,42 Q479,40 498,78" stroke="#60ff40" stroke-width="1" fill="none"/><path d="M463,44 Q489,40 507,78" stroke="#60ff40" stroke-width="1" fill="none"/><path d="M94,39.4 Q99,84.42553191489378 104,139.42553191489378" stroke="#d020c0" stroke-width="1" fill="none"/><path d="M116,50.2 Q121,95.19148936170222 126,150.19148936170222" stroke="#d020c0" stroke-width="1" fill="none"/><path d="M138,62.3 Q143,107.28888888888878 148,162.28888888888878" stroke="#d020c0" stroke-width="1" fill="none"/><path d="M160,80.4 Q165,125.37777777777774 170,180.37777777777774" stroke="#d020c0" stroke-width="1" fill="none"/><path d="M182,96.4 Q187,141.391304347826 192,196.391304347826" stroke="#d020c0" stroke-width="1" fill="none"/><path d="M204,99.3 Q209,144.2608695652175 214,199.2608695652175" stroke="#d020c0" stroke-width="1" fill="none"/><path d="M226,102.0 Q231,146.953125 236,201.953125" stroke="#d020c0" stroke-width="1" fill="none"/><path d="M248,100.9 Q253,145.921875 258,200.921875" stroke="#d020c0" stroke-width="1" fill="none"/><path d="M270,99.9 Q275,144.890625 280,199.890625" stroke="#d020c0" stroke-width="1" fill="none"/><path d="M292,98.1 Q297,143.05714285714294 302,198.05714285714294" stroke="#d020c0" stroke-width="1" fill="none"/><path d="M314,91.1 Q319,136.14285714285734 324,191.14285714285734" stroke="#d020c0" stroke-width="1" fill="none"/><path d="M336,80.8 Q341,125.80000000000018 346,180.80000000000018" stroke="#d020c0" stroke-width="1" fill="none"/><path d="M358,67.6 Q363,112.59999999999991 368,167.5999999999999" stroke="#d020c0" stroke-width="1" fill="none"/><path d="M380,54.4 Q385,99.40000000000009 390,154.4000000000001" stroke="#d020c0" stroke-width="1" fill="none"/><path d="M402,54.9 Q407,99.90909090909099 412,154.909090909091" stroke="#d020c0" stroke-width="1" fill="none"/><path d="M424,64.9 Q429,109.90909090909099 434,164.909090909091" stroke="#d020c0" stroke-width="1" fill="none"/><path d="M446,74.5 Q451,119.5 456,174.5" stroke="#d020c0" stroke-width="1" fill="none"/><path d="M468,80.0 Q473,125.0 478,180.0" stroke="#d020c0" stroke-width="1" fill="none"/><path d="M490,85.5 Q495,130.5 500,185.5" stroke="#d020c0" stroke-width="1" fill="none"/><path d="M512,91.0 Q517,136.0 522,191.0" stroke="#d020c0" stroke-width="1" fill="none"/><path d="M534,96.5 Q539,141.5 544,196.5" stroke="#d020c0" stroke-width="1" fill="none"/></svg>
<div class="a" style="left:0px;top:2397px;width:264px;height:551px;background:#444444;"></div>
<svg class="a" style="left:3px;top:2402px;" width="14" height="14" viewBox="0 0 14 14"><path d="M2 1 h10 v12 h-10z" stroke="#666" fill="none" stroke-dasharray="3 2"/></svg>
<div class="a" style="left:19px;top:2401px;width:240px;height:14px;background:#2b2b2b;border-radius:2px;"></div>
<div class="a" style="left:0px;top:2422px;width:250px;height:526px;background:#2b2b2b;"></div>
<div class="a" style="left:250px;top:2422px;width:9px;height:526px;background:#3a3a3a;"></div>
<svg class="a" style="left:250px;top:2423px;" width="9" height="6" viewBox="0 0 9 6"><path d="M0 6 L4.5 0 L9 6Z" fill="#bbb"/></svg>
<div class="a" style="left:251px;top:2784px;width:7px;height:164px;background:#5a5a5a;border-radius:3px;"></div>
<svg class="a" style="left:0px;top:2422px;" width="250" height="526" viewBox="0 0 250 526"><rect x="13.5" y="2.6" width="12" height="12" fill="none" stroke="#bbb"/><path d="M16 8.6 h7 M19.5 5.1 v7" stroke="#ddd" stroke-width="1.4"/><circle cx="41.5" cy="8.6" r="6.5" fill="#1a1a1a" stroke="#666" stroke-width="0.8"/><circle cx="40" cy="10.6" r="3.5" fill="#c8b060"/><path d="M42 4.6 l4 1 v5 l-4 1z" fill="#5a9ad8"/><text x="51" y="12.4" font-size="10.2" letter-spacing="-0.55" fill="#d8d8d8" font-family="Liberation Sans">FSET_Wing</text><rect x="13.5" y="19.5" width="12" height="12" fill="none" stroke="#bbb"/><path d="M16 25.5 h7 M19.5 22.0 v7" stroke="#ddd" stroke-width="1.4"/><circle cx="41.5" cy="25.5" r="6.5" fill="#1a1a1a" stroke="#666" stroke-width="0.8"/><circle cx="40" cy="27.5" r="3.5" fill="#c8b060"/><path d="M42 21.5 l4 1 v5 l-4 1z" fill="#5a9ad8"/><text x="51" y="29.3" font-size="10.2" letter-spacing="-0.55" fill="#d8d8d8" font-family="Liberation Sans">GSET_Alula_Low_L</text><rect x="13.5" y="36.4" width="12" height="12" fill="none" stroke="#bbb"/><path d="M16 42.4 h7 M19.5 38.9 v7" stroke="#ddd" stroke-width="1.4"/><circle cx="41.5" cy="42.4" r="6.5" fill="#1a1a1a" stroke="#666" stroke-width="0.8"/><circle cx="40" cy="44.4" r="3.5" fill="#c8b060"/><path d="M42 38.4 l4 1 v5 l-4 1z" fill="#5a9ad8"/><text x="51" y="46.2" font-size="10.2" letter-spacing="-0.55" fill="#d8d8d8" font-family="Liberation Sans">GSET_Alula_Low_R</text><rect x="13.5" y="53.2" width="12" height="12" fill="none" stroke="#bbb"/><path d="M16 59.2 h7 M19.5 55.7 v7" stroke="#ddd" stroke-width="1.4"/><circle cx="41.5" cy="59.2" r="6.5" fill="#1a1a1a" stroke="#666" stroke-width="0.8"/><circle cx="40" cy="61.2" r="3.5" fill="#c8b060"/><path d="M42 55.2 l4 1 v5 l-4 1z" fill="#5a9ad8"/><text x="51" y="63.0" font-size="10.2" letter-spacing="-0.55" fill="#d8d8d8" font-family="Liberation Sans">GSET_Alula_Up_L</text><rect x="13.5" y="70.1" width="12" height="12" fill="none" stroke="#bbb"/><path d="M16 76.1 h7 M19.5 72.6 v7" stroke="#ddd" stroke-width="1.4"/><circle cx="41.5" cy="76.1" r="6.5" fill="#1a1a1a" stroke="#666" stroke-width="0.8"/><circle cx="40" cy="78.1" r="3.5" fill="#c8b060"/><path d="M42 72.1 l4 1 v5 l-4 1z" fill="#5a9ad8"/><text x="51" y="79.9" font-size="10.2" letter-spacing="-0.55" fill="#d8d8d8" font-family="Liberation Sans">GSET_Alula_Up_R</text><rect x="13.5" y="87.0" width="12" height="12" fill="none" stroke="#bbb"/><path d="M16 93.0 h7 M19.5 89.5 v7" stroke="#ddd" stroke-width="1.4"/><circle cx="41.5" cy="93.0" r="6.5" fill="#1a1a1a" stroke="#666" stroke-width="0.8"/><circle cx="40" cy="95.0" r="3.5" fill="#c8b060"/><path d="M42 89.0 l4 1 v5 l-4 1z" fill="#5a9ad8"/><text x="51" y="96.8" font-size="10.2" letter-spacing="-0.55" fill="#d8d8d8" font-family="Liberation Sans">GSET_CovLarg_Pri_Up_L</text><rect x="13.5" y="103.9" width="12" height="12" fill="none" stroke="#bbb"/><path d="M16 109.9 h7 M19.5 106.4 v7" stroke="#ddd" stroke-width="1.4"/><circle cx="41.5" cy="109.9" r="6.5" fill="#1a1a1a" stroke="#666" stroke-width="0.8"/><circle cx="40" cy="111.9" r="3.5" fill="#c8b060"/><path d="M42 105.9 l4 1 v5 l-4 1z" fill="#5a9ad8"/><text x="51" y="113.7" font-size="10.2" letter-spacing="-0.55" fill="#d8d8d8" font-family="Liberation Sans">GSET_CovLarge_Pri_Low_L</text><rect x="13.5" y="120.8" width="12" height="12" fill="none" stroke="#bbb"/><path d="M16 126.8 h7 M19.5 123.3 v7" stroke="#ddd" stroke-width="1.4"/><circle cx="41.5" cy="126.8" r="6.5" fill="#1a1a1a" stroke="#666" stroke-width="0.8"/><circle cx="40" cy="128.8" r="3.5" fill="#c8b060"/><path d="M42 122.8 l4 1 v5 l-4 1z" fill="#5a9ad8"/><text x="51" y="130.6" font-size="10.2" letter-spacing="-0.55" fill="#d8d8d8" font-family="Liberation Sans">GSET_CovLarge_Pri_Low_R</text><rect x="13.5" y="137.6" width="12" height="12" fill="none" stroke="#bbb"/><path d="M16 143.6 h7 M19.5 140.1 v7" stroke="#ddd" stroke-width="1.4"/><circle cx="41.5" cy="143.6" r="6.5" fill="#1a1a1a" stroke="#666" stroke-width="0.8"/><circle cx="40" cy="145.6" r="3.5" fill="#c8b060"/><path d="M42 139.6 l4 1 v5 l-4 1z" fill="#5a9ad8"/><text x="51" y="147.4" font-size="10.2" letter-spacing="-0.55" fill="#d8d8d8" font-family="Liberation Sans">GSET_CovLarge_Pri_Up_R</text><rect x="13.5" y="154.5" width="12" height="12" fill="none" stroke="#bbb"/><path d="M16 160.5 h7 M19.5 157.0 v7" stroke="#ddd" stroke-width="1.4"/><circle cx="41.5" cy="160.5" r="6.5" fill="#1a1a1a" stroke="#666" stroke-width="0.8"/><circle cx="40" cy="162.5" r="3.5" fill="#c8b060"/><path d="M42 156.5 l4 1 v5 l-4 1z" fill="#5a9ad8"/><text x="51" y="164.3" font-size="10.2" letter-spacing="-0.55" fill="#d8d8d8" font-family="Liberation Sans">GSET_CovLarge_Sec_Low_L</text><rect x="13.5" y="171.4" width="12" height="12" fill="none" stroke="#bbb"/><path d="M16 177.4 h7 M19.5 173.9 v7" stroke="#ddd" stroke-width="1.4"/><circle cx="41.5" cy="177.4" r="6.5" fill="#1a1a1a" stroke="#666" stroke-width="0.8"/><circle cx="40" cy="179.4" r="3.5" fill="#c8b060"/><path d="M42 173.4 l4 1 v5 l-4 1z" fill="#5a9ad8"/><text x="51" y="181.2" font-size="10.2" letter-spacing="-0.55" fill="#d8d8d8" font-family="Liberation Sans">GSET_CovLarge_Sec_Low_R</text><rect x="13.5" y="188.3" width="12" height="12" fill="none" stroke="#bbb"/><path d="M16 194.3 h7 M19.5 190.8 v7" stroke="#ddd" stroke-width="1.4"/><circle cx="41.5" cy="194.3" r="6.5" fill="#1a1a1a" stroke="#666" stroke-width="0.8"/><circle cx="40" cy="196.3" r="3.5" fill="#c8b060"/><path d="M42 190.3 l4 1 v5 l-4 1z" fill="#5a9ad8"/><text x="51" y="198.1" font-size="10.2" letter-spacing="-0.55" fill="#d8d8d8" font-family="Liberation Sans">GSET_CovLarge_Sec_Up_L</text><rect x="13.5" y="205.2" width="12" height="12" fill="none" stroke="#bbb"/><path d="M16 211.2 h7 M19.5 207.7 v7" stroke="#ddd" stroke-width="1.4"/><circle cx="41.5" cy="211.2" r="6.5" fill="#1a1a1a" stroke="#666" stroke-width="0.8"/><circle cx="40" cy="213.2" r="3.5" fill="#c8b060"/><path d="M42 207.2 l4 1 v5 l-4 1z" fill="#5a9ad8"/><text x="51" y="215.0" font-size="10.2" letter-spacing="-0.55" fill="#d8d8d8" font-family="Liberation Sans">GSET_CovLarge_Sec_Up_R</text><rect x="13.5" y="222.0" width="12" height="12" fill="none" stroke="#bbb"/><path d="M16 228.0 h7 M19.5 224.5 v7" stroke="#ddd" stroke-width="1.4"/><circle cx="41.5" cy="228.0" r="6.5" fill="#1a1a1a" stroke="#666" stroke-width="0.8"/><circle cx="40" cy="230.0" r="3.5" fill="#c8b060"/><path d="M42 224.0 l4 1 v5 l-4 1z" fill="#5a9ad8"/><text x="51" y="231.8" font-size="10.2" letter-spacing="-0.55" fill="#d8d8d8" font-family="Liberation Sans">GSET_CovLarge_Ter_Up_L</text><rect x="13.5" y="238.9" width="12" height="12" fill="none" stroke="#bbb"/><path d="M16 244.9 h7 M19.5 241.4 v7" stroke="#ddd" stroke-width="1.4"/><circle cx="41.5" cy="244.9" r="6.5" fill="#1a1a1a" stroke="#666" stroke-width="0.8"/><circle cx="40" cy="246.9" r="3.5" fill="#c8b060"/><path d="M42 240.9 l4 1 v5 l-4 1z" fill="#5a9ad8"/><text x="51" y="248.7" font-size="10.2" letter-spacing="-0.55" fill="#d8d8d8" font-family="Liberation Sans">GSET_CovLarge_Ter_Up_R</text><rect x="13.5" y="255.8" width="12" height="12" fill="none" stroke="#bbb"/><path d="M16 261.8 h7 M19.5 258.3 v7" stroke="#ddd" stroke-width="1.4"/><circle cx="41.5" cy="261.8" r="6.5" fill="#1a1a1a" stroke="#666" stroke-width="0.8"/><circle cx="40" cy="263.8" r="3.5" fill="#c8b060"/><path d="M42 257.8 l4 1 v5 l-4 1z" fill="#5a9ad8"/><text x="51" y="265.6" font-size="10.2" letter-spacing="-0.55" fill="#d8d8d8" font-family="Liberation Sans">GSET_CovMed_Pri_Low_L</text><rect x="13.5" y="272.7" width="12" height="12" fill="none" stroke="#bbb"/><path d="M16 278.7 h7 M19.5 275.2 v7" stroke="#ddd" stroke-width="1.4"/><circle cx="41.5" cy="278.7" r="6.5" fill="#1a1a1a" stroke="#666" stroke-width="0.8"/><circle cx="40" cy="280.7" r="3.5" fill="#c8b060"/><path d="M42 274.7 l4 1 v5 l-4 1z" fill="#5a9ad8"/><text x="51" y="282.5" font-size="10.2" letter-spacing="-0.55" fill="#d8d8d8" font-family="Liberation Sans">GSET_CovMed_Pri_Low_R</text><rect x="13.5" y="289.6" width="12" height="12" fill="none" stroke="#bbb"/><path d="M16 295.6 h7 M19.5 292.1 v7" stroke="#ddd" stroke-width="1.4"/><circle cx="41.5" cy="295.6" r="6.5" fill="#1a1a1a" stroke="#666" stroke-width="0.8"/><circle cx="40" cy="297.6" r="3.5" fill="#c8b060"/><path d="M42 291.6 l4 1 v5 l-4 1z" fill="#5a9ad8"/><text x="51" y="299.4" font-size="10.2" letter-spacing="-0.55" fill="#d8d8d8" font-family="Liberation Sans">GSET_CovMed_Pri_Up_L</text><rect x="13.5" y="306.4" width="12" height="12" fill="none" stroke="#bbb"/><path d="M16 312.4 h7 M19.5 308.9 v7" stroke="#ddd" stroke-width="1.4"/><circle cx="41.5" cy="312.4" r="6.5" fill="#1a1a1a" stroke="#666" stroke-width="0.8"/><circle cx="40" cy="314.4" r="3.5" fill="#c8b060"/><path d="M42 308.4 l4 1 v5 l-4 1z" fill="#5a9ad8"/><text x="51" y="316.2" font-size="10.2" letter-spacing="-0.55" fill="#d8d8d8" font-family="Liberation Sans">GSET_CovMed_Pri_Up_R</text><rect x="13.5" y="323.3" width="12" height="12" fill="none" stroke="#bbb"/><path d="M16 329.3 h7 M19.5 325.8 v7" stroke="#ddd" stroke-width="1.4"/><circle cx="41.5" cy="329.3" r="6.5" fill="#1a1a1a" stroke="#666" stroke-width="0.8"/><circle cx="40" cy="331.3" r="3.5" fill="#c8b060"/><path d="M42 325.3 l4 1 v5 l-4 1z" fill="#5a9ad8"/><text x="51" y="333.1" font-size="10.2" letter-spacing="-0.55" fill="#d8d8d8" font-family="Liberation Sans">GSET_CovMed_Sec_Low_L</text><rect x="13.5" y="340.2" width="12" height="12" fill="none" stroke="#bbb"/><path d="M16 346.2 h7 M19.5 342.7 v7" stroke="#ddd" stroke-width="1.4"/><circle cx="41.5" cy="346.2" r="6.5" fill="#1a1a1a" stroke="#666" stroke-width="0.8"/><circle cx="40" cy="348.2" r="3.5" fill="#c8b060"/><path d="M42 342.2 l4 1 v5 l-4 1z" fill="#5a9ad8"/><text x="51" y="350.0" font-size="10.2" letter-spacing="-0.55" fill="#d8d8d8" font-family="Liberation Sans">GSET_CovMed_Sec_Low_R</text><rect x="13.5" y="357.1" width="12" height="12" fill="none" stroke="#bbb"/><path d="M16 363.1 h7 M19.5 359.6 v7" stroke="#ddd" stroke-width="1.4"/><circle cx="41.5" cy="363.1" r="6.5" fill="#1a1a1a" stroke="#666" stroke-width="0.8"/><circle cx="40" cy="365.1" r="3.5" fill="#c8b060"/><path d="M42 359.1 l4 1 v5 l-4 1z" fill="#5a9ad8"/><text x="51" y="366.9" font-size="10.2" letter-spacing="-0.55" fill="#d8d8d8" font-family="Liberation Sans">GSET_CovMed_Sec_Up_L</text><rect x="13.5" y="374.0" width="12" height="12" fill="none" stroke="#bbb"/><path d="M16 380.0 h7 M19.5 376.5 v7" stroke="#ddd" stroke-width="1.4"/><circle cx="41.5" cy="380.0" r="6.5" fill="#1a1a1a" stroke="#666" stroke-width="0.8"/><circle cx="40" cy="382.0" r="3.5" fill="#c8b060"/><path d="M42 376.0 l4 1 v5 l-4 1z" fill="#5a9ad8"/><text x="51" y="383.8" font-size="10.2" letter-spacing="-0.55" fill="#d8d8d8" font-family="Liberation Sans">GSET_CovMed_Sec_Up_R</text><rect x="13.5" y="390.8" width="12" height="12" fill="none" stroke="#bbb"/><path d="M16 396.8 h7 M19.5 393.3 v7" stroke="#ddd" stroke-width="1.4"/><circle cx="41.5" cy="396.8" r="6.5" fill="#1a1a1a" stroke="#666" stroke-width="0.8"/><circle cx="40" cy="398.8" r="3.5" fill="#c8b060"/><path d="M42 392.8 l4 1 v5 l-4 1z" fill="#5a9ad8"/><text x="51" y="400.6" font-size="10.2" letter-spacing="-0.55" fill="#d8d8d8" font-family="Liberation Sans">GSET_Large_Pri_L</text><rect x="13.5" y="407.7" width="12" height="12" fill="none" stroke="#bbb"/><path d="M16 413.7 h7 M19.5 410.2 v7" stroke="#ddd" stroke-width="1.4"/><circle cx="41.5" cy="413.7" r="6.5" fill="#1a1a1a" stroke="#666" stroke-width="0.8"/><circle cx="40" cy="415.7" r="3.5" fill="#c8b060"/><path d="M42 409.7 l4 1 v5 l-4 1z" fill="#5a9ad8"/><text x="51" y="417.5" font-size="10.2" letter-spacing="-0.55" fill="#d8d8d8" font-family="Liberation Sans">GSET_Large_Pri_R</text><rect x="13.5" y="424.6" width="12" height="12" fill="none" stroke="#bbb"/><path d="M16 430.6 h7 M19.5 427.1 v7" stroke="#ddd" stroke-width="1.4"/><circle cx="41.5" cy="430.6" r="6.5" fill="#1a1a1a" stroke="#666" stroke-width="0.8"/><circle cx="40" cy="432.6" r="3.5" fill="#c8b060"/><path d="M42 426.6 l4 1 v5 l-4 1z" fill="#5a9ad8"/><text x="51" y="434.4" font-size="10.2" letter-spacing="-0.55" fill="#d8d8d8" font-family="Liberation Sans">GSET_Large_Sec_L</text><rect x="13.5" y="441.5" width="12" height="12" fill="none" stroke="#bbb"/><path d="M16 447.5 h7 M19.5 444.0 v7" stroke="#ddd" stroke-width="1.4"/><circle cx="41.5" cy="447.5" r="6.5" fill="#1a1a1a" stroke="#666" stroke-width="0.8"/><circle cx="40" cy="449.5" r="3.5" fill="#c8b060"/><path d="M42 443.5 l4 1 v5 l-4 1z" fill="#5a9ad8"/><text x="51" y="451.3" font-size="10.2" letter-spacing="-0.55" fill="#d8d8d8" font-family="Liberation Sans">GSET_Large_Sec_R</text><rect x="13.5" y="458.4" width="12" height="12" fill="none" stroke="#bbb"/><path d="M16 464.4 h7 M19.5 460.9 v7" stroke="#ddd" stroke-width="1.4"/><circle cx="41.5" cy="464.4" r="6.5" fill="#1a1a1a" stroke="#666" stroke-width="0.8"/><circle cx="40" cy="466.4" r="3.5" fill="#c8b060"/><path d="M42 460.4 l4 1 v5 l-4 1z" fill="#5a9ad8"/><text x="51" y="468.2" font-size="10.2" letter-spacing="-0.55" fill="#d8d8d8" font-family="Liberation Sans">GSET_Large_Ter_L</text><rect x="13.5" y="475.2" width="12" height="12" fill="none" stroke="#bbb"/><path d="M16 481.2 h7 M19.5 477.7 v7" stroke="#ddd" stroke-width="1.4"/><circle cx="41.5" cy="481.2" r="6.5" fill="#1a1a1a" stroke="#666" stroke-width="0.8"/><circle cx="40" cy="483.2" r="3.5" fill="#c8b060"/><path d="M42 477.2 l4 1 v5 l-4 1z" fill="#5a9ad8"/><text x="51" y="485.0" font-size="10.2" letter-spacing="-0.55" fill="#d8d8d8" font-family="Liberation Sans">GSET_Large_Ter_R</text><rect x="13.5" y="492.1" width="12" height="12" fill="none" stroke="#bbb"/><path d="M16 498.1 h7 M19.5 494.6 v7" stroke="#ddd" stroke-width="1.4"/><circle cx="41.5" cy="498.1" r="6.5" fill="#1a1a1a" stroke="#666" stroke-width="0.8"/><circle cx="40" cy="500.1" r="3.5" fill="#c8b060"/><path d="M42 494.1 l4 1 v5 l-4 1z" fill="#5a9ad8"/><text x="51" y="501.9" font-size="10.2" letter-spacing="-0.55" fill="#d8d8d8" font-family="Liberation Sans">GSET_Large_Tip_L</text><rect x="13.5" y="509.0" width="12" height="12" fill="none" stroke="#bbb"/><path d="M16 515.0 h7 M19.5 511.5 v7" stroke="#ddd" stroke-width="1.4"/><circle cx="41.5" cy="515.0" r="6.5" fill="#1a1a1a" stroke="#666" stroke-width="0.8"/><circle cx="40" cy="517.0" r="3.5" fill="#c8b060"/><path d="M42 511.0 l4 1 v5 l-4 1z" fill="#5a9ad8"/><text x="51" y="518.8" font-size="10.2" letter-spacing="-0.55" fill="#d8d8d8" font-family="Liberation Sans">GSET_Large_Tip_R</text></svg>
<div class="a" style="left:264px;top:2397px;width:711px;height:19px;background:#444444;"></div>
<svg class="a" style="left:264px;top:2398px;" width="560" height="16" viewBox="0 0 560 16"><g transform="translate(3.62,7.58) scale(0.8425)"><rect x="-1" y="-6" width="2" height="12" rx="1" fill="#8a8a8a"/></g><g transform="translate(114.58,7.58) scale(0.8425)"><rect x="-1" y="-6" width="2" height="12" rx="1" fill="#8a8a8a"/></g><g transform="translate(241.54,7.58) scale(0.8425)"><rect x="-1" y="-6" width="2" height="12" rx="1" fill="#8a8a8a"/></g><g transform="translate(368.17,7.58) scale(0.8425)"><rect x="-1" y="-6" width="2" height="12" rx="1" fill="#8a8a8a"/></g><g transform="translate(444.84,7.58) scale(0.8425)"><rect x="-1" y="-6" width="2" height="12" rx="1" fill="#8a8a8a"/></g><g transform="translate(470.96,7.58) scale(0.8425)"><rect x="-1" y="-6" width="2" height="12" rx="1" fill="#8a8a8a"/></g><g transform="translate(530.77,7.58) scale(0.8425)"><rect x="-1" y="-6" width="2" height="12" rx="1" fill="#8a8a8a"/></g><g transform="translate(85.09,7.58) scale(0.8425)"><rect x="-9.5" y="-9" width="19" height="18" rx="2" fill="#5285a6"/></g><g transform="translate(272.13,7.58) scale(0.8425)"><rect x="-9.5" y="-9" width="19" height="18" rx="2" fill="#5285a6"/></g><g transform="translate(382.50,7.58) scale(0.8425)"><rect x="-9.5" y="-9" width="19" height="18" rx="2" fill="#5285a6"/></g><g transform="translate(416.19,7.58) scale(0.8425)"><rect x="-9.5" y="-9" width="19" height="18" rx="2" fill="#5285a6"/></g><g transform="translate(518.98,7.58) scale(0.8425)"><rect x="-9.5" y="-9" width="19" height="18" rx="2" fill="#5285a6"/></g><g transform="translate(433.05,7.58) scale(0.8425)"><rect x="-9" y="-9" width="18" height="18" rx="2" fill="#2e2e2e"/></g><g transform="translate(17.27,7.58) scale(0.8425)"><rect x="-7" y="-3.5" width="9" height="7" rx="1" fill="#d4d4d4"/><path d="M3 0 L7 -4 V4Z" fill="#d4d4d4"/></g><g transform="translate(34.54,7.58) scale(0.8425)"><rect x="-3" y="-5" width="8" height="7" fill="#d4d4d4"/><path d="M5 -1.5 L9 -5 V2Z" fill="#d4d4d4"/><circle cx="-4" cy="3" r="3" fill="none" stroke="#4fc3d4" stroke-width="1.8" stroke-dasharray="1.5 1"/></g><g transform="translate(50.97,7.58) scale(0.8425)"><path d="M-3 -6 H3 V6 L0 3 L-3 6Z" fill="#d4d4d4"/></g><g transform="translate(68.24,7.58) scale(0.8425)"><path d="M-1 -6 L5 -9 V2 L-1 5Z" fill="#4fc3d4"/><path d="M-7 7 H6 L3 3 H-5Z" fill="none" stroke="#d4d4d4" stroke-width="1.2"/></g><g transform="translate(85.09,7.58) scale(0.8425)"><path d="M-3 -7 V3 M-6 -4 L-3 -7 L0 -4" stroke="#d4d4d4" stroke-width="1.5" fill="none"/><circle cx="3" cy="3" r="3.5" fill="none" stroke="#d4d4d4" stroke-width="1.5"/></g><g transform="translate(101.10,7.58) scale(0.8425)"><path d="M-5 5 L4 -5" stroke="#d4d4d4" stroke-width="2.2"/><circle cx="-5" cy="5" r="1.5" fill="#4fc3d4"/></g><g transform="translate(127.89,7.58) scale(0.8425)"><path d="M-6 -6 H6 M-6 -2 H6 M-6 2 H6 M-6 6 H6 M-6 -6 V6 M-2 -6 V6 M2 -6 V6 M6 -6 V6" stroke="#d4d4d4" stroke-width="1.1"/></g><g transform="translate(144.91,7.58) scale(0.8425)"><rect x="-8" y="-6" width="16" height="12" fill="none" stroke="#d4d4d4" stroke-width="1.3"/><path d="M-8 -3 H8 M-8 3 H8" stroke="#d4d4d4" stroke-width="1"/></g><g transform="translate(161.51,7.58) scale(0.8425)"><rect x="-7" y="-6" width="14" height="12" fill="none" stroke="#d4d4d4" stroke-width="1.3"/><circle cx="0" cy="0" r="3" fill="#4fc3d4"/></g><g transform="translate(178.36,7.58) scale(0.8425)"><rect x="-8" y="-7" width="16" height="14" fill="#555"/><circle cx="0" cy="0" r="4" fill="#333"/></g><g transform="translate(195.21,7.58) scale(0.8425)"><rect x="-7" y="-6" width="14" height="12" fill="none" stroke="#d4d4d4" stroke-width="1.3"/><path d="M-7 0 H7" stroke="#4fc3d4" stroke-width="1.2" stroke-dasharray="2 1"/></g><g transform="translate(211.97,7.58) scale(0.8425)"><rect x="-7" y="-6" width="14" height="12" fill="none" stroke="#d4d4d4" stroke-width="1.3"/><path d="M-4 3 L-1 -1 L1 3Z" fill="#4fc3d4"/><circle cx="3" cy="-1" r="2" fill="#4fc3d4"/></g><g transform="translate(228.82,7.58) scale(0.8425)"><rect x="-7" y="-6" width="14" height="12" fill="none" stroke="#d4d4d4" stroke-width="1.3"/><path d="M-3 -3 H3 M0 -3 V4" stroke="#4fc3d4" stroke-width="2"/></g><g transform="translate(255.28,7.58) scale(0.8425)"><path d="M0 -7 L6 -4 V3 L0 7 L-6 3 V-4Z M-6 -4 L0 -1 L6 -4 M0 -1 V7" fill="none" stroke="#4fc3d4" stroke-width="1.3"/></g><g transform="translate(272.13,7.58) scale(0.8425)"><path d="M0 -7 L6 -4 V3 L0 7 L-6 3 V-4Z" fill="#c8c8c8" stroke="#555" stroke-width="0.8"/><path d="M-6 -4 L0 -1 L6 -4 M0 -1 V7" stroke="#666" fill="none"/></g><g transform="translate(288.47,7.58) scale(0.8425)"><path d="M0 -7 A7 7 0 0 0 0 7Z" fill="#d4d4d4"/><path d="M1 -7 H6 V7 H1Z" fill="none" stroke="#d4d4d4" stroke-dasharray="2 2" stroke-width="2"/></g><g transform="translate(305.83,7.58) scale(0.8425)"><path d="M0 -7 L6 -4 V3 L0 7 L-6 3 V-4Z" fill="none" stroke="#4fc3d4" stroke-width="1.3"/><rect x="-3" y="-2" width="6" height="5" fill="#4fc3d4"/></g><g transform="translate(321.84,7.58) scale(0.8425)"><path d="M-6 -6 h4 v4 h-4z M2 -6 h4 v4 h-4z M-2 -2 h4 v4 h-4z M-6 2 h4 v4 h-4z M2 2 h4 v4 h-4z" fill="#d4d4d4"/></g><g transform="translate(339.53,7.58) scale(0.8425)"><circle cx="0" cy="-1" r="3.5" fill="#d4d4d4"/><rect x="-1.5" y="3" width="3" height="3" fill="#d4d4d4"/><path d="M-7 -1 H-5 M5 -1 H7 M0 -8 V-6 M-5 -6 L-4 -5 M5 -6 L4 -5" stroke="#d4d4d4"/></g><g transform="translate(355.54,7.58) scale(0.8425)"><circle cx="3" cy="0" r="5" fill="#4fc3d4"/><path d="M-7 5 L-2 0" stroke="#d4d4d4" stroke-width="1.5"/></g><g transform="translate(382.50,7.58) scale(0.8425)"><circle cx="0" cy="-1" r="5.5" fill="#d8d8d8"/><path d="M-7 4 L0 7 L7 4 L0 1Z" fill="#4fc3d4"/></g><g transform="translate(399.35,7.58) scale(0.8425)"><circle cx="-3" cy="0" r="5" fill="none" stroke="#d4d4d4" stroke-width="1.3"/><circle cx="2" cy="0" r="5.5" fill="#d4d4d4"/></g><g transform="translate(416.62,7.58) scale(0.8425)"><circle cx="0" cy="0" r="6" fill="none" stroke="#d4d4d4" stroke-width="2.5" stroke-dasharray="3 1.5"/></g><g transform="translate(433.05,7.58) scale(0.8425)"><rect x="-5" y="-5" width="10" height="10" fill="#485a5e"/></g><g transform="translate(458.32,7.58) scale(0.8425)"><rect x="-6" y="-6" width="8" height="8" fill="none" stroke="#4fc3d4" stroke-dasharray="2 1.5"/><path d="M0 -1 L7 5 L4 5 L5 8 L4 8.5 L2.5 5.5 L0 7Z" fill="#d4d4d4"/></g><g transform="translate(484.94,7.58) scale(0.8425)"><rect x="-6" y="-3" width="8" height="8" fill="#444" stroke="#d4d4d4" stroke-width="1.5"/><rect x="-2" y="-7" width="8" height="8" fill="#444" stroke="#d4d4d4" stroke-width="1.5"/></g><g transform="translate(501.88,7.58) scale(0.8425)"><rect x="-7" y="-2" width="8" height="8" fill="#4fc3d4"/><rect x="-3" y="-7" width="9" height="9" fill="#444" stroke="#d4d4d4" stroke-width="1.5"/></g><g transform="translate(518.73,7.58) scale(0.8425)"><rect x="-7" y="-7" width="14" height="14" fill="none" stroke="#d4d4d4" stroke-width="1.5"/><rect x="-4" y="-4" width="8" height="8" fill="#3a6a8a" stroke="#4fc3d4"/></g><g transform="translate(545.10,7.58) scale(0.8425)"><circle cx="0" cy="0" r="7" fill="#d4d4d4"/><circle cx="0" cy="0" r="2.5" fill="#444"/><path d="M0 -7 L2 -2 M7 0 L2 1 M-5 5 L-2 1 M-5 -5 L-2 -1" stroke="#444" stroke-width="1.5"/></g><g transform="translate(598.18,7.58) scale(0.8425)"><path d="M2 -8 V8 A8 8 0 0 1 2 -8Z" fill="#d4d4d4"/><rect x="2" y="-6" width="4" height="12" fill="#d4d4d4"/></g></svg>
<div class="a" style="left:820.0500000000001px;top:2400px;width:31.1725px;height:14px;background:#2b2b2b;"></div>
<div class="t" style="left:835.215px;transform:translateX(-50%);top:2402.0px;font-size:9.5px;color:#ddd;">0.00</div>
<svg class="a" style="left:853.75px;top:2398px;" width="16" height="16" viewBox="0 0 16 16"><g transform="scale(0.8425)"><path d="M10 1 V17 A8 8 0 0 1 10 1Z" fill="#d4d4d4"/><rect x="10" y="3" width="4" height="12" fill="#d4d4d4"/></g></svg>
<div class="a" style="left:872.285px;top:2400px;width:31.1725px;height:14px;background:#2b2b2b;"></div>
<div class="t" style="left:888.2925px;transform:translateX(-50%);top:2402.0px;font-size:9.5px;color:#ddd;">1.00</div>
<div class="a" style="left:909px;top:2400px;width:16px;height:16px;background:#5285a6;"></div>
<svg class="a" style="left:909px;top:2400px;" width="16" height="16" viewBox="0 0 16 16"><circle cx="8" cy="8" r="6" fill="#3bb4c4"/></svg>
<div class="a" style="left:928px;top:2400px;width:47px;height:15px;background:#5a5a5a;"></div>
<div class="t" style="left:931px;top:2402.2px;font-size:10px;color:#eee;">sRGB gam</div>
<div class="a" style="left:915px;top:2416px;width:60px;height:9px;background:#5e5e5e;"></div>
<svg class="a" style="left:264px;top:2416px;" width="651" height="532" viewBox="0 0 651 532"><defs><linearGradient id="b3" x1="0" y1="0" x2="1" y2="0.2"><stop offset="0" stop-color="#b2b2b2"/><stop offset="0.6" stop-color="#a2a2a2"/><stop offset="1" stop-color="#7a7a7a"/></linearGradient></defs><rect width="711" height="532" fill="#5e5e5e"/><path d="M0.0,0.0 L41.0,0.0 C66.0,64.0 106.0,124.0 141.0,148.0 C216.0,159.0 296.0,154.0 362.0,148.0 C416.0,149.0 476.0,174.0 512.0,204.0 C506.0,216.0 496.0,220.0 488.0,218.0 C436.0,214.0 376.0,216.0 336.0,234.0 C306.0,252.0 266.0,268.0 240.0,270.0 C231.0,304.0 231.0,324.0 230.0,345.0 C226.0,384.0 221.0,414.0 216.0,424.0 C201.0,464.0 176.0,504.0 151.0,532.0 L0.0,532.0Z" fill="url(#b3)"/><path d="M41.0,0.0 C66.0,64.0 106.0,124.0 141.0,148.0" stroke="#1a1a1a" stroke-width="2" fill="none"/><path d="M232.0,344.0 C226.0,384.0 221.0,414.0 216.0,424.0 C201.0,464.0 176.0,504.0 151.0,532.0" stroke="#111" stroke-width="2" fill="none"/><path d="M241.0,344.0 C251.0,384.0 236.0,444.0 214.0,474.0 C231.0,479.0 256.0,444.0 266.0,414.0 C286.0,394.0 296.0,384.0 296.0,374.0 C281.0,384.0 271.0,394.0 261.0,399.0 C261.0,374.0 256.0,354.0 241.0,344.0Z" fill="#a0a0a0" stroke="#444" stroke-width="1"/><path d="M168.0,263.0 C176.0,284.0 176.0,294.0 164.0,294.0 C156.0,284.0 158.0,269.0 168.0,263.0Z" fill="#1a1a1a"/><path d="M96.8,166.6 Q107.3,225.2 89.8,283.9" stroke="#c81ed0" stroke-width="1.2" fill="none"/><path d="M118.0,173.2 Q128.4,237.4 110.9,301.7" stroke="#c81ed0" stroke-width="1.2" fill="none"/><path d="M139.1,179.8 Q149.5,249.6 132.0,319.5" stroke="#c81ed0" stroke-width="1.2" fill="none"/><path d="M160.2,186.3 Q170.6,261.8 153.1,337.3" stroke="#c81ed0" stroke-width="1.2" fill="none"/><path d="M181.3,192.9 Q191.8,274.0 174.2,355.2" stroke="#c81ed0" stroke-width="1.2" fill="none"/><path d="M202.4,199.5 Q212.9,286.2 195.3,373.0" stroke="#c81ed0" stroke-width="1.2" fill="none"/><path d="M223.5,206.0 Q234.0,298.4 216.5,390.8" stroke="#c81ed0" stroke-width="1.2" fill="none"/><path d="M244.6,212.6 Q255.1,310.6 237.6,408.6" stroke="#c81ed0" stroke-width="1.2" fill="none"/><path d="M265.7,219.2 Q276.2,322.8 258.7,426.5" stroke="#c81ed0" stroke-width="1.2" fill="none"/><path d="M286.8,225.7 Q297.3,335.0 279.8,444.3" stroke="#c81ed0" stroke-width="1.2" fill="none"/><path d="M307.9,232.3 Q318.4,347.2 300.9,462.1" stroke="#c81ed0" stroke-width="1.2" fill="none"/><path d="M286.8,241.7 Q290.3,376.7 300.9,466.8" stroke="#c81ed0" stroke-width="1.3" fill="none"/><path d="M307.9,238.4 Q314.4,358.5 333.7,438.7" stroke="#c81ed0" stroke-width="1.3" fill="none"/><path d="M329.0,235.1 Q338.4,346.0 366.5,419.9" stroke="#c81ed0" stroke-width="1.3" fill="none"/><path d="M350.1,231.8 Q366.0,341.9 413.4,415.2" stroke="#c81ed0" stroke-width="1.3" fill="none"/><path d="M371.2,228.5 Q394.7,360.2 465.0,448.0" stroke="#c81ed0" stroke-width="1.3" fill="none"/><path d="M392.3,225.2 Q422.2,364.6 511.9,457.4" stroke="#c81ed0" stroke-width="1.3" fill="none"/><path d="M413.4,222.0 Q452.7,360.4 570.6,452.7" stroke="#c81ed0" stroke-width="1.3" fill="none"/><path d="M434.6,218.7 Q480.9,350.7 619.8,438.7" stroke="#c81ed0" stroke-width="1.3" fill="none"/><path d="M455.7,215.4 Q504.3,329.7 650.3,405.8" stroke="#c81ed0" stroke-width="1.3" fill="none"/><path d="M476.8,212.1 Q520.2,297.4 650.3,354.2" stroke="#c81ed0" stroke-width="1.3" fill="none"/><path d="M497.9,208.8 Q536.0,267.9 650.3,307.3" stroke="#c81ed0" stroke-width="1.3" fill="none"/><path d="M519.0,205.5 Q551.8,244.1 650.3,269.8" stroke="#c81ed0" stroke-width="1.3" fill="none"/><path d="M94.5,157.2 Q102.5,199.5 113.3,241.7" stroke="#f03030" stroke-width="1.2" fill="none"/><path d="M108.6,158.6 Q116.6,201.6 127.3,244.5" stroke="#f03030" stroke-width="1.2" fill="none"/><path d="M122.6,160.1 Q130.6,203.7 141.4,247.3" stroke="#f03030" stroke-width="1.2" fill="none"/><path d="M136.7,161.5 Q144.7,205.8 155.5,250.1" stroke="#f03030" stroke-width="1.2" fill="none"/><path d="M150.8,162.9 Q158.8,207.9 169.5,252.9" stroke="#f03030" stroke-width="1.2" fill="none"/><path d="M164.9,164.3 Q172.9,210.0 183.6,255.7" stroke="#f03030" stroke-width="1.2" fill="none"/><path d="M178.9,165.7 Q186.9,212.1 197.7,258.5" stroke="#f03030" stroke-width="1.2" fill="none"/><path d="M193.0,167.1 Q201.0,214.2 211.8,261.4" stroke="#f03030" stroke-width="1.2" fill="none"/><path d="M207.1,168.5 Q215.1,216.3 225.8,264.2" stroke="#f03030" stroke-width="1.2" fill="none"/><path d="M221.1,169.9 Q229.1,218.4 239.9,267.0" stroke="#f03030" stroke-width="1.2" fill="none"/><path d="M235.2,171.3 Q243.2,220.6 254.0,269.8" stroke="#f03030" stroke-width="1.2" fill="none"/><path d="M249.3,172.7 Q257.3,220.1 268.0,267.5" stroke="#f03030" stroke-width="1.2" fill="none"/><path d="M263.4,174.1 Q271.4,219.6 282.1,265.1" stroke="#f03030" stroke-width="1.2" fill="none"/><path d="M277.4,172.2 Q285.4,217.5 296.2,262.8" stroke="#f03030" stroke-width="1.2" fill="none"/><path d="M291.5,170.4 Q299.5,215.4 310.3,260.4" stroke="#f03030" stroke-width="1.2" fill="none"/><path d="M305.6,168.5 Q313.6,213.3 324.3,258.1" stroke="#f03030" stroke-width="1.2" fill="none"/><path d="M319.6,166.6 Q327.6,211.2 338.4,255.7" stroke="#f03030" stroke-width="1.2" fill="none"/><path d="M333.7,164.7 Q341.7,209.1 352.5,253.4" stroke="#f03030" stroke-width="1.2" fill="none"/><path d="M347.8,162.9 Q355.8,207.0 366.5,251.0" stroke="#f03030" stroke-width="1.2" fill="none"/><path d="M361.9,161.0 Q369.9,204.8 380.6,248.7" stroke="#f03030" stroke-width="1.2" fill="none"/><path d="M94.5,166.6 Q104.5,204.1 94.5,241.7" stroke="#5ab8e0" stroke-width="1.3" fill="none"/><path d="M112.3,169.4 Q122.3,208.4 112.3,247.3" stroke="#5ab8e0" stroke-width="1.3" fill="none"/><path d="M130.1,172.2 Q140.1,212.6 130.1,252.9" stroke="#5ab8e0" stroke-width="1.3" fill="none"/><path d="M148.0,175.1 Q158.0,216.8 148.0,258.5" stroke="#5ab8e0" stroke-width="1.3" fill="none"/><path d="M165.8,177.9 Q175.8,221.0 165.8,264.2" stroke="#5ab8e0" stroke-width="1.3" fill="none"/><path d="M183.6,180.7 Q193.6,225.2 183.6,269.8" stroke="#5ab8e0" stroke-width="1.3" fill="none"/><path d="M201.4,183.5 Q211.4,229.5 201.4,275.4" stroke="#5ab8e0" stroke-width="1.3" fill="none"/><path d="M219.3,186.3 Q229.3,233.7 219.3,281.1" stroke="#5ab8e0" stroke-width="1.3" fill="none"/><path d="M237.1,189.1 Q247.1,237.9 237.1,286.7" stroke="#5ab8e0" stroke-width="1.3" fill="none"/><path d="M254.9,191.9 Q264.9,242.6 254.9,293.3" stroke="#5ab8e0" stroke-width="1.3" fill="none"/><path d="M272.7,194.8 Q282.7,241.7 272.7,288.6" stroke="#5ab8e0" stroke-width="1.3" fill="none"/><path d="M290.6,197.6 Q300.6,240.7 290.6,283.9" stroke="#5ab8e0" stroke-width="1.3" fill="none"/><path d="M308.4,200.4 Q318.4,239.8 308.4,279.2" stroke="#5ab8e0" stroke-width="1.3" fill="none"/><path d="M326.2,203.2 Q336.2,238.8 326.2,274.5" stroke="#5ab8e0" stroke-width="1.3" fill="none"/><path d="M344.0,206.0 Q354.0,237.9 344.0,269.8" stroke="#5ab8e0" stroke-width="1.3" fill="none"/><path d="M361.9,202.3 Q371.9,233.7 361.9,265.1" stroke="#5ab8e0" stroke-width="1.3" fill="none"/><path d="M379.7,198.5 Q389.7,229.5 379.7,260.4" stroke="#5ab8e0" stroke-width="1.3" fill="none"/><path d="M397.5,194.8 Q407.5,225.2 397.5,255.7" stroke="#5ab8e0" stroke-width="1.3" fill="none"/><path d="M415.3,191.0 Q425.3,221.0 415.3,251.0" stroke="#5ab8e0" stroke-width="1.3" fill="none"/><path d="M433.1,187.3 Q443.1,216.8 433.1,246.4" stroke="#5ab8e0" stroke-width="1.3" fill="none"/><path d="M451.0,183.5 Q461.0,212.6 451.0,241.7" stroke="#5ab8e0" stroke-width="1.3" fill="none"/><path d="M468.8,179.8 Q478.8,208.4 468.8,237.0" stroke="#5ab8e0" stroke-width="1.3" fill="none"/><path d="M486.6,176.0 Q496.6,204.1 486.6,232.3" stroke="#5ab8e0" stroke-width="1.3" fill="none"/><path d="M504.4,172.2 Q514.4,199.9 504.4,227.6" stroke="#5ab8e0" stroke-width="1.3" fill="none"/><path d="M371.2,204.1 L418.1,260.4" stroke="#2a3a70" stroke-width="1.2"/><path d="M390.0,207.9 L436.9,263.2" stroke="#2a3a70" stroke-width="1.2"/><path d="M408.8,211.6 L455.7,266.1" stroke="#2a3a70" stroke-width="1.2"/><path d="M427.5,215.4 L474.4,268.9" stroke="#2a3a70" stroke-width="1.2"/><path d="M446.3,219.2 L493.2,271.7" stroke="#2a3a70" stroke-width="1.2"/><path d="M465.0,222.9 L511.9,274.5" stroke="#2a3a70" stroke-width="1.2"/><path d="M483.8,226.7 L530.7,277.3" stroke="#2a3a70" stroke-width="1.2"/><path d="M502.6,230.4 L549.5,280.1" stroke="#2a3a70" stroke-width="1.2"/><path d="M521.3,234.2 L568.2,282.9" stroke="#2a3a70" stroke-width="1.2"/><path d="M540.1,237.9 L587.0,285.8" stroke="#2a3a70" stroke-width="1.2"/><path d="M357.2,161.9 Q411.1,157.9 465.0,185.4" stroke="#50e040" stroke-width="1.2" fill="none"/><path d="M362.8,160.5 Q416.7,156.5 470.7,187.3" stroke="#50e040" stroke-width="1.2" fill="none"/><path d="M368.4,159.1 Q422.4,155.1 476.3,189.1" stroke="#50e040" stroke-width="1.2" fill="none"/><path d="M374.0,157.7 Q428.0,153.7 481.9,191.0" stroke="#50e040" stroke-width="1.2" fill="none"/><path d="M379.7,156.3 Q433.6,152.3 487.6,192.9" stroke="#50e040" stroke-width="1.2" fill="none"/><path d="M385.3,154.9 Q439.2,150.9 493.2,194.8" stroke="#50e040" stroke-width="1.2" fill="none"/><path d="M390.9,153.5 Q444.9,149.5 498.8,196.6" stroke="#50e040" stroke-width="1.2" fill="none"/><path d="M390.0,154.9 Q448.6,154.9 507.3,190.1" stroke="#e03030" stroke-width="1.2" fill="none"/><path d="M397.0,154.9 Q453.3,154.9 509.6,192.4" stroke="#e03030" stroke-width="1.2" fill="none"/><path d="M404.1,154.9 Q458.0,154.9 511.9,194.8" stroke="#e03030" stroke-width="1.2" fill="none"/><path d="M411.1,154.9 Q462.7,154.9 514.3,197.1" stroke="#e03030" stroke-width="1.2" fill="none"/><path d="M418.1,154.9 Q467.4,154.9 516.6,199.5" stroke="#e03030" stroke-width="1.2" fill="none"/><path d="M425.2,154.9 Q472.1,154.9 519.0,201.8" stroke="#e03030" stroke-width="1.2" fill="none"/></svg>
<div class="a" style="left:264px;top:2948px;width:652px;height:52px;background:#474747;"></div>
<svg class="a" style="left:916px;top:2425px;" width="996" height="575" viewBox="0 0 996 575"><defs><linearGradient id="wb" x1="0" y1="0" x2="0.3" y2="1"><stop offset="0" stop-color="#c9ccd3"/><stop offset="1" stop-color="#b1b5bd"/></linearGradient><linearGradient id="ww" x1="0" y1="0" x2="0" y2="1"><stop offset="0" stop-color="#dcdee2"/><stop offset="0.45" stop-color="#e2e4e8"/><stop offset="1" stop-color="#e8eaee"/></linearGradient><filter id="wbl2"><feGaussianBlur stdDeviation="2"/></filter></defs><rect width="996" height="575" fill="#686c74"/><path d="M0.0,0.0 L201.0,0.0 C284.0,105.0 324.0,275.0 314.0,395.0 C304.0,475.0 264.0,535.0 221.0,575.0 L0.0,575.0Z" fill="url(#wb)"/><path d="M82.0,25.0 C104.0,15.0 144.0,19.0 221.0,34.0 C334.0,43.0 434.0,27.0 504.0,26.0 C584.0,38.0 644.0,55.0 737.0,112.0 C784.0,140.0 844.0,170.0 884.0,182.0 L904.0,235.0 L904.0,305.0 L874.0,365.0 L824.0,405.0 L744.0,425.0 L654.0,415.0 L564.0,415.0 L478.0,475.0 C444.0,480.0 414.0,495.0 384.0,505.0 C354.0,510.0 334.0,515.0 309.0,515.0 C274.0,510.0 244.0,495.0 224.0,480.0 C194.0,455.0 179.0,435.0 164.0,405.0 C144.0,375.0 124.0,335.0 104.0,295.0 C84.0,265.0 69.0,235.0 53.0,185.0 C52.0,125.0 54.0,75.0 57.0,56.0 C64.0,40.0 74.0,30.0 82.0,25.0Z" fill="url(#ww)"/><path d="M724.0,135.0 Q813.3,265.3 971.0,273.5 Q868.0,167.6 724.0,135.0Z" fill="#e8eaee" stroke="#8e929a" stroke-width="0.9"/><path d="M724.0,135.0 Q847.5,194.2 971.0,273.5" stroke="#d8d2c8" stroke-width="1" fill="none"/><path d="M714.0,160.0 Q819.9,302.3 996.0,323.5 Q876.1,205.4 714.0,160.0Z" fill="#e8eaee" stroke="#8e929a" stroke-width="0.9"/><path d="M714.0,160.0 Q855.0,231.8 996.0,323.5" stroke="#d8d2c8" stroke-width="1" fill="none"/><path d="M699.0,185.0 Q809.8,339.0 996.0,375.0 Q870.1,244.6 699.0,185.0Z" fill="#e8eaee" stroke="#8e929a" stroke-width="0.9"/><path d="M699.0,185.0 Q847.5,270.0 996.0,375.0" stroke="#d8d2c8" stroke-width="1" fill="none"/><path d="M684.0,205.0 Q790.2,376.9 982.7,438.6 Q859.2,288.7 684.0,205.0Z" fill="#e8eaee" stroke="#8e929a" stroke-width="0.9"/><path d="M684.0,205.0 Q833.3,311.8 982.7,438.6" stroke="#d8d2c8" stroke-width="1" fill="none"/><path d="M664.0,225.0 Q757.6,406.5 946.0,485.0 Q833.5,324.1 664.0,225.0Z" fill="#e8eaee" stroke="#8e929a" stroke-width="0.9"/><path d="M664.0,225.0 Q805.0,345.0 946.0,485.0" stroke="#d8d2c8" stroke-width="1" fill="none"/><path d="M644.0,245.0 Q713.4,433.1 889.0,530.0 Q798.3,360.1 644.0,245.0Z" fill="#e8eaee" stroke="#8e929a" stroke-width="0.9"/><path d="M644.0,245.0 Q766.5,377.5 889.0,530.0" stroke="#d8d2c8" stroke-width="1" fill="none"/><path d="M614.0,265.0 Q654.7,448.8 811.0,553.7 Q747.2,385.7 614.0,265.0Z" fill="#e8eaee" stroke="#8e929a" stroke-width="0.9"/><path d="M614.0,265.0 Q712.5,399.3 811.0,553.7" stroke="#d8d2c8" stroke-width="1" fill="none"/><path d="M584.0,280.0 Q593.5,451.4 727.5,558.7 Q693.1,400.1 584.0,280.0Z" fill="#e8eaee" stroke="#8e929a" stroke-width="0.9"/><path d="M584.0,280.0 Q655.8,409.3 727.5,558.7" stroke="#d8d2c8" stroke-width="1" fill="none"/><path d="M554.0,290.0 Q538.9,442.5 654.0,543.7 Q643.1,401.4 554.0,290.0Z" fill="#e8eaee" stroke="#8e929a" stroke-width="0.9"/><path d="M554.0,290.0 Q604.0,406.8 654.0,543.7" stroke="#d8d2c8" stroke-width="1" fill="none"/><path d="M524.0,295.0 Q481.1,412.0 574.0,495.0 Q589.7,384.8 524.0,295.0Z" fill="#e8eaee" stroke="#8e929a" stroke-width="0.9"/><path d="M524.0,295.0 Q549.0,385.0 574.0,495.0" stroke="#d8d2c8" stroke-width="1" fill="none"/><path d="M464.0,295.0 Q407.0,403.0 489.0,493.6 Q518.2,389.1 464.0,295.0Z" fill="#e8eaee" stroke="#8e929a" stroke-width="0.9"/><path d="M464.0,295.0 Q476.5,384.3 489.0,493.6" stroke="#d8d2c8" stroke-width="1" fill="none"/><path d="M115.0,265.0 Q53.4,283.9 90.0,337.0 Q141.8,314.6 115.0,265.0Z" fill="#e4e6ea" stroke="#b8bcc4" stroke-width="0.9"/><path d="M115.0,265.0 L90.0,337.0" stroke="#d2d0ca" stroke-width="0.9"/><path d="M154.0,268.0 Q92.0,339.6 133.0,425.0 Q184.7,352.0 154.0,268.0Z" fill="#e4e6ea" stroke="#b8bcc4" stroke-width="0.9"/><path d="M154.0,268.0 L133.0,425.0" stroke="#d2d0ca" stroke-width="0.9"/><path d="M184.0,271.0 Q123.7,365.6 167.0,469.0 Q216.9,373.6 184.0,271.0Z" fill="#e4e6ea" stroke="#b8bcc4" stroke-width="0.9"/><path d="M184.0,271.0 L167.0,469.0" stroke="#d2d0ca" stroke-width="0.9"/><path d="M203.0,274.0 Q144.6,390.7 190.0,513.0 Q238.0,395.8 203.0,274.0Z" fill="#e4e6ea" stroke="#b8bcc4" stroke-width="0.9"/><path d="M203.0,274.0 L190.0,513.0" stroke="#d2d0ca" stroke-width="0.9"/><path d="M240.0,277.0 Q183.5,408.7 231.0,544.0 Q277.1,411.9 240.0,277.0Z" fill="#e4e6ea" stroke="#b8bcc4" stroke-width="0.9"/><path d="M240.0,277.0 L231.0,544.0" stroke="#d2d0ca" stroke-width="0.9"/><path d="M270.0,280.0 Q215.5,421.1 265.0,564.0 Q309.1,422.7 270.0,280.0Z" fill="#e4e6ea" stroke="#b8bcc4" stroke-width="0.9"/><path d="M270.0,280.0 L265.0,564.0" stroke="#d2d0ca" stroke-width="0.9"/><path d="M310.0,283.0 Q257.5,424.8 309.0,567.0 Q351.1,425.1 310.0,283.0Z" fill="#e4e6ea" stroke="#b8bcc4" stroke-width="0.9"/><path d="M310.0,283.0 L309.0,567.0" stroke="#d2d0ca" stroke-width="0.9"/><path d="M350.0,286.0 Q299.5,420.6 353.0,554.0 Q393.1,419.5 350.0,286.0Z" fill="#e4e6ea" stroke="#b8bcc4" stroke-width="0.9"/><path d="M350.0,286.0 L353.0,554.0" stroke="#d2d0ca" stroke-width="0.9"/><path d="M387.0,289.0 Q338.5,420.9 394.0,550.0 Q432.1,418.4 387.0,289.0Z" fill="#e4e6ea" stroke="#b8bcc4" stroke-width="0.9"/><path d="M387.0,289.0 L394.0,550.0" stroke="#d2d0ca" stroke-width="0.9"/><path d="M423.0,292.0 Q376.6,408.5 434.0,520.0 Q470.1,404.0 423.0,292.0Z" fill="#e4e6ea" stroke="#b8bcc4" stroke-width="0.9"/><path d="M423.0,292.0 L434.0,520.0" stroke="#d2d0ca" stroke-width="0.9"/><path d="M463.0,295.0 Q418.6,399.4 478.0,496.0 Q512.0,392.4 463.0,295.0Z" fill="#e4e6ea" stroke="#b8bcc4" stroke-width="0.9"/><path d="M463.0,295.0 L478.0,496.0" stroke="#d2d0ca" stroke-width="0.9"/><path d="M65.1,37.9 Q63.0,94.9 84.0,102.9 Q105.0,94.9 102.9,37.9" fill="#e6e8ec" stroke="#c2c6cc" stroke-width="1"/><path d="M81.0,42.9 L84.0,100.9" stroke="#cfd2d8" stroke-width="0.8"/><path d="M107.1,38.8 Q105.0,95.8 126.0,103.8 Q147.0,95.8 144.9,38.8" fill="#e6e8ec" stroke="#c2c6cc" stroke-width="1"/><path d="M123.0,43.8 L126.0,101.8" stroke="#cfd2d8" stroke-width="0.8"/><path d="M149.1,47.8 Q147.0,104.8 168.0,112.8 Q189.0,104.8 186.9,47.8" fill="#e6e8ec" stroke="#c2c6cc" stroke-width="1"/><path d="M165.0,52.8 L168.0,110.8" stroke="#cfd2d8" stroke-width="0.8"/><path d="M191.1,43.9 Q189.0,100.9 210.0,108.9 Q231.0,100.9 228.9,43.9" fill="#e6e8ec" stroke="#c2c6cc" stroke-width="1"/><path d="M207.0,48.9 L210.0,106.9" stroke="#cfd2d8" stroke-width="0.8"/><path d="M233.1,52.4 Q231.0,109.4 252.0,117.4 Q273.0,109.4 270.9,52.4" fill="#e6e8ec" stroke="#c2c6cc" stroke-width="1"/><path d="M249.0,57.4 L252.0,115.4" stroke="#cfd2d8" stroke-width="0.8"/><path d="M275.1,53.4 Q273.0,110.4 294.0,118.4 Q315.0,110.4 312.9,53.4" fill="#e6e8ec" stroke="#c2c6cc" stroke-width="1"/><path d="M291.0,58.4 L294.0,116.4" stroke="#cfd2d8" stroke-width="0.8"/><path d="M317.1,52.7 Q315.0,109.7 336.0,117.7 Q357.0,109.7 354.9,52.7" fill="#e6e8ec" stroke="#c2c6cc" stroke-width="1"/><path d="M333.0,57.7 L336.0,115.7" stroke="#cfd2d8" stroke-width="0.8"/><path d="M359.1,61.1 Q357.0,118.1 378.0,126.1 Q399.0,118.1 396.9,61.1" fill="#e6e8ec" stroke="#c2c6cc" stroke-width="1"/><path d="M375.0,66.1 L378.0,124.1" stroke="#cfd2d8" stroke-width="0.8"/><path d="M401.1,58.4 Q399.0,115.4 420.0,123.4 Q441.0,115.4 438.9,58.4" fill="#e6e8ec" stroke="#c2c6cc" stroke-width="1"/><path d="M417.0,63.4 L420.0,121.4" stroke="#cfd2d8" stroke-width="0.8"/><path d="M443.1,66.2 Q441.0,123.2 462.0,131.2 Q483.0,123.2 480.9,66.2" fill="#e6e8ec" stroke="#c2c6cc" stroke-width="1"/><path d="M459.0,71.2 L462.0,129.2" stroke="#cfd2d8" stroke-width="0.8"/><path d="M485.1,64.8 Q483.0,121.8 504.0,129.8 Q525.0,121.8 522.9,64.8" fill="#e6e8ec" stroke="#c2c6cc" stroke-width="1"/><path d="M501.0,69.8 L504.0,127.8" stroke="#cfd2d8" stroke-width="0.8"/><path d="M527.1,68.1 Q525.0,125.1 546.0,133.1 Q567.0,125.1 564.9,68.1" fill="#e6e8ec" stroke="#c2c6cc" stroke-width="1"/><path d="M543.0,73.1 L546.0,131.1" stroke="#cfd2d8" stroke-width="0.8"/><path d="M569.1,75.1 Q567.0,132.1 588.0,140.1 Q609.0,132.1 606.9,75.1" fill="#e6e8ec" stroke="#c2c6cc" stroke-width="1"/><path d="M585.0,80.1 L588.0,138.1" stroke="#cfd2d8" stroke-width="0.8"/><path d="M611.1,82.9 Q609.0,139.9 630.0,147.9 Q651.0,139.9 648.9,82.9" fill="#e6e8ec" stroke="#c2c6cc" stroke-width="1"/><path d="M627.0,87.9 L630.0,145.9" stroke="#cfd2d8" stroke-width="0.8"/><path d="M76.2,105.5 Q74.0,162.5 96.0,170.5 Q118.0,162.5 115.8,105.5" fill="#e6e8ec" stroke="#c2c6cc" stroke-width="1"/><path d="M93.0,110.5 L96.0,168.5" stroke="#cfd2d8" stroke-width="0.8"/><path d="M120.2,109.7 Q118.0,166.7 140.0,174.7 Q162.0,166.7 159.8,109.7" fill="#e6e8ec" stroke="#c2c6cc" stroke-width="1"/><path d="M137.0,114.7 L140.0,172.7" stroke="#cfd2d8" stroke-width="0.8"/><path d="M164.2,117.5 Q162.0,174.5 184.0,182.5 Q206.0,174.5 203.8,117.5" fill="#e6e8ec" stroke="#c2c6cc" stroke-width="1"/><path d="M181.0,122.5 L184.0,180.5" stroke="#cfd2d8" stroke-width="0.8"/><path d="M208.2,124.4 Q206.0,181.4 228.0,189.4 Q250.0,181.4 247.8,124.4" fill="#e6e8ec" stroke="#c2c6cc" stroke-width="1"/><path d="M225.0,129.4 L228.0,187.4" stroke="#cfd2d8" stroke-width="0.8"/><path d="M252.2,122.9 Q250.0,179.9 272.0,187.9 Q294.0,179.9 291.8,122.9" fill="#e6e8ec" stroke="#c2c6cc" stroke-width="1"/><path d="M269.0,127.9 L272.0,185.9" stroke="#cfd2d8" stroke-width="0.8"/><path d="M296.2,123.8 Q294.0,180.8 316.0,188.8 Q338.0,180.8 335.8,123.8" fill="#e6e8ec" stroke="#c2c6cc" stroke-width="1"/><path d="M313.0,128.8 L316.0,186.8" stroke="#cfd2d8" stroke-width="0.8"/><path d="M340.2,133.7 Q338.0,190.7 360.0,198.7 Q382.0,190.7 379.8,133.7" fill="#e6e8ec" stroke="#c2c6cc" stroke-width="1"/><path d="M357.0,138.7 L360.0,196.7" stroke="#cfd2d8" stroke-width="0.8"/><path d="M384.2,125.6 Q382.0,182.6 404.0,190.6 Q426.0,182.6 423.8,125.6" fill="#e6e8ec" stroke="#c2c6cc" stroke-width="1"/><path d="M401.0,130.6 L404.0,188.6" stroke="#cfd2d8" stroke-width="0.8"/><path d="M428.2,138.3 Q426.0,195.3 448.0,203.3 Q470.0,195.3 467.8,138.3" fill="#e6e8ec" stroke="#c2c6cc" stroke-width="1"/><path d="M445.0,143.3 L448.0,201.3" stroke="#cfd2d8" stroke-width="0.8"/><path d="M472.2,134.5 Q470.0,191.5 492.0,199.5 Q514.0,191.5 511.8,134.5" fill="#e6e8ec" stroke="#c2c6cc" stroke-width="1"/><path d="M489.0,139.5 L492.0,197.5" stroke="#cfd2d8" stroke-width="0.8"/><path d="M516.2,135.7 Q514.0,192.7 536.0,200.7 Q558.0,192.7 555.8,135.7" fill="#e6e8ec" stroke="#c2c6cc" stroke-width="1"/><path d="M533.0,140.7 L536.0,198.7" stroke="#cfd2d8" stroke-width="0.8"/><path d="M560.2,138.4 Q558.0,195.4 580.0,203.4 Q602.0,195.4 599.8,138.4" fill="#e6e8ec" stroke="#c2c6cc" stroke-width="1"/><path d="M577.0,143.4 L580.0,201.4" stroke="#cfd2d8" stroke-width="0.8"/><path d="M604.2,143.7 Q602.0,200.7 624.0,208.7 Q646.0,200.7 643.8,143.7" fill="#e6e8ec" stroke="#c2c6cc" stroke-width="1"/><path d="M621.0,148.7 L624.0,206.7" stroke="#cfd2d8" stroke-width="0.8"/><path d="M63.3,193.8 Q61.0,250.8 84.0,258.8 Q107.0,250.8 104.7,193.8" fill="#e6e8ec" stroke="#c2c6cc" stroke-width="1"/><path d="M81.0,198.8 L84.0,256.8" stroke="#cfd2d8" stroke-width="0.8"/><path d="M109.3,188.2 Q107.0,245.2 130.0,253.2 Q153.0,245.2 150.7,188.2" fill="#e6e8ec" stroke="#c2c6cc" stroke-width="1"/><path d="M127.0,193.2 L130.0,251.2" stroke="#cfd2d8" stroke-width="0.8"/><path d="M155.3,195.0 Q153.0,252.0 176.0,260.0 Q199.0,252.0 196.7,195.0" fill="#e6e8ec" stroke="#c2c6cc" stroke-width="1"/><path d="M173.0,200.0 L176.0,258.0" stroke="#cfd2d8" stroke-width="0.8"/><path d="M201.3,197.7 Q199.0,254.7 222.0,262.7 Q245.0,254.7 242.7,197.7" fill="#e6e8ec" stroke="#c2c6cc" stroke-width="1"/><path d="M219.0,202.7 L222.0,260.7" stroke="#cfd2d8" stroke-width="0.8"/><path d="M247.3,196.5 Q245.0,253.5 268.0,261.5 Q291.0,253.5 288.7,196.5" fill="#e6e8ec" stroke="#c2c6cc" stroke-width="1"/><path d="M265.0,201.5 L268.0,259.5" stroke="#cfd2d8" stroke-width="0.8"/><path d="M293.3,200.6 Q291.0,257.6 314.0,265.6 Q337.0,257.6 334.7,200.6" fill="#e6e8ec" stroke="#c2c6cc" stroke-width="1"/><path d="M311.0,205.6 L314.0,263.6" stroke="#cfd2d8" stroke-width="0.8"/><path d="M339.3,196.8 Q337.0,253.8 360.0,261.8 Q383.0,253.8 380.7,196.8" fill="#e6e8ec" stroke="#c2c6cc" stroke-width="1"/><path d="M357.0,201.8 L360.0,259.8" stroke="#cfd2d8" stroke-width="0.8"/><path d="M385.3,198.7 Q383.0,255.7 406.0,263.7 Q429.0,255.7 426.7,198.7" fill="#e6e8ec" stroke="#c2c6cc" stroke-width="1"/><path d="M403.0,203.7 L406.0,261.7" stroke="#cfd2d8" stroke-width="0.8"/><path d="M431.3,202.5 Q429.0,259.5 452.0,267.5 Q475.0,259.5 472.7,202.5" fill="#e6e8ec" stroke="#c2c6cc" stroke-width="1"/><path d="M449.0,207.5 L452.0,265.5" stroke="#cfd2d8" stroke-width="0.8"/><path d="M477.3,210.2 Q475.0,267.2 498.0,275.2 Q521.0,267.2 518.7,210.2" fill="#e6e8ec" stroke="#c2c6cc" stroke-width="1"/><path d="M495.0,215.2 L498.0,273.2" stroke="#cfd2d8" stroke-width="0.8"/><path d="M523.3,209.1 Q521.0,266.1 544.0,274.1 Q567.0,266.1 564.7,209.1" fill="#e6e8ec" stroke="#c2c6cc" stroke-width="1"/><path d="M541.0,214.1 L544.0,272.1" stroke="#cfd2d8" stroke-width="0.8"/><path d="M569.3,209.8 Q567.0,266.8 590.0,274.8 Q613.0,266.8 610.7,209.8" fill="#e6e8ec" stroke="#c2c6cc" stroke-width="1"/><path d="M587.0,214.8 L590.0,272.8" stroke="#cfd2d8" stroke-width="0.8"/><path d="M106.5,271.0 Q104.0,328.0 129.0,336.0 Q154.0,328.0 151.5,271.0" fill="#e6e8ec" stroke="#c2c6cc" stroke-width="1"/><path d="M126.0,276.0 L129.0,334.0" stroke="#cfd2d8" stroke-width="0.8"/><path d="M156.5,271.4 Q154.0,328.4 179.0,336.4 Q204.0,328.4 201.5,271.4" fill="#e6e8ec" stroke="#c2c6cc" stroke-width="1"/><path d="M176.0,276.4 L179.0,334.4" stroke="#cfd2d8" stroke-width="0.8"/><path d="M206.5,271.6 Q204.0,328.6 229.0,336.6 Q254.0,328.6 251.5,271.6" fill="#e6e8ec" stroke="#c2c6cc" stroke-width="1"/><path d="M226.0,276.6 L229.0,334.6" stroke="#cfd2d8" stroke-width="0.8"/><path d="M256.5,279.5 Q254.0,336.5 279.0,344.5 Q304.0,336.5 301.5,279.5" fill="#e6e8ec" stroke="#c2c6cc" stroke-width="1"/><path d="M276.0,284.5 L279.0,342.5" stroke="#cfd2d8" stroke-width="0.8"/><path d="M306.5,280.4 Q304.0,337.4 329.0,345.4 Q354.0,337.4 351.5,280.4" fill="#e6e8ec" stroke="#c2c6cc" stroke-width="1"/><path d="M326.0,285.4 L329.0,343.4" stroke="#cfd2d8" stroke-width="0.8"/><path d="M356.5,276.9 Q354.0,333.9 379.0,341.9 Q404.0,333.9 401.5,276.9" fill="#e6e8ec" stroke="#c2c6cc" stroke-width="1"/><path d="M376.0,281.9 L379.0,339.9" stroke="#cfd2d8" stroke-width="0.8"/><path d="M406.5,282.9 Q404.0,339.9 429.0,347.9 Q454.0,339.9 451.5,282.9" fill="#e6e8ec" stroke="#c2c6cc" stroke-width="1"/><path d="M426.0,287.9 L429.0,345.9" stroke="#cfd2d8" stroke-width="0.8"/><path d="M456.5,284.3 Q454.0,341.3 479.0,349.3 Q504.0,341.3 501.5,284.3" fill="#e6e8ec" stroke="#c2c6cc" stroke-width="1"/><path d="M476.0,289.3 L479.0,347.3" stroke="#cfd2d8" stroke-width="0.8"/><path d="M506.5,290.5 Q504.0,347.5 529.0,355.5 Q554.0,347.5 551.5,290.5" fill="#e6e8ec" stroke="#c2c6cc" stroke-width="1"/><path d="M526.0,295.5 L529.0,353.5" stroke="#cfd2d8" stroke-width="0.8"/><ellipse cx="81.9" cy="76.2" rx="10" ry="5" fill="#d6d8dc" opacity="0.6" filter="url(#wbl2)"/><ellipse cx="96.2" cy="53.7" rx="10" ry="5" fill="#d6d8dc" opacity="0.6" filter="url(#wbl2)"/><ellipse cx="118.6" cy="43.1" rx="10" ry="5" fill="#d6d8dc" opacity="0.6" filter="url(#wbl2)"/><ellipse cx="131.9" cy="38.6" rx="10" ry="5" fill="#d6d8dc" opacity="0.6" filter="url(#wbl2)"/><ellipse cx="149.7" cy="67.6" rx="10" ry="5" fill="#d6d8dc" opacity="0.6" filter="url(#wbl2)"/><ellipse cx="164.7" cy="72.0" rx="10" ry="5" fill="#d6d8dc" opacity="0.6" filter="url(#wbl2)"/><ellipse cx="178.1" cy="64.8" rx="10" ry="5" fill="#d6d8dc" opacity="0.6" filter="url(#wbl2)"/><ellipse cx="196.9" cy="60.2" rx="10" ry="5" fill="#d6d8dc" opacity="0.6" filter="url(#wbl2)"/><ellipse cx="211.6" cy="70.6" rx="10" ry="5" fill="#d6d8dc" opacity="0.6" filter="url(#wbl2)"/><ellipse cx="232.4" cy="56.0" rx="10" ry="5" fill="#d6d8dc" opacity="0.6" filter="url(#wbl2)"/><ellipse cx="245.6" cy="39.4" rx="10" ry="5" fill="#d6d8dc" opacity="0.6" filter="url(#wbl2)"/><ellipse cx="262.0" cy="62.9" rx="10" ry="5" fill="#d6d8dc" opacity="0.6" filter="url(#wbl2)"/><ellipse cx="280.9" cy="69.9" rx="10" ry="5" fill="#d6d8dc" opacity="0.6" filter="url(#wbl2)"/><ellipse cx="289.8" cy="52.4" rx="10" ry="5" fill="#d6d8dc" opacity="0.6" filter="url(#wbl2)"/><ellipse cx="309.7" cy="37.9" rx="10" ry="5" fill="#d6d8dc" opacity="0.6" filter="url(#wbl2)"/><ellipse cx="323.6" cy="43.7" rx="10" ry="5" fill="#d6d8dc" opacity="0.6" filter="url(#wbl2)"/><ellipse cx="336.2" cy="39.4" rx="10" ry="5" fill="#d6d8dc" opacity="0.6" filter="url(#wbl2)"/><ellipse cx="358.7" cy="42.2" rx="10" ry="5" fill="#d6d8dc" opacity="0.6" filter="url(#wbl2)"/><ellipse cx="369.5" cy="52.6" rx="10" ry="5" fill="#d6d8dc" opacity="0.6" filter="url(#wbl2)"/><ellipse cx="391.7" cy="40.2" rx="10" ry="5" fill="#d6d8dc" opacity="0.6" filter="url(#wbl2)"/><ellipse cx="403.5" cy="59.0" rx="10" ry="5" fill="#d6d8dc" opacity="0.6" filter="url(#wbl2)"/><ellipse cx="423.8" cy="69.8" rx="10" ry="5" fill="#d6d8dc" opacity="0.6" filter="url(#wbl2)"/><ellipse cx="439.6" cy="48.1" rx="10" ry="5" fill="#d6d8dc" opacity="0.6" filter="url(#wbl2)"/><ellipse cx="451.2" cy="51.4" rx="10" ry="5" fill="#d6d8dc" opacity="0.6" filter="url(#wbl2)"/><ellipse cx="471.8" cy="75.3" rx="10" ry="5" fill="#d6d8dc" opacity="0.6" filter="url(#wbl2)"/><ellipse cx="480.5" cy="44.0" rx="10" ry="5" fill="#d6d8dc" opacity="0.6" filter="url(#wbl2)"/><ellipse cx="497.3" cy="49.7" rx="10" ry="5" fill="#d6d8dc" opacity="0.6" filter="url(#wbl2)"/><ellipse cx="515.8" cy="68.5" rx="10" ry="5" fill="#d6d8dc" opacity="0.6" filter="url(#wbl2)"/><ellipse cx="529.6" cy="48.6" rx="10" ry="5" fill="#d6d8dc" opacity="0.6" filter="url(#wbl2)"/><ellipse cx="547.2" cy="67.6" rx="10" ry="5" fill="#d6d8dc" opacity="0.6" filter="url(#wbl2)"/><ellipse cx="564.7" cy="95.3" rx="10" ry="5" fill="#d6d8dc" opacity="0.6" filter="url(#wbl2)"/><ellipse cx="581.9" cy="82.1" rx="10" ry="5" fill="#d6d8dc" opacity="0.6" filter="url(#wbl2)"/><ellipse cx="597.2" cy="92.3" rx="10" ry="5" fill="#d6d8dc" opacity="0.6" filter="url(#wbl2)"/><ellipse cx="607.5" cy="103.9" rx="10" ry="5" fill="#d6d8dc" opacity="0.6" filter="url(#wbl2)"/><ellipse cx="630.8" cy="108.7" rx="10" ry="5" fill="#d6d8dc" opacity="0.6" filter="url(#wbl2)"/><ellipse cx="647.0" cy="93.4" rx="10" ry="5" fill="#d6d8dc" opacity="0.6" filter="url(#wbl2)"/><ellipse cx="659.0" cy="84.9" rx="10" ry="5" fill="#d6d8dc" opacity="0.6" filter="url(#wbl2)"/><ellipse cx="677.3" cy="87.8" rx="10" ry="5" fill="#d6d8dc" opacity="0.6" filter="url(#wbl2)"/><ellipse cx="687.7" cy="96.3" rx="10" ry="5" fill="#d6d8dc" opacity="0.6" filter="url(#wbl2)"/><ellipse cx="704.6" cy="105.8" rx="10" ry="5" fill="#d6d8dc" opacity="0.6" filter="url(#wbl2)"/><path d="M524,365 l12 25" stroke="#55585e" stroke-width="1.2"/><path d="M569,375 l12 25" stroke="#55585e" stroke-width="1.2"/><path d="M614,385 l12 25" stroke="#55585e" stroke-width="1.2"/><path d="M659,395 l12 25" stroke="#55585e" stroke-width="1.2"/><path d="M704,405 l12 25" stroke="#55585e" stroke-width="1.2"/><path d="M749,415 l12 25" stroke="#55585e" stroke-width="1.2"/><path d="M794,425 l12 25" stroke="#55585e" stroke-width="1.2"/><path d="M839,435 l12 25" stroke="#55585e" stroke-width="1.2"/></svg>
</div></body></html>
